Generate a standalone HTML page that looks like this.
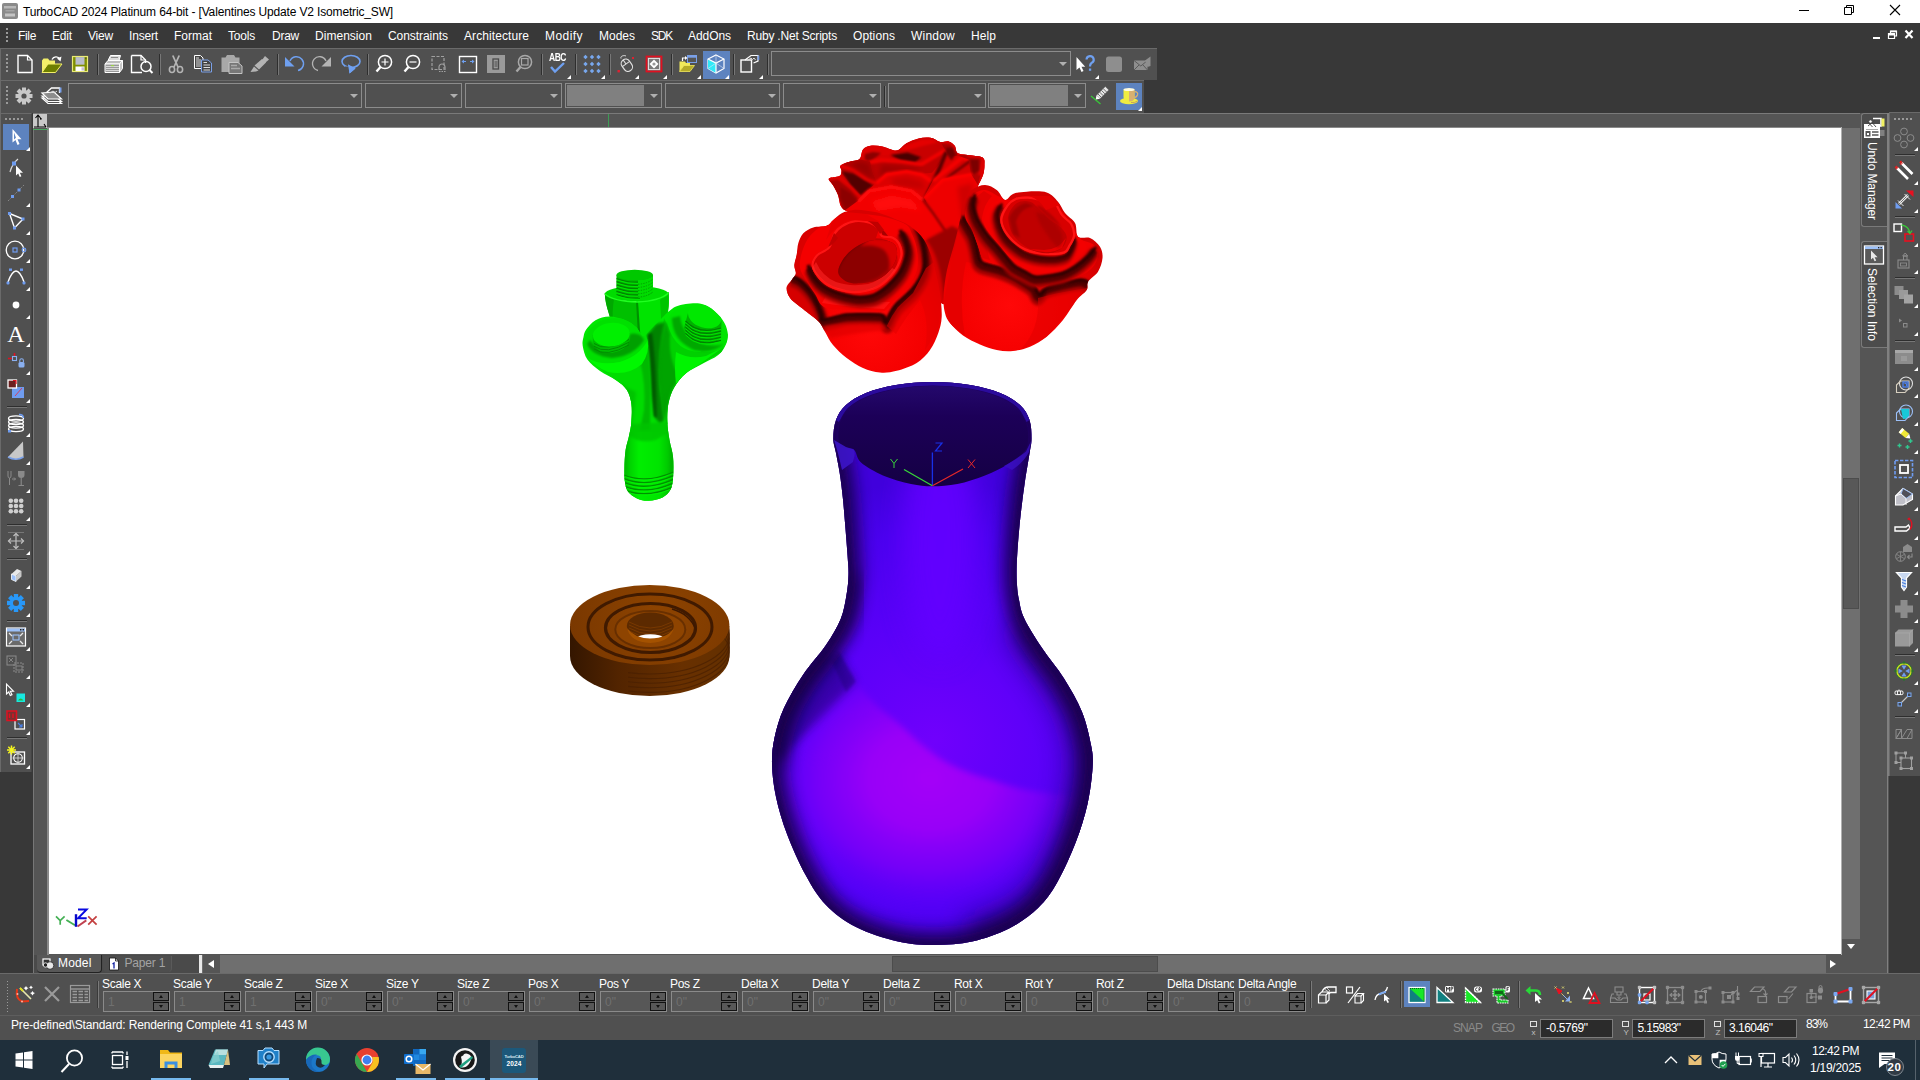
<!DOCTYPE html>
<html><head><meta charset="utf-8"><title>TurboCAD</title>
<style>
html,body{margin:0;padding:0;}
body{width:1920px;height:1080px;overflow:hidden;position:relative;background:#383838;font-family:"Liberation Sans",sans-serif;font-size:12px;}
div,svg{box-sizing:border-box;}
svg{overflow:visible;}
</style></head><body>
<div style="position:absolute;left:0px;top:0px;width:1920px;height:23px;background:#ffffff;"></div>
<div style="position:absolute;left:23px;top:5.84px;font-size:12px;line-height:1;color:#000;white-space:pre;letter-spacing:-0.151px;">TurboCAD 2024 Platinum 64-bit - [Valentines Update V2 Isometric_SW]</div>
<div style="position:absolute;left:0px;top:23px;width:1920px;height:90px;background:#383838;"></div>
<div style="position:absolute;left:18px;top:29.84px;font-size:12px;line-height:1;color:#fff;white-space:pre;letter-spacing:-0.336px;">File</div>
<div style="position:absolute;left:52px;top:29.84px;font-size:12px;line-height:1;color:#fff;white-space:pre;letter-spacing:-0.168px;">Edit</div>
<div style="position:absolute;left:88px;top:29.84px;font-size:12px;line-height:1;color:#fff;white-space:pre;letter-spacing:-0.199px;">View</div>
<div style="position:absolute;left:129px;top:29.84px;font-size:12px;line-height:1;color:#fff;white-space:pre;letter-spacing:-0.167px;">Insert</div>
<div style="position:absolute;left:174px;top:29.84px;font-size:12px;line-height:1;color:#fff;white-space:pre;letter-spacing:0.000px;">Format</div>
<div style="position:absolute;left:228px;top:29.84px;font-size:12px;line-height:1;color:#fff;white-space:pre;letter-spacing:-0.203px;">Tools</div>
<div style="position:absolute;left:272px;top:29.84px;font-size:12px;line-height:1;color:#fff;white-space:pre;letter-spacing:-0.254px;">Draw</div>
<div style="position:absolute;left:315px;top:29.84px;font-size:12px;line-height:1;color:#fff;white-space:pre;letter-spacing:0.033px;">Dimension</div>
<div style="position:absolute;left:388px;top:29.84px;font-size:12px;line-height:1;color:#fff;white-space:pre;letter-spacing:-0.062px;">Constraints</div>
<div style="position:absolute;left:464px;top:29.84px;font-size:12px;line-height:1;color:#fff;white-space:pre;letter-spacing:0.082px;">Architecture</div>
<div style="position:absolute;left:545px;top:29.84px;font-size:12px;line-height:1;color:#fff;white-space:pre;letter-spacing:0.443px;">Modify</div>
<div style="position:absolute;left:599px;top:29.84px;font-size:12px;line-height:1;color:#fff;white-space:pre;letter-spacing:-0.003px;">Modes</div>
<div style="position:absolute;left:651px;top:29.84px;font-size:12px;line-height:1;color:#fff;white-space:pre;letter-spacing:-1.224px;">SDK</div>
<div style="position:absolute;left:688px;top:29.84px;font-size:12px;line-height:1;color:#fff;white-space:pre;letter-spacing:-0.057px;">AddOns</div>
<div style="position:absolute;left:747px;top:29.84px;font-size:12px;line-height:1;color:#fff;white-space:pre;letter-spacing:-0.197px;">Ruby .Net Scripts</div>
<div style="position:absolute;left:853px;top:29.84px;font-size:12px;line-height:1;color:#fff;white-space:pre;letter-spacing:0.094px;">Options</div>
<div style="position:absolute;left:911px;top:29.84px;font-size:12px;line-height:1;color:#fff;white-space:pre;letter-spacing:0.219px;">Window</div>
<div style="position:absolute;left:971px;top:29.84px;font-size:12px;line-height:1;color:#fff;white-space:pre;letter-spacing:0.078px;">Help</div>
<div style="position:absolute;left:6px;top:28px;width:2px;height:2px;background:#9a9a9a;"></div>
<div style="position:absolute;left:6px;top:32px;width:2px;height:2px;background:#9a9a9a;"></div>
<div style="position:absolute;left:6px;top:36px;width:2px;height:2px;background:#9a9a9a;"></div>
<div style="position:absolute;left:6px;top:40px;width:2px;height:2px;background:#9a9a9a;"></div>
<div style="position:absolute;left:0px;top:48px;width:1157px;height:32px;background:#505050;border-top:1px solid #6a6a6a;border-left:1px solid #6a6a6a;"></div>
<div style="position:absolute;left:6px;top:54px;width:2px;height:2px;background:#9a9a9a;"></div>
<div style="position:absolute;left:6px;top:58px;width:2px;height:2px;background:#9a9a9a;"></div>
<div style="position:absolute;left:6px;top:62px;width:2px;height:2px;background:#9a9a9a;"></div>
<div style="position:absolute;left:6px;top:66px;width:2px;height:2px;background:#9a9a9a;"></div>
<div style="position:absolute;left:6px;top:70px;width:2px;height:2px;background:#9a9a9a;"></div>
<div style="position:absolute;left:0px;top:80px;width:1144px;height:33px;background:#505050;border-top:1px solid #6a6a6a;border-left:1px solid #6a6a6a;"></div>
<div style="position:absolute;left:6px;top:86px;width:2px;height:2px;background:#9a9a9a;"></div>
<div style="position:absolute;left:6px;top:90px;width:2px;height:2px;background:#9a9a9a;"></div>
<div style="position:absolute;left:6px;top:94px;width:2px;height:2px;background:#9a9a9a;"></div>
<div style="position:absolute;left:6px;top:98px;width:2px;height:2px;background:#9a9a9a;"></div>
<div style="position:absolute;left:6px;top:102px;width:2px;height:2px;background:#9a9a9a;"></div>
<div style="position:absolute;left:0px;top:113px;width:1860px;height:860px;background:#555555;"></div>
<div style="position:absolute;left:32px;top:113px;width:1828px;height:1px;background:#7a7a7a;"></div>
<div style="position:absolute;left:47px;top:127px;width:1795px;height:1px;background:#8a8a8a;"></div>
<div style="position:absolute;left:47px;top:127px;width:2px;height:828px;background:#8a8a8a;"></div>
<div style="position:absolute;left:1841px;top:127px;width:1px;height:828px;background:#b0b0b0;"></div>
<div style="position:absolute;left:33px;top:113px;width:1px;height:860px;background:#777;"></div>
<div style="position:absolute;left:0px;top:113px;width:33px;height:860px;background:#383838;"></div>
<div style="position:absolute;left:0px;top:113px;width:32px;height:659px;background:#505050;border-top:1px solid #6a6a6a;border-left:1px solid #6a6a6a;border-right:1px solid #444;"></div>
<div style="position:absolute;left:5px;top:118px;width:2px;height:2px;background:#9a9a9a;"></div>
<div style="position:absolute;left:9px;top:118px;width:2px;height:2px;background:#9a9a9a;"></div>
<div style="position:absolute;left:13px;top:118px;width:2px;height:2px;background:#9a9a9a;"></div>
<div style="position:absolute;left:17px;top:118px;width:2px;height:2px;background:#9a9a9a;"></div>
<div style="position:absolute;left:21px;top:118px;width:2px;height:2px;background:#9a9a9a;"></div>
<div style="position:absolute;left:33px;top:114px;width:14px;height:14px;background:#c8c8c8;"></div>
<div style="position:absolute;left:49px;top:128px;width:1792px;height:826px;background:#ffffff;"></div>
<div style="position:absolute;left:1842px;top:128px;width:18px;height:827px;background:#6f6f6f;"></div>
<div style="position:absolute;left:1843px;top:478px;width:16px;height:131px;background:#585858;border:1px solid #4c4c4c;"></div>
<div style="position:absolute;left:1842px;top:939px;width:18px;height:16px;background:#555555;"></div>
<div style="position:absolute;left:200px;top:955px;width:1642px;height:18px;background:#6f6f6f;"></div>
<div style="position:absolute;left:892px;top:956px;width:266px;height:16px;background:#585858;border:1px solid #4c4c4c;"></div>
<div style="position:absolute;left:1826px;top:955px;width:16px;height:18px;background:#555555;"></div>
<div style="position:absolute;left:203px;top:955px;width:17px;height:18px;background:#555555;"></div>
<div style="position:absolute;left:1842px;top:955px;width:18px;height:18px;background:#555555;"></div>
<div style="position:absolute;left:1860px;top:113px;width:29px;height:860px;background:#555555;"></div>
<div style="position:absolute;left:1889px;top:112px;width:31px;height:664px;background:#505050;border-top:1px solid #6a6a6a;border-left:1px solid #6a6a6a;"></div>
<div style="position:absolute;left:1889px;top:776px;width:31px;height:197px;background:#383838;"></div>
<div style="position:absolute;left:1894px;top:118px;width:2px;height:2px;background:#9a9a9a;"></div>
<div style="position:absolute;left:1898px;top:118px;width:2px;height:2px;background:#9a9a9a;"></div>
<div style="position:absolute;left:1902px;top:118px;width:2px;height:2px;background:#9a9a9a;"></div>
<div style="position:absolute;left:1906px;top:118px;width:2px;height:2px;background:#9a9a9a;"></div>
<div style="position:absolute;left:1910px;top:118px;width:2px;height:2px;background:#9a9a9a;"></div>
<div style="position:absolute;left:0px;top:973px;width:1920px;height:42px;background:#505050;border-top:1px solid #6a6a6a;"></div>
<div style="position:absolute;left:0px;top:1015px;width:1920px;height:25px;background:#505050;border-top:1px solid #5e5e5e;"></div>
<div style="position:absolute;left:0px;top:1040px;width:1920px;height:40px;background:#1f2f3b;"></div>
<svg style="position:absolute;left:2px;top:3px" width="16" height="16" viewBox="0 0 16 16"><rect x="0" y="0" width="16" height="16" rx="2" fill="#8a8a8a"/><rect x="2" y="3" width="12" height="2.500" fill="#b8b8b8"/><rect x="3.500" y="7" width="9" height="1.500" fill="#a4a4a4"/><rect x="3" y="10.500" width="10" height="3" fill="#c4c4c4"/></svg>
<svg style="position:absolute;left:1790px;top:0" width="130" height="23" viewBox="1790 0 130 23"><path d="M1799 10.500H1809" stroke="#000" stroke-width="1"/><path d="M1844.500 7.500H1851.500V14.500H1844.500Z" fill="none" stroke="#000" stroke-width="1"/><path d="M1846.500 7.500V5.500H1853.500V12.500H1851.500" fill="none" stroke="#000" stroke-width="1"/><path d="M1890 5L1900 15M1900 5L1890 15" stroke="#000" stroke-width="1.100"/></svg>
<svg style="position:absolute;left:1865px;top:25px" width="55" height="20" viewBox="1865 25 55 20"><rect x="1873" y="37" width="7" height="2" fill="#fff"/><path d="M1888.500 33.500H1894.500V38.500H1888.500Z" fill="none" stroke="#fff" stroke-width="1.200"/><path d="M1888.500 34.500H1894.500" stroke="#fff" stroke-width="2"/><path d="M1890.500 33V31H1896.500V36H1895" fill="none" stroke="#fff" stroke-width="1.200"/><path d="M1890.500 31.500H1896.500" stroke="#fff" stroke-width="1.600"/><path d="M1905.500 30.500L1912.500 38M1912.500 30.500L1905.500 38" stroke="#fff" stroke-width="2.200"/></svg>
<div style="position:absolute;left:608px;top:114px;width:1px;height:13px;background:#3c9c54;"></div>
<svg style="position:absolute;left:8.5px;top:48.0px" width="32" height="32" viewBox="-16.0 -16.0 32 32"><path d="M-7 -8.5H2.5L7 -4V8.5H-7Z" fill="none" stroke="#fff" stroke-width="1.4"/><path d="M2.5 -8.5V-4H7" fill="none" stroke="#fff" stroke-width="1.2"/></svg>
<svg style="position:absolute;left:36.0px;top:48.0px" width="32" height="32" viewBox="-16.0 -16.0 32 32"><path d="M-10 8.5V-3.5L-8.5 -5.5H-4L-2.5 -3.5H3V0H-3Z" fill="#f3ef6a"/><path d="M-10 8.5L-4 0H10L3.5 8.5Z" fill="#6e7f00" stroke="#f3ef6a" stroke-width="1"/><path d="M0 -4.5A4.5 4.5 0 0 1 8 -5" fill="none" stroke="#fff" stroke-width="1.3"/><path d="M9.5 -7.5L8.5 -2.5L5 -5.5Z" fill="#fff"/></svg>
<svg style="position:absolute;left:64.0px;top:48.0px" width="32" height="32" viewBox="-16.0 -16.0 32 32"><rect x="-7.500" y="-7.500" width="15" height="15" fill="#7f8f00" stroke="#eaea78" stroke-width="1.200"/><rect x="-4.500" y="-6.900" width="9" height="7.600" fill="#b9bccb"/><rect x="-4.500" y="2.500" width="9" height="4.500" fill="#fff"/><rect x="1.500" y="3.300" width="2.500" height="3.200" fill="#c9c0d8"/><rect x="5.300" y="-6.300" width="1" height="1" fill="#333"/></svg>
<div style="position:absolute;left:97px;top:54px;width:1px;height:21px;background:#2e2e2e;"></div>
<div style="position:absolute;left:98px;top:54px;width:1px;height:21px;background:#777;"></div>
<svg style="position:absolute;left:98.0px;top:48.0px" width="32" height="32" viewBox="-16.0 -16.0 32 32"><path d="M-6 -3.5L-3.5 -8.5H6.5L5 -3.5Z" fill="#d8d8d8" stroke="#fff" stroke-width="1"/><path d="M-3 -6.5H4" stroke="#888" stroke-width="1"/><path d="M-9 0L-6 -3.5H8.5L5.5 0Z" fill="#bdbdbd" stroke="#fff" stroke-width="1"/><path d="M-9 0H5.5V8.5H-9Z" fill="#9a9a9a" stroke="#fff" stroke-width="1"/><path d="M5.5 0L8.5 -3.5V4.5L5.5 8.5Z" fill="#c8c8c8" stroke="#fff" stroke-width="1"/><path d="M-8 2.5H5M-8 4.5H5M-8 6.5H5" stroke="#e8e8e8" stroke-width=".8"/><rect x="-3" y="1" width="3" height="1.2" fill="#9ad04a"/></svg>
<svg style="position:absolute;left:126.0px;top:48.0px" width="32" height="32" viewBox="-16.0 -16.0 32 32"><path d="M-10.5 -8.5H-1L3.5 -4V-1M-10.5 -8.5V8.5H0" fill="none" stroke="#fff" stroke-width="1.4"/><path d="M-1 -8.5V-4H3.5" fill="none" stroke="#fff" stroke-width="1.2"/><circle cx="4" cy="2.5" r="5" fill="none" stroke="#fff" stroke-width="1.5"/><path d="M7.5 6L10.5 9" stroke="#fff" stroke-width="2"/></svg>
<div style="position:absolute;left:159px;top:54px;width:1px;height:21px;background:#2e2e2e;"></div>
<div style="position:absolute;left:160px;top:54px;width:1px;height:21px;background:#777;"></div>
<svg style="position:absolute;left:159.5px;top:48.0px" width="32" height="32" viewBox="-16.0 -16.0 32 32"><path d="M-3.2 -8.5L2 3M3.2 -8.5L-2 3" stroke="#b4b4b4" stroke-width="1.8" fill="none"/><ellipse cx="-4" cy="5.5" rx="2.6" ry="3" fill="none" stroke="#b4b4b4" stroke-width="1.6"/><ellipse cx="4" cy="5.5" rx="2.6" ry="3" fill="none" stroke="#b4b4b4" stroke-width="1.6"/></svg>
<svg style="position:absolute;left:187.0px;top:48.0px" width="32" height="32" viewBox="-16.0 -16.0 32 32"><path d="M-8.5 -8.5H-2.5L0 -6V4.5H-8.5Z" fill="#444" stroke="#fff" stroke-width="1"/><path d="M-7 -6H-4M-7 -4H-2M-7 -2H-2M-7 0H-2M-7 2H-2" stroke="#ddd" stroke-width="1"/><path d="M-1.5 -4H5L8.5 -1V8H-1.5Z" fill="#444" stroke="#7aa0e8" stroke-width="1"/><path d="M0.5 -1.5H4M0.5 1H7M0.5 3.5H7M0.5 6H7" stroke="#ddd" stroke-width="1.2"/></svg>
<svg style="position:absolute;left:216.0px;top:48.0px" width="32" height="32" viewBox="-16.0 -16.0 32 32"><path d="M-10.5 -6.5H-6.5L-5 -9H2L3.5 -6.5H7.5V8H-10.5Z" fill="#a8a8a8"/><path d="M-3 -1.5H6L10 2V9.5H-3Z" fill="#777" stroke="#c4c4c4" stroke-width="1"/><path d="M-1 1.5H5M-1 4.5H8" stroke="#aaa" stroke-width="1.6"/></svg>
<svg style="position:absolute;left:244.0px;top:48.0px" width="32" height="32" viewBox="-16.0 -16.0 32 32"><path d="M5 -8L9 -4.5L5 -1L2 -4Z" fill="#b4b4b4"/><path d="M2 -5L6 -1.5L-1 5.5L-5.5 1.5Z" fill="#b4b4b4"/><path d="M-6 2.5L-1.5 6.5L-4 7.5L-9.5 8Z" fill="#b4b4b4"/></svg>
<div style="position:absolute;left:277px;top:54px;width:1px;height:21px;background:#2e2e2e;"></div>
<div style="position:absolute;left:278px;top:54px;width:1px;height:21px;background:#777;"></div>
<svg style="position:absolute;left:277.5px;top:48.0px" width="32" height="32" viewBox="-16.0 -16.0 32 32"><path d="M-9 -7V2.5H0.5Z" fill="#6fa0f0"/><path d="M-4 -3A7 7 0 1 1 4 6.5" fill="none" stroke="#6fa0f0" stroke-width="1.5"/></svg>
<svg style="position:absolute;left:306.0px;top:48.0px" width="32" height="32" viewBox="-16.0 -16.0 32 32"><path d="M9 -7V2.5H-0.5Z" fill="#b4b4b4"/><path d="M4 -3A7 7 0 1 0 -4 6.5" fill="none" stroke="#b4b4b4" stroke-width="1.3"/></svg>
<svg style="position:absolute;left:334.5px;top:48.0px" width="32" height="32" viewBox="-16.0 -16.0 32 32"><ellipse cx="0" cy="-2.5" rx="9" ry="6" fill="none" stroke="#6fa0f0" stroke-width="1.6"/><path d="M-3 0.5L4.5 4.5L-1.5 9.5Z" fill="#6fa0f0"/><rect x="-6" y="2.5" width="6" height="4" fill="#505050"/><path d="M-3 0.5L4.5 4.5L-1.5 9.5Z" fill="#6fa0f0"/></svg>
<div style="position:absolute;left:367px;top:54px;width:1px;height:21px;background:#2e2e2e;"></div>
<div style="position:absolute;left:368px;top:54px;width:1px;height:21px;background:#777;"></div>
<svg style="position:absolute;left:368.0px;top:48.0px" width="32" height="32" viewBox="-16.0 -16.0 32 32"><circle cx="1" cy="-2" r="6.6" fill="none" stroke="#fff" stroke-width="1.5"/><path d="M-3.5 3L-7.5 7.5" stroke="#fff" stroke-width="2.4"/><path d="M-2.5 -2H4.5M1 -5.5V1.5" stroke="#fff" stroke-width="1.2"/></svg>
<svg style="position:absolute;left:396.0px;top:48.0px" width="32" height="32" viewBox="-16.0 -16.0 32 32"><circle cx="1" cy="-2" r="6.6" fill="none" stroke="#fff" stroke-width="1.5"/><path d="M-3.5 3L-7.5 7.5" stroke="#fff" stroke-width="2.4"/><path d="M-2.5 -2H4.5" stroke="#fff" stroke-width="1.2"/></svg>
<svg style="position:absolute;left:424.0px;top:48.0px" width="32" height="32" viewBox="-16.0 -16.0 32 32"><rect x="-8" y="-7.5" width="12" height="13" fill="none" stroke="#a0a0a0" stroke-width="1.2" stroke-dasharray="3 1.5"/><path d="M-1 6V3A3 3 0 0 1 5 3V6" fill="none" stroke="#a0a0a0" stroke-width="1.2"/><path d="M-1 7.5H6" stroke="#a0a0a0" stroke-width="1.2" stroke-dasharray="1.5 1"/></svg>
<svg style="position:absolute;left:452.0px;top:48.0px" width="32" height="32" viewBox="-16.0 -16.0 32 32"><rect x="-8.5" y="-7.5" width="17" height="16" fill="none" stroke="#fff" stroke-width="1.4"/><path d="M-6.5 -2.5L-4 -4.5V-0.5ZM6.5 -2.5L4 -4.5V-0.5Z" fill="#6fa0f0"/><path d="M-4 -2.5H-2M2 -2.5H4" stroke="#6fa0f0" stroke-width="1.2"/></svg>
<svg style="position:absolute;left:480.0px;top:48.0px" width="32" height="32" viewBox="-16.0 -16.0 32 32"><rect x="-9" y="-9" width="18" height="18" fill="#9a9a9a"/><rect x="-3" y="-5" width="5.5" height="10" fill="none" stroke="#4a4a4a" stroke-width="1.3"/><path d="M-1.5 -2H1.5M-1.5 0H1.5M-1.5 2H1.5" stroke="#4a4a4a" stroke-width="1"/></svg>
<svg style="position:absolute;left:508.0px;top:48.0px" width="32" height="32" viewBox="-16.0 -16.0 32 32"><circle cx="1" cy="-2" r="6.6" fill="none" stroke="#a8a8a8" stroke-width="1.5"/><path d="M-3.5 3L-7.5 7.5" stroke="#a8a8a8" stroke-width="2.4"/><rect x="-2.5" y="-5.5" width="6.5" height="6.5" fill="none" stroke="#a8a8a8" stroke-width="1.2"/></svg>
<div style="position:absolute;left:541px;top:54px;width:1px;height:21px;background:#2e2e2e;"></div>
<div style="position:absolute;left:542px;top:54px;width:1px;height:21px;background:#777;"></div>
<div style="position:absolute;left:549px;top:53px;font-size:10px;font-weight:bold;color:#fff;letter-spacing:-0.6px;line-height:1;transform:scaleX(.85);transform-origin:left">ABC</div>
<svg style="position:absolute;left:542.0px;top:48.0px" width="32" height="32" viewBox="-16.0 -16.0 32 32"><path d="M-7 3L-3 7.5L6 -1" fill="none" stroke="#6fa0f0" stroke-width="2.4"/></svg>
<svg style="position:absolute;left:567px;top:75px" width="4" height="4" viewBox="0 0 4 4"><path d="M4 0V4H0Z" fill="#fff"/></svg>
<div style="position:absolute;left:575px;top:54px;width:1px;height:21px;background:#2e2e2e;"></div>
<div style="position:absolute;left:576px;top:54px;width:1px;height:21px;background:#777;"></div>
<svg style="position:absolute;left:576.0px;top:48.0px" width="32" height="32" viewBox="-16.0 -16.0 32 32"><path d="M-6.5 -9.2L-4.3 -7L-6.5 -4.8L-8.7 -7Z" fill="#78a8ee"/><path d="M-6.5 -2.2L-4.3 0L-6.5 2.2L-8.7 0Z" fill="#78a8ee"/><path d="M-6.5 4.8L-4.3 7L-6.5 9.2L-8.7 7Z" fill="#78a8ee"/><path d="M0 -9.2L2.2 -7L0 -4.8L-2.2 -7Z" fill="#78a8ee"/><path d="M0 -2.2L2.2 0L0 2.2L-2.2 0Z" fill="#78a8ee"/><path d="M0 4.8L2.2 7L0 9.2L-2.2 7Z" fill="#78a8ee"/><path d="M6.5 -9.2L8.7 -7L6.5 -4.8L4.3 -7Z" fill="#78a8ee"/><path d="M6.5 -2.2L8.7 0L6.5 2.2L4.3 0Z" fill="#78a8ee"/><path d="M6.5 4.8L8.7 7L6.5 9.2L4.3 7Z" fill="#78a8ee"/></svg>
<svg style="position:absolute;left:601px;top:75px" width="4" height="4" viewBox="0 0 4 4"><path d="M4 0V4H0Z" fill="#fff"/></svg>
<div style="position:absolute;left:609px;top:54px;width:1px;height:21px;background:#2e2e2e;"></div>
<div style="position:absolute;left:610px;top:54px;width:1px;height:21px;background:#777;"></div>
<svg style="position:absolute;left:610.0px;top:48.0px" width="32" height="32" viewBox="-16.0 -16.0 32 32"><g transform="rotate(-35)"><rect x="-4.5" y="-5" width="9" height="13" rx="4.5" fill="none" stroke="#e0e0e0" stroke-width="1.2"/><path d="M-4.5 0H4.5M0 -5V0" stroke="#e0e0e0" stroke-width="1"/></g><path d="M-5 -5.5C-6 -8 -2 -9 0 -8" fill="none" stroke="#e0e0e0" stroke-width="1"/><rect x="6" y="-7" width="2" height="2" fill="#e02030"/><rect x="-8.5" y="6" width="2.4" height="2.4" fill="#e02030"/></svg>
<svg style="position:absolute;left:635px;top:75px" width="4" height="4" viewBox="0 0 4 4"><path d="M4 0V4H0Z" fill="#fff"/></svg>
<svg style="position:absolute;left:638.0px;top:48.0px" width="32" height="32" viewBox="-16.0 -16.0 32 32"><rect x="-7.5" y="-7.5" width="15" height="15" fill="#7a7a7a" stroke="#e01020" stroke-width="1.8"/><rect x="-5.5" y="-5.5" width="11" height="11" fill="none" stroke="#ddd" stroke-width="1"/><path d="M0 -4.5L4.5 0L0 4.5L-4.5 0Z" fill="#fff"/><circle cx="0" cy="0" r="1.6" fill="#999"/></svg>
<svg style="position:absolute;left:663px;top:75px" width="4" height="4" viewBox="0 0 4 4"><path d="M4 0V4H0Z" fill="#fff"/></svg>
<div style="position:absolute;left:671px;top:54px;width:1px;height:21px;background:#2e2e2e;"></div>
<div style="position:absolute;left:672px;top:54px;width:1px;height:21px;background:#777;"></div>
<svg style="position:absolute;left:672.0px;top:48.0px" width="32" height="32" viewBox="-16.0 -16.0 32 32"><path d="M-8.5 7.5V-2.5H-3L-2 -1H2V2H-4Z" fill="#f1e95a"/><path d="M-8.5 7.5L-4 1.5H6.5L2 7.5Z" fill="#b5ab28" stroke="#f1e95a" stroke-width=".8"/><rect x="-0.5" y="-8.5" width="9" height="7" fill="#555" stroke="#7aa0e8" stroke-width="1"/><rect x="-0.5" y="-8.5" width="9" height="2.2" fill="#7aa0e8"/><path d="M-5.5 -3V-6H-2.5" fill="none" stroke="#fff" stroke-width="1.2"/><path d="M-3 -8L-0.5 -6L-3 -4Z" fill="#fff"/></svg>
<svg style="position:absolute;left:697px;top:75px" width="4" height="4" viewBox="0 0 4 4"><path d="M4 0V4H0Z" fill="#fff"/></svg>
<div style="position:absolute;left:703px;top:51px;width:27px;height:28px;background:#5d83bf;"></div>
<svg style="position:absolute;left:700.0px;top:48.0px" width="32" height="32" viewBox="-16.0 -16.0 32 32"><path d="M0 -9L8 -5V4.5L0 9L-8 4.5V-5Z" fill="none" stroke="#fff" stroke-width="1.2"/><path d="M-8 -5L0 -1L0 9L-8 4.5Z" fill="#30e8f8"/><path d="M-8 -5L0 -1L8 -5M0 -1V9" fill="none" stroke="#fff" stroke-width="1.2"/><path d="M0 -9V-1M-8 4.5L0 -1L8 4.5" fill="none" stroke="#dfe8f8" stroke-width=".6"/></svg>
<svg style="position:absolute;left:725px;top:75px" width="4" height="4" viewBox="0 0 4 4"><path d="M4 0V4H0Z" fill="#fff"/></svg>
<div style="position:absolute;left:733px;top:54px;width:1px;height:21px;background:#2e2e2e;"></div>
<div style="position:absolute;left:734px;top:54px;width:1px;height:21px;background:#777;"></div>
<svg style="position:absolute;left:734.0px;top:48.0px" width="32" height="32" viewBox="-16.0 -16.0 32 32"><rect x="-9" y="-4" width="10.5" height="12" fill="none" stroke="#fff" stroke-width="1.4"/><path d="M-5 -4L1 -8.5H8V-3L3.5 -1" fill="none" stroke="#fff" stroke-width="1.2"/><path d="M-2.5 -3.5L1 -6L2.5 -4.5L4 -6L5.5 -4" fill="none" stroke="#ddd" stroke-width="1"/><rect x="7.5" y="-8.5" width="1.8" height="4.5" fill="#7aa0e8"/></svg>
<svg style="position:absolute;left:759px;top:75px" width="4" height="4" viewBox="0 0 4 4"><path d="M4 0V4H0Z" fill="#fff"/></svg>
<div style="position:absolute;left:767px;top:54px;width:1px;height:21px;background:#2e2e2e;"></div>
<div style="position:absolute;left:768px;top:54px;width:1px;height:21px;background:#777;"></div>
<div style="position:absolute;left:771px;top:51px;width:300px;height:25px;background:transparent;border:1px solid #8c8c8c;"></div>
<svg style="position:absolute;left:1059px;top:62.0px" width="8" height="4" viewBox="0 0 8 4"><path d="M0 0H8L4 4Z" fill="#b0b0b0"/></svg>
<svg style="position:absolute;left:1070.0px;top:48.0px" width="32" height="32" viewBox="-16.0 -16.0 32 32"><path d="M-9.5 -7V6L-6.5 3.5L-4.5 8L-2.5 7L-4.5 2.8H-0.8Z" fill="#fff"/><path d="M0.5 -4.5A3.6 3.6 0 1 1 5.5 -1Q4 0 4 2.5" fill="none" stroke="#6fa0f0" stroke-width="2.2"/><rect x="2.9" y="4.5" width="2.3" height="2.3" fill="#6fa0f0"/></svg>
<svg style="position:absolute;left:1095px;top:75px" width="4" height="4" viewBox="0 0 4 4"><path d="M4 0V4H0Z" fill="#fff"/></svg>
<svg style="position:absolute;left:1098.0px;top:48.0px" width="32" height="32" viewBox="-16.0 -16.0 32 32"><rect x="-8" y="-7.5" width="16" height="15.5" rx="2.5" fill="#8e8e8e"/></svg>
<svg style="position:absolute;left:1126.0px;top:48.0px" width="32" height="32" viewBox="-16.0 -16.0 32 32"><rect x="-8" y="-3.5" width="13.5" height="9.5" fill="#8e8e8e"/><path d="M-8 -3.5L-1.2 2L5.5 -3.5M-8 6L-3 1M5.5 6L1 1" fill="none" stroke="#5a5a5a" stroke-width="1"/><path d="M3 -3.5L8.5 -7.5V2L5.5 3Z" fill="#8e8e8e"/></svg>
<svg style="position:absolute;left:8.0px;top:80.0px" width="32" height="32" viewBox="-16.0 -16.0 32 32"><rect x="-2" y="-8.5" width="4" height="5" fill="#c8c8c8" transform="rotate(0)"/><rect x="-2" y="-8.5" width="4" height="5" fill="#c8c8c8" transform="rotate(45)"/><rect x="-2" y="-8.5" width="4" height="5" fill="#c8c8c8" transform="rotate(90)"/><rect x="-2" y="-8.5" width="4" height="5" fill="#c8c8c8" transform="rotate(135)"/><rect x="-2" y="-8.5" width="4" height="5" fill="#c8c8c8" transform="rotate(180)"/><rect x="-2" y="-8.5" width="4" height="5" fill="#c8c8c8" transform="rotate(225)"/><rect x="-2" y="-8.5" width="4" height="5" fill="#c8c8c8" transform="rotate(270)"/><rect x="-2" y="-8.5" width="4" height="5" fill="#c8c8c8" transform="rotate(315)"/><circle r="6" fill="#c8c8c8"/><circle r="2.6" fill="#505050"/></svg>
<svg style="position:absolute;left:36.0px;top:80.0px" width="32" height="32" viewBox="-16.0 -16.0 32 32"><path d="M-10 2L-4 7.5H9.5L3 2Z" fill="none" stroke="#fff" stroke-width="1.2"/><path d="M-10 0L-4 5.5H9.5L3 0Z" fill="#505050" stroke="#fff" stroke-width="1.2"/><path d="M-10 -3L-4 3H9.5L2 -4Z" fill="#8c8c8c" stroke="#fff" stroke-width="1.2"/><path d="M-5.5 -3.5L-0.5 -8H7.5V-3" fill="none" stroke="#fff" stroke-width="1.3"/><rect x="7.5" y="-8.5" width="2" height="5" fill="#7aa0e8"/><path d="M-2 -3L1 -5L3 -3.5L5 -5" fill="none" stroke="#ddd" stroke-width="1"/></svg>
<div style="position:absolute;left:68px;top:83px;width:294px;height:25px;background:transparent;border:1px solid #8c8c8c;"></div>
<svg style="position:absolute;left:350px;top:94.0px" width="8" height="4" viewBox="0 0 8 4"><path d="M0 0H8L4 4Z" fill="#b0b0b0"/></svg>
<div style="position:absolute;left:365px;top:83px;width:97px;height:25px;background:transparent;border:1px solid #8c8c8c;"></div>
<svg style="position:absolute;left:450px;top:94.0px" width="8" height="4" viewBox="0 0 8 4"><path d="M0 0H8L4 4Z" fill="#b0b0b0"/></svg>
<div style="position:absolute;left:465px;top:83px;width:97px;height:25px;background:transparent;border:1px solid #8c8c8c;"></div>
<svg style="position:absolute;left:550px;top:94.0px" width="8" height="4" viewBox="0 0 8 4"><path d="M0 0H8L4 4Z" fill="#b0b0b0"/></svg>
<div style="position:absolute;left:565px;top:83px;width:97px;height:25px;background:transparent;border:1px solid #8c8c8c;"></div>
<div style="position:absolute;left:567px;top:85px;width:77px;height:21px;background:#808080;"></div>
<svg style="position:absolute;left:650px;top:94.0px" width="8" height="4" viewBox="0 0 8 4"><path d="M0 0H8L4 4Z" fill="#b0b0b0"/></svg>
<div style="position:absolute;left:665px;top:83px;width:115px;height:25px;background:transparent;border:1px solid #8c8c8c;"></div>
<svg style="position:absolute;left:768px;top:94.0px" width="8" height="4" viewBox="0 0 8 4"><path d="M0 0H8L4 4Z" fill="#b0b0b0"/></svg>
<div style="position:absolute;left:783px;top:83px;width:98px;height:25px;background:transparent;border:1px solid #8c8c8c;"></div>
<svg style="position:absolute;left:869px;top:94.0px" width="8" height="4" viewBox="0 0 8 4"><path d="M0 0H8L4 4Z" fill="#b0b0b0"/></svg>
<div style="position:absolute;left:884px;top:86px;width:1px;height:21px;background:#2e2e2e;"></div>
<div style="position:absolute;left:885px;top:86px;width:1px;height:21px;background:#777;"></div>
<div style="position:absolute;left:888px;top:83px;width:98px;height:25px;background:transparent;border:1px solid #8c8c8c;"></div>
<svg style="position:absolute;left:974px;top:94.0px" width="8" height="4" viewBox="0 0 8 4"><path d="M0 0H8L4 4Z" fill="#b0b0b0"/></svg>
<div style="position:absolute;left:988px;top:83px;width:98px;height:25px;background:transparent;border:1px solid #8c8c8c;"></div>
<div style="position:absolute;left:990px;top:85px;width:78px;height:21px;background:#808080;"></div>
<svg style="position:absolute;left:1074px;top:94.0px" width="8" height="4" viewBox="0 0 8 4"><path d="M0 0H8L4 4Z" fill="#b0b0b0"/></svg>
<svg style="position:absolute;left:1084.0px;top:80.0px" width="32" height="32" viewBox="-16.0 -16.0 32 32"><path d="M-9 0L0.5 8" stroke="#38c838" stroke-width="1.3"/><g transform="rotate(-45)"><rect x="-2" y="-3" width="12.5" height="5" fill="#e8e8e8" stroke="#555" stroke-width=".5"/><path d="M0 -3V2M2.5 -3V2M5 -3V2M7.5 -3V2" stroke="#666" stroke-width=".9"/><path d="M-2 -3L-5.5 -0.5L-2 2Z" fill="#fff"/></g></svg>
<div style="position:absolute;left:1116px;top:83px;width:26px;height:27px;background:#5d83bf;"></div>
<svg style="position:absolute;left:1113.0px;top:80.0px" width="32" height="32" viewBox="-16.0 -16.0 32 32"><ellipse cx="0" cy="5" rx="9" ry="3.2" fill="#f0ec40"/><path d="M-5.5 -6.5H5.5V1Q5.5 5.5 0 5.5Q-5.5 5.5 -5.5 1Z" fill="#f0ec40"/><path d="M0 -6.5H5.5V1Q5.5 5.5 0 5.5Z" fill="#d8b070"/><ellipse cx="0" cy="-6.5" rx="5.5" ry="1.6" fill="#fffbe0"/><path d="M5.5 -4.5Q9.5 -4 8.5 -1Q7.5 1.5 5 1.5" fill="none" stroke="#d8b070" stroke-width="1.3"/><path d="M2 6.5Q6 7 8.5 5" fill="none" stroke="#c8a060" stroke-width="1"/></svg>
<svg style="position:absolute;left:1138px;top:107px" width="4" height="4" viewBox="0 0 4 4"><path d="M4 0V4H0Z" fill="#fff"/></svg>
<div style="position:absolute;left:3px;top:124px;width:26px;height:26px;background:#5d83bf;"></div>
<svg style="position:absolute;left:0.0px;top:121.0px" width="32" height="32" viewBox="-16.0 -16.0 32 32"><path d="M-3.5 -8V5.5L-0.5 3L1.5 8L3.5 7L1.5 2.2H5.5Z" fill="#fff"/><path d="M-2 -4.5V2.5L0 0.8Z" fill="#6289c6"/></svg>
<svg style="position:absolute;left:26px;top:147px" width="4" height="4" viewBox="0 0 4 4"><path d="M4 0V4H0Z" fill="#fff"/></svg>
<svg style="position:absolute;left:0.0px;top:151.0px" width="32" height="32" viewBox="-16.0 -16.0 32 32"><path d="M-6 5Q-4 -3 2 -8" fill="none" stroke="#ddd" stroke-width="1.2"/><rect x="-4" y="-5.5" width="4" height="4" fill="#6f9cf0"/><path d="M0 -1.5V8.5L2.2 6.5L3.8 10L5.4 9.2L3.8 5.8H7Z" fill="#fff"/></svg>
<svg style="position:absolute;left:0.0px;top:176.5px" width="32" height="32" viewBox="-16.0 -16.0 32 32"><path d="M-8 8L8 -8" stroke="#888" stroke-width="1" stroke-dasharray="2 1.5"/><rect x="-5" y="2" width="3" height="3" fill="#6f9cf0"/><rect x="1.5" y="-4.5" width="3" height="3" fill="#6f9cf0"/></svg>
<svg style="position:absolute;left:26px;top:203px" width="4" height="4" viewBox="0 0 4 4"><path d="M4 0V4H0Z" fill="#fff"/></svg>
<svg style="position:absolute;left:0.0px;top:204.0px" width="32" height="32" viewBox="-16.0 -16.0 32 32"><path d="M-6.5 -6.5L7 -1L-1.5 8Z" fill="none" stroke="#fff" stroke-width="1.4"/><rect x="-8" y="-8" width="3" height="3" fill="#6f9cf0"/><rect x="5.5" y="-2.5" width="3" height="3" fill="#6f9cf0"/><rect x="-3" y="6.5" width="3" height="3" fill="#6f9cf0"/></svg>
<svg style="position:absolute;left:26px;top:231px" width="4" height="4" viewBox="0 0 4 4"><path d="M4 0V4H0Z" fill="#fff"/></svg>
<svg style="position:absolute;left:0.0px;top:233.5px" width="32" height="32" viewBox="-16.0 -16.0 32 32"><circle cx="-1" cy="0" r="8.8" fill="none" stroke="#fff" stroke-width="1.3"/><rect x="-3" y="-2" width="4" height="4" fill="none" stroke="#6f9cf0" stroke-width="1.2"/><circle cx="8" cy="0" r="1.8" fill="none" stroke="#6f9cf0" stroke-width="1.2"/></svg>
<svg style="position:absolute;left:26px;top:259px" width="4" height="4" viewBox="0 0 4 4"><path d="M4 0V4H0Z" fill="#fff"/></svg>
<svg style="position:absolute;left:0.0px;top:260.0px" width="32" height="32" viewBox="-16.0 -16.0 32 32"><path d="M-8 6Q0 -16 8 6" fill="none" stroke="#fff" stroke-width="1.4"/><rect x="-9.5" y="5.5" width="3" height="3" rx="1" fill="#6f9cf0"/><rect x="6.5" y="5.5" width="3" height="3" rx="1" fill="#6f9cf0"/><rect x="-7" y="-7.5" width="3" height="2.4" fill="#6f9cf0"/><rect x="4" y="-7.5" width="3" height="2.4" fill="#6f9cf0"/></svg>
<svg style="position:absolute;left:26px;top:287px" width="4" height="4" viewBox="0 0 4 4"><path d="M4 0V4H0Z" fill="#fff"/></svg>
<svg style="position:absolute;left:0.0px;top:289.0px" width="32" height="32" viewBox="-16.0 -16.0 32 32"><circle r="3.4" fill="#fff"/></svg>
<svg style="position:absolute;left:26px;top:315px" width="4" height="4" viewBox="0 0 4 4"><path d="M4 0V4H0Z" fill="#fff"/></svg>
<div style="position:absolute;left:6px;top:322px;width:20px;text-align:center;font-family:'Liberation Serif',serif;font-size:24px;line-height:24px;color:#fff;">A</div>
<svg style="position:absolute;left:26px;top:343px" width="4" height="4" viewBox="0 0 4 4"><path d="M4 0V4H0Z" fill="#fff"/></svg>
<svg style="position:absolute;left:0.0px;top:345.0px" width="32" height="32" viewBox="-16.0 -16.0 32 32"><path d="M-8 -2.5H-3.5M-1.5 -8V-4.5" stroke="#e01020" stroke-width="1.6"/><rect x="-3.5" y="-4.5" width="4" height="4" fill="none" stroke="#8ab0f0" stroke-width="1.1"/><rect x="2.5" y="1" width="6" height="5.5" rx="1.5" fill="#8ab0f0"/><path d="M3.8 1.5V-0.5A1.8 1.8 0 0 1 7.4 -0.5V1.5" fill="none" stroke="#8ab0f0" stroke-width="1.1"/></svg>
<svg style="position:absolute;left:26px;top:371px" width="4" height="4" viewBox="0 0 4 4"><path d="M4 0V4H0Z" fill="#fff"/></svg>
<svg style="position:absolute;left:0.0px;top:373.0px" width="32" height="32" viewBox="-16.0 -16.0 32 32"><rect x="-4" y="-2" width="12" height="11" fill="#6f9cf0"/><path d="M-1 7L6 -1" stroke="#d04060" stroke-width="1"/><rect x="-8" y="-9" width="8.5" height="8" fill="#6a2020" stroke="#fff" stroke-width="1.3"/><path d="M-3 -8.5H0V-5" stroke="#e01020" stroke-width="1.2" fill="none"/></svg>
<svg style="position:absolute;left:26px;top:399px" width="4" height="4" viewBox="0 0 4 4"><path d="M4 0V4H0Z" fill="#fff"/></svg>
<div style="position:absolute;left:7px;top:406px;width:20px;height:1px;background:#2e2e2e;"></div>
<div style="position:absolute;left:7px;top:407px;width:20px;height:1px;background:#777;"></div>
<svg style="position:absolute;left:0.0px;top:407.0px" width="32" height="32" viewBox="-16.0 -16.0 32 32"><ellipse cx="0" cy="-4.5" rx="7.5" ry="2.6" fill="none" stroke="#fff" stroke-width="1.3"/><ellipse cx="0" cy="-1" rx="7.5" ry="2.6" fill="none" stroke="#fff" stroke-width="1.3"/><ellipse cx="0" cy="2.5" rx="7.5" ry="2.6" fill="none" stroke="#fff" stroke-width="1.3"/><ellipse cx="0" cy="6" rx="7.5" ry="2.6" fill="none" stroke="#fff" stroke-width="1.3"/><path d="M3 -8.5Q7 -9 7.5 -5" fill="none" stroke="#6f9cf0" stroke-width="1.4"/><rect x="-8" y="7" width="3" height="2.5" fill="#6f9cf0"/></svg>
<svg style="position:absolute;left:26px;top:433px" width="4" height="4" viewBox="0 0 4 4"><path d="M4 0V4H0Z" fill="#fff"/></svg>
<svg style="position:absolute;left:0.0px;top:435.0px" width="32" height="32" viewBox="-16.0 -16.0 32 32"><path d="M7 -9.5L7.5 6Q0 10.5 -8 6Z" fill="#c8c8c8"/><path d="M-8 6Q0 10.5 7.5 6" fill="none" stroke="#7aa0e8" stroke-width="1.6"/></svg>
<svg style="position:absolute;left:26px;top:461px" width="4" height="4" viewBox="0 0 4 4"><path d="M4 0V4H0Z" fill="#fff"/></svg>
<svg style="position:absolute;left:0.0px;top:462.0px" width="32" height="32" viewBox="-16.0 -16.0 32 32"><path d="M-8 -7V-2Q-8 0 -6.5 0V7M-5 -7V-2Q-5 0 -6.5 0" fill="none" stroke="#8a8a8a" stroke-width="1"/><path d="M-4 1H-0.5M-2 -0.5L-0.5 1L-2 2.5" fill="none" stroke="#8a8a8a" stroke-width="1"/><path d="M2 -7H8.5V-3Q8.5 0 5.2 0Q2 0 2 -3Z" fill="#8a8a8a"/><path d="M5.2 0V7M2.5 7.5H8" stroke="#8a8a8a" stroke-width="1.1"/></svg>
<svg style="position:absolute;left:26px;top:489px" width="4" height="4" viewBox="0 0 4 4"><path d="M4 0V4H0Z" fill="#fff"/></svg>
<svg style="position:absolute;left:0.0px;top:490.0px" width="32" height="32" viewBox="-16.0 -16.0 32 32"><circle cx="-5.2" cy="-5.2" r="2.3" fill="#d0d0d0"/><circle cx="-5.2" cy="0" r="2.3" fill="#d0d0d0"/><circle cx="-5.2" cy="5.2" r="2.3" fill="#d0d0d0"/><circle cx="0" cy="-5.2" r="2.3" fill="#d0d0d0"/><circle cx="0" cy="0" r="2.3" fill="#d0d0d0"/><circle cx="0" cy="5.2" r="2.3" fill="#d0d0d0"/><circle cx="5.2" cy="-5.2" r="2.3" fill="#d0d0d0"/><circle cx="5.2" cy="0" r="2.3" fill="#d0d0d0"/><circle cx="5.2" cy="5.2" r="2.3" fill="#d0d0d0"/></svg>
<svg style="position:absolute;left:26px;top:517px" width="4" height="4" viewBox="0 0 4 4"><path d="M4 0V4H0Z" fill="#fff"/></svg>
<div style="position:absolute;left:7px;top:524px;width:20px;height:1px;background:#2e2e2e;"></div>
<div style="position:absolute;left:7px;top:525px;width:20px;height:1px;background:#777;"></div>
<svg style="position:absolute;left:0.0px;top:525.0px" width="32" height="32" viewBox="-16.0 -16.0 32 32"><path d="M-8 -8.5H8M-8 8.5H8" stroke="#777" stroke-width="1"/><path d="M0 -7.5V7.5M-7.5 0H7.5" stroke="#c0c0c0" stroke-width="1.2"/><path d="M-2.5 -5L0 -7.5L2.5 -5M-2.5 5L0 7.5L2.5 5M-5 -2.5L-7.5 0L-5 2.5M5 -2.5L7.5 0L5 2.5" fill="none" stroke="#c0c0c0" stroke-width="1.2"/></svg>
<svg style="position:absolute;left:26px;top:551px" width="4" height="4" viewBox="0 0 4 4"><path d="M4 0V4H0Z" fill="#fff"/></svg>
<div style="position:absolute;left:7px;top:558px;width:20px;height:1px;background:#2e2e2e;"></div>
<div style="position:absolute;left:7px;top:559px;width:20px;height:1px;background:#777;"></div>
<svg style="position:absolute;left:0.0px;top:559.0px" width="32" height="32" viewBox="-16.0 -16.0 32 32"><path d="M-4.5 -1L1 -6L5.5 -4L0 1Z" fill="#e8e8e8"/><path d="M-4.5 -1L0 1V6.5L-4.5 4.5Z" fill="#9cc0f8" stroke="#fff" stroke-width=".8"/><path d="M0 1L5.5 -4V1.5L0 6.5Z" fill="#c8c8c8"/></svg>
<svg style="position:absolute;left:26px;top:585px" width="4" height="4" viewBox="0 0 4 4"><path d="M4 0V4H0Z" fill="#fff"/></svg>
<svg style="position:absolute;left:0.0px;top:587.0px" width="32" height="32" viewBox="-16.0 -16.0 32 32"><rect x="-2.2" y="-9" width="4.4" height="5" fill="#2898f8" transform="rotate(0)"/><rect x="-2.2" y="-9" width="4.4" height="5" fill="#2898f8" transform="rotate(45)"/><rect x="-2.2" y="-9" width="4.4" height="5" fill="#2898f8" transform="rotate(90)"/><rect x="-2.2" y="-9" width="4.4" height="5" fill="#2898f8" transform="rotate(135)"/><rect x="-2.2" y="-9" width="4.4" height="5" fill="#2898f8" transform="rotate(180)"/><rect x="-2.2" y="-9" width="4.4" height="5" fill="#2898f8" transform="rotate(225)"/><rect x="-2.2" y="-9" width="4.4" height="5" fill="#2898f8" transform="rotate(270)"/><rect x="-2.2" y="-9" width="4.4" height="5" fill="#2898f8" transform="rotate(315)"/><circle r="6.3" fill="#2898f8"/><circle r="3" fill="#505050"/></svg>
<svg style="position:absolute;left:26px;top:613px" width="4" height="4" viewBox="0 0 4 4"><path d="M4 0V4H0Z" fill="#fff"/></svg>
<div style="position:absolute;left:7px;top:620px;width:20px;height:1px;background:#2e2e2e;"></div>
<div style="position:absolute;left:7px;top:621px;width:20px;height:1px;background:#777;"></div>
<svg style="position:absolute;left:0.0px;top:621.0px" width="32" height="32" viewBox="-16.0 -16.0 32 32"><rect x="-9.5" y="-9" width="19" height="18" fill="#6a6a6a" stroke="#fff" stroke-width="1.2"/><rect x="-9" y="-8.5" width="18" height="3" fill="#9cc0f8"/><rect x="4" y="-8" width="1.5" height="1.5" fill="#222"/><rect x="6.5" y="-8" width="1.5" height="1.5" fill="#222"/><rect x="-3" y="-2" width="6" height="5" fill="none" stroke="#9cc0f8" stroke-width="1.1"/><path d="M-7 -4L-4 -1M7 -4L4 -1M-7 7L-4 4M7 7L4 4" stroke="#e8e8e8" stroke-width="1.3"/></svg>
<svg style="position:absolute;left:26px;top:647px" width="4" height="4" viewBox="0 0 4 4"><path d="M4 0V4H0Z" fill="#fff"/></svg>
<svg style="position:absolute;left:0.0px;top:649.0px" width="32" height="32" viewBox="-16.0 -16.0 32 32"><rect x="-9" y="-9" width="9" height="9" fill="none" stroke="#8a8a8a" stroke-width="1"/><path d="M-7 -7L-3 -3M-3 -7L-7 -3" stroke="#8a8a8a" stroke-width=".9"/><rect x="-2" y="-2" width="9" height="9" fill="none" stroke="#8a8a8a" stroke-width="1" stroke-dasharray="2 1"/><rect x="0" y="1" width="6" height="4" fill="none" stroke="#8a8a8a" stroke-width=".9"/></svg>
<svg style="position:absolute;left:26px;top:675px" width="4" height="4" viewBox="0 0 4 4"><path d="M4 0V4H0Z" fill="#fff"/></svg>
<svg style="position:absolute;left:0.0px;top:677.0px" width="32" height="32" viewBox="-16.0 -16.0 32 32"><path d="M-9.5 -9V1L-7.3 -1L-5.7 2.5L-4 1.7L-5.7 -1.7H-2.5Z" fill="none" stroke="#fff" stroke-width="1.1"/><rect x="0.5" y="0.5" width="8.5" height="8.5" fill="#18e8e0"/><path d="M2 7.5Q4.5 3.5 7.5 7.5Z" fill="#28b838"/></svg>
<svg style="position:absolute;left:26px;top:703px" width="4" height="4" viewBox="0 0 4 4"><path d="M4 0V4H0Z" fill="#fff"/></svg>
<svg style="position:absolute;left:0.0px;top:704.0px" width="32" height="32" viewBox="-16.0 -16.0 32 32"><rect x="-1" y="-0.5" width="9.5" height="9.5" fill="#505050" stroke="#fff" stroke-width="1.2"/><path d="M2 3L6 7M6 7V4M6 7H3" stroke="#4a80e8" stroke-width="1.1" fill="none"/><rect x="-9" y="-9" width="9.5" height="9.5" fill="#7a3030" stroke="#e01020" stroke-width="1.5"/><path d="M-6.5 -6.5V-2M-3 -6.5V-2" stroke="#e01020" stroke-width="1.4"/></svg>
<svg style="position:absolute;left:26px;top:731px" width="4" height="4" viewBox="0 0 4 4"><path d="M4 0V4H0Z" fill="#fff"/></svg>
<div style="position:absolute;left:7px;top:737px;width:20px;height:1px;background:#2e2e2e;"></div>
<div style="position:absolute;left:7px;top:738px;width:20px;height:1px;background:#777;"></div>
<svg style="position:absolute;left:0.0px;top:739.0px" width="32" height="32" viewBox="-16.0 -16.0 32 32"><rect x="-5" y="-3" width="13.5" height="12" fill="#505050" stroke="#fff" stroke-width="1.3"/><circle cx="2" cy="3" r="4.3" fill="none" stroke="#fff" stroke-width="1.1"/><path d="M2 -2.5V8.5M-3.5 3H7.5" stroke="#ddd" stroke-width=".8"/><path d="M-4.5 -9.5V-0.5M-9 -5H0M-7.7 -8.2L-1.3 -1.8M-7.7 -1.8L-1.3 -8.2" stroke="#f4f420" stroke-width="1.5"/></svg>
<svg style="position:absolute;left:26px;top:765px" width="4" height="4" viewBox="0 0 4 4"><path d="M4 0V4H0Z" fill="#fff"/></svg>
<svg style="position:absolute;left:33.0px;top:114.0px" width="14" height="14" viewBox="-7.0 -7.0 14 14"><path d="M-6 6H6M-2 6V-6M-4.5 -3L-2 -6L0.5 -3M4 3L6 6" fill="none" stroke="#000" stroke-width="1.1"/><rect x="0" y="-3" width="1.6" height="1.6" fill="#000"/></svg>
<div style="position:absolute;left:33px;top:129px;width:15px;height:1px;background:#4aa860;"></div>
<div style="position:absolute;left:1887px;top:113px;width:2px;height:860px;background:#808080;"></div>
<div style="position:absolute;left:1888px;top:776px;width:1px;height:197px;background:#555;"></div>
<div style="position:absolute;left:1861px;top:113px;width:26px;height:114px;background:#4c4c4c;border-left:1px solid #7a7a7a;border-bottom:1px solid #7a7a7a;border-top:1px solid #7a7a7a;border-radius:3px 0 0 3px;"></div>
<div style="position:absolute;left:1861px;top:241px;width:26px;height:107px;background:#4c4c4c;border-left:1px solid #7a7a7a;border-bottom:1px solid #7a7a7a;border-top:1px solid #7a7a7a;border-radius:3px 0 0 3px;"></div>
<div style="position:absolute;left:1878px;top:142px;font-size:12px;line-height:1;color:#fff;white-space:pre;letter-spacing:-0.115px;transform-origin:0 0;transform:rotate(90deg);">Undo Manager</div>
<div style="position:absolute;left:1878px;top:268px;font-size:12px;line-height:1;color:#fff;white-space:pre;letter-spacing:0.022px;transform-origin:0 0;transform:rotate(90deg);">Selection Info</div>
<svg style="position:absolute;left:1862.0px;top:116.0px" width="24" height="24" viewBox="-12.0 -12.0 24 24"><rect x="-10" y="-4" width="16" height="14" fill="#fff"/><rect x="-8.5" y="3" width="5" height="5.5" fill="#555"/><rect x="-7" y="5" width="2" height="2" fill="#fff"/><path d="M-2 4H4.5M-2 7H4.5" stroke="#555" stroke-width="1.6"/><path d="M-7.5 1.5H4.5" stroke="#555" stroke-width="1" stroke-dasharray="1 1"/><path d="M-1 -9.5H7V-2H3" fill="none" stroke="#fff" stroke-width="1.6"/><rect x="7.5" y="-9.5" width="3" height="8" fill="#f0f060"/><path d="M-6 -2L1 -8M-4 -8L2 -1M-6.5 -6.5L-1.5 -1" stroke="#444" stroke-width=".9"/><circle cx="-3.5" cy="-6.5" r="1.6" fill="#fff" stroke="#444" stroke-width=".6"/><rect x="6" y="2" width="4.5" height="6" fill="#808080"/></svg>
<svg style="position:absolute;left:1862.0px;top:243.0px" width="24" height="24" viewBox="-12.0 -12.0 24 24"><rect x="-9.5" y="-9" width="19" height="18" fill="#5a5a5a" stroke="#fff" stroke-width="1.3"/><rect x="-9" y="-8.5" width="18" height="2.5" fill="#9cc0f8"/><rect x="4" y="-8" width="1.3" height="1.3" fill="#222"/><rect x="6.5" y="-8" width="1.3" height="1.3" fill="#222"/><path d="M-3 -4.5V4.5L-1 2.8L0.6 6.2L2.2 5.4L0.6 2.2H3.6Z" fill="#e8e8e8"/></svg>
<svg style="position:absolute;left:1888.0px;top:121.5px" width="32" height="32" viewBox="-16.0 -16.0 32 32"><circle cx="0" cy="-6.5" r="3.4" fill="none" stroke="#8c8c8c" stroke-width="1"/><circle cx="-6.5" cy="0" r="3.4" fill="none" stroke="#8c8c8c" stroke-width="1"/><circle cx="6.5" cy="0" r="3.4" fill="none" stroke="#8c8c8c" stroke-width="1"/><circle cx="0" cy="6.5" r="3.4" fill="none" stroke="#8c8c8c" stroke-width="1"/></svg>
<svg style="position:absolute;left:1914px;top:147px" width="4" height="4" viewBox="0 0 4 4"><path d="M4 0V4H0Z" fill="#fff"/></svg>
<div style="position:absolute;left:1895px;top:154px;width:20px;height:1px;background:#2e2e2e;"></div>
<div style="position:absolute;left:1895px;top:155px;width:20px;height:1px;background:#777;"></div>
<svg style="position:absolute;left:1888.0px;top:154.5px" width="32" height="32" viewBox="-16.0 -16.0 32 32"><path d="M-7 -3L4 8M-2.5 -8L8.5 3" stroke="#fff" stroke-width="2.6"/><path d="M-8.5 -4.5L-7 -3M-4 -9.5L-2.5 -8" stroke="#e02020" stroke-width="2.6"/><path d="M-8 -1.5L-5.5 -4M-3.5 -6L-1 -8.5" stroke="#e02020" stroke-width="1"/></svg>
<svg style="position:absolute;left:1914px;top:181px" width="4" height="4" viewBox="0 0 4 4"><path d="M4 0V4H0Z" fill="#fff"/></svg>
<svg style="position:absolute;left:1888.0px;top:184.0px" width="32" height="32" viewBox="-16.0 -16.0 32 32"><path d="M-5 4L4 -5" stroke="#e8e8e8" stroke-width="2.6"/><path d="M-5 4L4 -5" stroke="#505050" stroke-width=".8"/><path d="M2 -9.5H9.5V-3Z" fill="#e81020"/><path d="M-8.5 2V8.5H-2Z" fill="#6f9cf0"/><path d="M0.5 -6L6 -0.5M-6 0.5L-0.5 6" stroke="#e8e8e8" stroke-width="1"/></svg>
<svg style="position:absolute;left:1914px;top:209px" width="4" height="4" viewBox="0 0 4 4"><path d="M4 0V4H0Z" fill="#fff"/></svg>
<div style="position:absolute;left:1895px;top:216px;width:20px;height:1px;background:#2e2e2e;"></div>
<div style="position:absolute;left:1895px;top:217px;width:20px;height:1px;background:#777;"></div>
<svg style="position:absolute;left:1888.0px;top:216.0px" width="32" height="32" viewBox="-16.0 -16.0 32 32"><rect x="-10" y="-8" width="7.5" height="7.5" fill="none" stroke="#fff" stroke-width="1.4"/><rect x="1" y="2" width="8.5" height="7" fill="none" stroke="#e81020" stroke-width="1.6"/><path d="M-2.5 -7Q4.5 -6 6 1" fill="none" stroke="#38c838" stroke-width="1.3"/><path d="M3.5 -1L6 1.5L8 -1.5" fill="none" stroke="#38c838" stroke-width="1.2"/></svg>
<svg style="position:absolute;left:1914px;top:243px" width="4" height="4" viewBox="0 0 4 4"><path d="M4 0V4H0Z" fill="#fff"/></svg>
<svg style="position:absolute;left:1888.0px;top:245.0px" width="32" height="32" viewBox="-16.0 -16.0 32 32"><rect x="-6" y="-1" width="11" height="8" fill="none" stroke="#8c8c8c" stroke-width="1.1"/><rect x="-3.5" y="2" width="6" height="3" fill="none" stroke="#8c8c8c" stroke-width=".9"/><path d="M-0.5 -1V-5H3V-1M1.2 -8L-1.3 -5H3.7Z" fill="none" stroke="#8c8c8c" stroke-width="1"/></svg>
<svg style="position:absolute;left:1914px;top:270px" width="4" height="4" viewBox="0 0 4 4"><path d="M4 0V4H0Z" fill="#fff"/></svg>
<div style="position:absolute;left:1895px;top:277px;width:20px;height:1px;background:#2e2e2e;"></div>
<div style="position:absolute;left:1895px;top:278px;width:20px;height:1px;background:#777;"></div>
<svg style="position:absolute;left:1888.0px;top:278.5px" width="32" height="32" viewBox="-16.0 -16.0 32 32"><rect x="-9.5" y="-9" width="9" height="9" fill="#8c8c8c"/><rect x="-5" y="-5" width="9" height="9" fill="#9a9a9a"/><rect x="0" y="-0.5" width="9" height="9" fill="#a4a4a4"/></svg>
<svg style="position:absolute;left:1914px;top:304px" width="4" height="4" viewBox="0 0 4 4"><path d="M4 0V4H0Z" fill="#fff"/></svg>
<svg style="position:absolute;left:1888.0px;top:306.5px" width="32" height="32" viewBox="-16.0 -16.0 32 32"><path d="M-5 -4.5L-2 -2.5L-5 -0.5Z" fill="#8c8c8c"/><rect x="-0.5" y="0.5" width="3.5" height="3.5" fill="none" stroke="#8c8c8c" stroke-width="1"/></svg>
<svg style="position:absolute;left:1914px;top:332px" width="4" height="4" viewBox="0 0 4 4"><path d="M4 0V4H0Z" fill="#fff"/></svg>
<div style="position:absolute;left:1895px;top:340px;width:20px;height:1px;background:#2e2e2e;"></div>
<div style="position:absolute;left:1895px;top:341px;width:20px;height:1px;background:#777;"></div>
<svg style="position:absolute;left:1888.0px;top:341.0px" width="32" height="32" viewBox="-16.0 -16.0 32 32"><rect x="-9" y="-7" width="18" height="14" fill="#8c8c8c"/><rect x="-9" y="-7" width="18" height="3" fill="#a8a8a8"/><rect x="-3" y="-1" width="6" height="5" fill="#9a9a9a"/></svg>
<svg style="position:absolute;left:1914px;top:367px" width="4" height="4" viewBox="0 0 4 4"><path d="M4 0V4H0Z" fill="#fff"/></svg>
<svg style="position:absolute;left:1888.0px;top:368.5px" width="32" height="32" viewBox="-16.0 -16.0 32 32"><circle cx="2" cy="-1.5" r="6.5" fill="none" stroke="#e0e0e0" stroke-width="1.1"/><path d="M-7.5 0L-3.5 -4H5V3L1 7.5H-7.5Z" fill="none" stroke="#d8d0c0" stroke-width="1.1"/><rect x="-1" y="-3" width="5" height="5" fill="none" stroke="#4a80f0" stroke-width="1.3"/><path d="M0.5 -1.5H2.5V1" stroke="#4a80f0" stroke-width="1" fill="none"/></svg>
<svg style="position:absolute;left:1914px;top:394px" width="4" height="4" viewBox="0 0 4 4"><path d="M4 0V4H0Z" fill="#fff"/></svg>
<svg style="position:absolute;left:1888.0px;top:396.5px" width="32" height="32" viewBox="-16.0 -16.0 32 32"><circle cx="2" cy="-1.5" r="6.5" fill="none" stroke="#9cc0f8" stroke-width="1.1"/><path d="M-7.5 0L-3.5 -4H5V3L1 7.5H-7.5Z" fill="none" stroke="#9cc0f8" stroke-width="1.1"/><path d="M-3 -4H5V2.5Q3 6 -1 6Z" fill="#18c8d8"/></svg>
<svg style="position:absolute;left:1914px;top:422px" width="4" height="4" viewBox="0 0 4 4"><path d="M4 0V4H0Z" fill="#fff"/></svg>
<svg style="position:absolute;left:1888.0px;top:423.5px" width="32" height="32" viewBox="-16.0 -16.0 32 32"><g transform="rotate(40)"><rect x="-9" y="-8" width="9" height="5.5" fill="#f0e838"/><path d="M0 -8L4 -5.2L0 -2.5Z" fill="#fff"/><rect x="-9" y="-8" width="2.5" height="5.5" fill="#fff"/></g><path d="M-4.5 3.5V7.5M-6.5 5.5H-2.5M3.5 5V9M1.5 7H5.5M6.5 -1V3M4.5 1H8.5" stroke="#30c890" stroke-width="1.4"/></svg>
<svg style="position:absolute;left:1914px;top:450px" width="4" height="4" viewBox="0 0 4 4"><path d="M4 0V4H0Z" fill="#fff"/></svg>
<svg style="position:absolute;left:1888.0px;top:452.5px" width="32" height="32" viewBox="-16.0 -16.0 32 32"><rect x="-9" y="-8.5" width="17.5" height="17" fill="none" stroke="#6f9cf0" stroke-width="1.6" stroke-dasharray="3.4 1.6"/><rect x="-4" y="-4" width="8" height="8" fill="none" stroke="#fff" stroke-width="1.8"/></svg>
<svg style="position:absolute;left:1914px;top:479px" width="4" height="4" viewBox="0 0 4 4"><path d="M4 0V4H0Z" fill="#fff"/></svg>
<svg style="position:absolute;left:1888.0px;top:481.0px" width="32" height="32" viewBox="-16.0 -16.0 32 32"><path d="M-8.5 -1L-1 -8.5L8.5 -3V2.5L-1 8H-8.5Z" fill="#c0c0c8" stroke="#fff" stroke-width="1.1"/><path d="M-1 -8.5L8.5 -3L2 1.5L-3 -3Z" fill="#505058" stroke="#9cc0f8" stroke-width=".9"/><path d="M-8.5 -1L-3 -3L2 1.5V8" fill="none" stroke="#fff" stroke-width=".9"/></svg>
<svg style="position:absolute;left:1914px;top:507px" width="4" height="4" viewBox="0 0 4 4"><path d="M4 0V4H0Z" fill="#fff"/></svg>
<svg style="position:absolute;left:1888.0px;top:510.0px" width="32" height="32" viewBox="-16.0 -16.0 32 32"><path d="M-9 1H2L4.5 -1L6 2L2.5 5H-9Z" fill="none" stroke="#fff" stroke-width="1.4"/><path d="M4.5 -8Q10.5 -3 6 3.5" fill="none" stroke="#e01020" stroke-width="1.4"/><path d="M3 -7L6 -8.5L5.5 -5.5Z" fill="#e01020"/></svg>
<svg style="position:absolute;left:1914px;top:536px" width="4" height="4" viewBox="0 0 4 4"><path d="M4 0V4H0Z" fill="#fff"/></svg>
<svg style="position:absolute;left:1888.0px;top:537.0px" width="32" height="32" viewBox="-16.0 -16.0 32 32"><circle cx="-3.5" cy="3.5" r="4.8" fill="none" stroke="#8c8c8c" stroke-width="1"/><path d="M-3.5 -1.3V8.3M-7.7 1.2L0.7 5.8M-7.7 5.8L0.7 1.2" stroke="#8c8c8c" stroke-width=".8"/><path d="M-1 -6L3.5 -9L8 -6V-1H-1Z" fill="#8c8c8c"/><path d="M8 0.5V4H3.5M5.5 2L3.5 4L5.5 6" fill="none" stroke="#8c8c8c" stroke-width="1.1"/></svg>
<svg style="position:absolute;left:1914px;top:563px" width="4" height="4" viewBox="0 0 4 4"><path d="M4 0V4H0Z" fill="#fff"/></svg>
<svg style="position:absolute;left:1888.0px;top:565.0px" width="32" height="32" viewBox="-16.0 -16.0 32 32"><path d="M-7.5 -8.5H7.5L2.5 -3V6L0 9.5L-2.5 6V-3Z" fill="#c8d8f0" stroke="#fff" stroke-width="1.2"/><path d="M-2 -1.5L2 0M-2 1.5L2 3M-2 4.5L2 6" stroke="#4a80e0" stroke-width="1.1"/></svg>
<svg style="position:absolute;left:1914px;top:591px" width="4" height="4" viewBox="0 0 4 4"><path d="M4 0V4H0Z" fill="#fff"/></svg>
<svg style="position:absolute;left:1888.0px;top:593.0px" width="32" height="32" viewBox="-16.0 -16.0 32 32"><path d="M-3.5 -9H3.5V-3.5H9V3.5H3.5V9H-3.5V3.5H-9V-3.5H-3.5Z" fill="#8c8c8c"/></svg>
<svg style="position:absolute;left:1914px;top:619px" width="4" height="4" viewBox="0 0 4 4"><path d="M4 0V4H0Z" fill="#fff"/></svg>
<svg style="position:absolute;left:1888.0px;top:622.0px" width="32" height="32" viewBox="-16.0 -16.0 32 32"><path d="M-9 -5L-5.5 -8.5H9V5L5.5 8.5H-9Z" fill="#9a9a9a"/><path d="M-9 -5H5.5V8.5M5.5 -5L9 -8.5" fill="none" stroke="#a8a8a8" stroke-width=".8"/></svg>
<svg style="position:absolute;left:1914px;top:648px" width="4" height="4" viewBox="0 0 4 4"><path d="M4 0V4H0Z" fill="#fff"/></svg>
<div style="position:absolute;left:1895px;top:654px;width:20px;height:1px;background:#2e2e2e;"></div>
<div style="position:absolute;left:1895px;top:655px;width:20px;height:1px;background:#777;"></div>
<svg style="position:absolute;left:1888.0px;top:655.0px" width="32" height="32" viewBox="-16.0 -16.0 32 32"><circle r="7.2" fill="none" stroke="#c8e020" stroke-width="1.6"/><circle r="8.2" fill="none" stroke="#207828" stroke-width=".8"/><path d="M0 -1.2L-2.6 -5.5H2.6ZM0 1.2L-2.6 5.5H2.6ZM-1.2 0L-5.5 -2.6V2.6ZM1.2 0L5.5 -2.6V2.6Z" fill="#6f9cf0"/><path d="M0 -10V-7M0 7V10M-10 0H-7M7 0H10" stroke="#207828" stroke-width="1"/></svg>
<svg style="position:absolute;left:1914px;top:681px" width="4" height="4" viewBox="0 0 4 4"><path d="M4 0V4H0Z" fill="#fff"/></svg>
<svg style="position:absolute;left:1888.0px;top:682.0px" width="32" height="32" viewBox="-16.0 -16.0 32 32"><path d="M-4 6L5 -3" stroke="#c8c8c8" stroke-width="1.1"/><rect x="-6" y="4.5" width="3.5" height="3.5" fill="#404858" stroke="#7aa8f0" stroke-width="1"/><rect x="3.5" y="-5" width="3.5" height="3.5" fill="#404858" stroke="#7aa8f0" stroke-width="1"/><rect x="-9" y="-7" width="8" height="3.6" rx="1.2" fill="none" stroke="#fff" stroke-width="1"/><path d="M-6.5 -7V-3.5M-3.5 -7V-3.5M-5 -8.5V-7" stroke="#fff" stroke-width=".9"/></svg>
<svg style="position:absolute;left:1914px;top:709px" width="4" height="4" viewBox="0 0 4 4"><path d="M4 0V4H0Z" fill="#fff"/></svg>
<div style="position:absolute;left:1895px;top:716px;width:20px;height:1px;background:#2e2e2e;"></div>
<div style="position:absolute;left:1895px;top:717px;width:20px;height:1px;background:#777;"></div>
<svg style="position:absolute;left:1888.0px;top:717.5px" width="32" height="32" viewBox="-16.0 -16.0 32 32"><path d="M-8 -4.5H-2.5L-8 4.5ZM-8 4.5L-2.5 -4.5L-2.5 4.5ZM-2.5 4.5L3 -4.5H8L3 4.5ZM3 4.5H8V-4.5" fill="none" stroke="#8c8c8c" stroke-width="1"/></svg>
<svg style="position:absolute;left:1888.0px;top:745.0px" width="32" height="32" viewBox="-16.0 -16.0 32 32"><rect x="-8" y="-8" width="9.5" height="9.5" fill="none" stroke="#a0a0a0" stroke-width="1"/><rect x="-3" y="-3" width="10.5" height="10.5" fill="#505050" stroke="#a0a0a0" stroke-width="1.1"/><rect x="-9.5" y="-9.5" width="3" height="3" fill="#a0a0a0"/><rect x="0.0" y="-9.5" width="3" height="3" fill="#a0a0a0"/><rect x="-9.5" y="0.0" width="3" height="3" fill="#a0a0a0"/><rect x="-4.5" y="-4.5" width="3" height="3" fill="#a0a0a0"/><rect x="6.0" y="-4.5" width="3" height="3" fill="#a0a0a0"/><rect x="-4.5" y="6.0" width="3" height="3" fill="#a0a0a0"/><rect x="6.0" y="6.0" width="3" height="3" fill="#a0a0a0"/></svg>
<div style="position:absolute;left:34px;top:955px;width:166px;height:18px;background:#4a4a4a;"></div>
<div style="position:absolute;left:199px;top:955px;width:3px;height:18px;background:#e8e8e8;"></div>
<div style="position:absolute;left:37px;top:955px;width:65px;height:18px;background:#585858;border-radius:0 0 4px 4px;border-bottom:1px solid #222;border-right:1px solid #222;"></div>
<svg style="position:absolute;left:40.0px;top:955.5px" width="16" height="16" viewBox="-8.0 -8.0 16 16"><rect x="-5" y="-5" width="7" height="6" fill="#333" stroke="#fff" stroke-width="1.2"/><circle cx="2" cy="1.5" r="3.8" fill="#e8e8e8" stroke="#222" stroke-width=".8"/><circle cx="-2.5" cy="1" r="2.2" fill="#222" stroke="#fff" stroke-width=".8"/></svg>
<div style="position:absolute;left:58px;top:957.34px;font-size:12px;line-height:1;color:#fff;white-space:pre;letter-spacing:0.163px;">Model</div>
<div style="position:absolute;left:103px;top:956px;width:69px;height:16px;background:#4e4e4e;border-radius:0 0 4px 4px;border-right:1px solid #5a5a5a;"></div>
<svg style="position:absolute;left:106.0px;top:955.5px" width="16" height="16" viewBox="-8.0 -8.0 16 16"><path d="M-4.5 -6H1.5L4.5 -3V6H-4.5Z" fill="#fff" stroke="#111" stroke-width=".8"/><path d="M1.5 -6V-3H4.5" fill="none" stroke="#111" stroke-width=".8"/><path d="M-1.5 0L0 -1V4.5" fill="none" stroke="#1020a0" stroke-width="1.3"/></svg>
<div style="position:absolute;left:124.5px;top:956px;width:46px;height:14.5px;overflow:hidden"><div style="position:absolute;left:0;top:1.3px;font-size:12px;line-height:1;color:#a4a4a4;white-space:pre;letter-spacing:-0.2px">Paper 1</div></div>
<svg style="position:absolute;left:208px;top:960px" width="6" height="8" viewBox="0 0 6 8"><path d="M6 0V8L0 4Z" fill="#fff"/></svg>
<svg style="position:absolute;left:1830px;top:960px" width="6" height="8" viewBox="0 0 6 8"><path d="M0 0V8L6 4Z" fill="#fff"/></svg>
<svg style="position:absolute;left:1847px;top:944px" width="8" height="5" viewBox="0 0 8 5"><path d="M0 0H8L4 5Z" fill="#fff"/></svg>
<div style="position:absolute;left:7px;top:981px;width:1px;height:1px;background:#9a9a9a;"></div>
<div style="position:absolute;left:7px;top:984px;width:1px;height:1px;background:#9a9a9a;"></div>
<div style="position:absolute;left:7px;top:987px;width:1px;height:1px;background:#9a9a9a;"></div>
<div style="position:absolute;left:7px;top:990px;width:1px;height:1px;background:#9a9a9a;"></div>
<div style="position:absolute;left:7px;top:993px;width:1px;height:1px;background:#9a9a9a;"></div>
<div style="position:absolute;left:7px;top:996px;width:1px;height:1px;background:#9a9a9a;"></div>
<div style="position:absolute;left:7px;top:999px;width:1px;height:1px;background:#9a9a9a;"></div>
<div style="position:absolute;left:7px;top:1002px;width:1px;height:1px;background:#9a9a9a;"></div>
<div style="position:absolute;left:7px;top:1005px;width:1px;height:1px;background:#9a9a9a;"></div>
<div style="position:absolute;left:7px;top:1008px;width:1px;height:1px;background:#9a9a9a;"></div>
<div style="position:absolute;left:7px;top:1011px;width:1px;height:1px;background:#9a9a9a;"></div>
<svg style="position:absolute;left:9.0px;top:978.0px" width="32" height="32" viewBox="-16.0 -16.0 32 32"><path d="M-8 -5Q-9.5 5 -3 7.5L4 7" fill="none" stroke="#e83818" stroke-width="2"/><circle cx="-7.5" cy="0" r="1" fill="#ffb0a0"/><circle cx="-3" cy="7.5" r="1" fill="#ffb0a0"/><path d="M-5 -6L6 5" stroke="#e8e8b0" stroke-width="1.6"/><path d="M-5 -6L-2 -3" stroke="#e0e020" stroke-width="1.8"/><path d="M1 -8L2 -6.5L3.5 -6L2 -5L1 -3.5L0 -5L-1.5 -6L0 -6.5ZM6 -8.5L6.8 -7.2L8 -6.8L6.8 -6L6 -4.8L5.2 -6L4 -6.8L5.2 -7.2ZM7.5 -3L8.5 -1.5L10 -1L8.5 0L7.5 1.5L6.5 0L5 -1L6.5 -1.5Z" fill="#fff"/></svg>
<svg style="position:absolute;left:36.0px;top:978.0px" width="32" height="32" viewBox="-16.0 -16.0 32 32"><path d="M-7 -7L7 7M7 -7L-7 7" stroke="#9a9a9a" stroke-width="2.2"/></svg>
<svg style="position:absolute;left:64.0px;top:978.0px" width="32" height="32" viewBox="-16.0 -16.0 32 32"><rect x="-9.5" y="-8.5" width="19" height="17" fill="none" stroke="#9a9a9a" stroke-width="1.2"/><path d="M-9.5 -5H9.5" stroke="#9a9a9a" stroke-width="1.4"/><path d="M-7.5 -2.5H-3M-1.5 -2.5H3M4.5 -2.5H8M-7.5 0.5H-3M-1.5 0.5H3M4.5 0.5H8M-7.5 3.5H-3M-1.5 3.5H3M4.5 3.5H8M-7.5 6.5H-3M-1.5 6.5H3M4.5 6.5H8" stroke="#9a9a9a" stroke-width="1.5"/></svg>
<div style="position:absolute;left:97px;top:981px;width:1px;height:27px;background:#3a3a3a;"></div>
<div style="position:absolute;left:98px;top:981px;width:1px;height:27px;background:#7a7a7a;"></div>
<div style="position:absolute;left:102px;top:978.14px;font-size:12px;line-height:1;color:#fff;white-space:pre;letter-spacing:-0.295px;">Scale X</div>
<div style="position:absolute;left:103px;top:991px;width:67px;height:21px;background:#575757;border:1px solid #8a8a8a;"></div>
<div style="position:absolute;left:108px;top:995.84px;font-size:12px;line-height:1;color:#707070;white-space:pre;">1</div>
<div style="position:absolute;left:153px;top:992px;width:16px;height:9px;background:#585858;border:1px solid #111;"></div>
<div style="position:absolute;left:153px;top:1002px;width:16px;height:9px;background:#585858;border:1px solid #111;"></div>
<svg style="position:absolute;left:159px;top:995px" width="4" height="3" viewBox="0 0 4 3"><path d="M0 3H4L2 0Z" fill="#111"/></svg>
<svg style="position:absolute;left:159px;top:1005px" width="4" height="3" viewBox="0 0 4 3"><path d="M0 0H4L2 3Z" fill="#111"/></svg>
<div style="position:absolute;left:173px;top:978.14px;font-size:12px;line-height:1;color:#fff;white-space:pre;letter-spacing:-0.294px;">Scale Y</div>
<div style="position:absolute;left:174px;top:991px;width:67px;height:21px;background:#575757;border:1px solid #8a8a8a;"></div>
<div style="position:absolute;left:179px;top:995.84px;font-size:12px;line-height:1;color:#707070;white-space:pre;">1</div>
<div style="position:absolute;left:224px;top:992px;width:16px;height:9px;background:#585858;border:1px solid #111;"></div>
<div style="position:absolute;left:224px;top:1002px;width:16px;height:9px;background:#585858;border:1px solid #111;"></div>
<svg style="position:absolute;left:230px;top:995px" width="4" height="3" viewBox="0 0 4 3"><path d="M0 3H4L2 0Z" fill="#111"/></svg>
<svg style="position:absolute;left:230px;top:1005px" width="4" height="3" viewBox="0 0 4 3"><path d="M0 0H4L2 3Z" fill="#111"/></svg>
<div style="position:absolute;left:244px;top:978.14px;font-size:12px;line-height:1;color:#fff;white-space:pre;letter-spacing:-0.291px;">Scale Z</div>
<div style="position:absolute;left:245px;top:991px;width:67px;height:21px;background:#575757;border:1px solid #8a8a8a;"></div>
<div style="position:absolute;left:250px;top:995.84px;font-size:12px;line-height:1;color:#707070;white-space:pre;">1</div>
<div style="position:absolute;left:295px;top:992px;width:16px;height:9px;background:#585858;border:1px solid #111;"></div>
<div style="position:absolute;left:295px;top:1002px;width:16px;height:9px;background:#585858;border:1px solid #111;"></div>
<svg style="position:absolute;left:301px;top:995px" width="4" height="3" viewBox="0 0 4 3"><path d="M0 3H4L2 0Z" fill="#111"/></svg>
<svg style="position:absolute;left:301px;top:1005px" width="4" height="3" viewBox="0 0 4 3"><path d="M0 0H4L2 3Z" fill="#111"/></svg>
<div style="position:absolute;left:315px;top:978.14px;font-size:12px;line-height:1;color:#fff;white-space:pre;letter-spacing:-0.289px;">Size X</div>
<div style="position:absolute;left:316px;top:991px;width:67px;height:21px;background:#575757;border:1px solid #8a8a8a;"></div>
<div style="position:absolute;left:321px;top:995.84px;font-size:12px;line-height:1;color:#707070;white-space:pre;">0&quot;</div>
<div style="position:absolute;left:366px;top:992px;width:16px;height:9px;background:#585858;border:1px solid #111;"></div>
<div style="position:absolute;left:366px;top:1002px;width:16px;height:9px;background:#585858;border:1px solid #111;"></div>
<svg style="position:absolute;left:372px;top:995px" width="4" height="3" viewBox="0 0 4 3"><path d="M0 3H4L2 0Z" fill="#111"/></svg>
<svg style="position:absolute;left:372px;top:1005px" width="4" height="3" viewBox="0 0 4 3"><path d="M0 0H4L2 3Z" fill="#111"/></svg>
<div style="position:absolute;left:386px;top:978.14px;font-size:12px;line-height:1;color:#fff;white-space:pre;letter-spacing:-0.287px;">Size Y</div>
<div style="position:absolute;left:387px;top:991px;width:67px;height:21px;background:#575757;border:1px solid #8a8a8a;"></div>
<div style="position:absolute;left:392px;top:995.84px;font-size:12px;line-height:1;color:#707070;white-space:pre;">0&quot;</div>
<div style="position:absolute;left:437px;top:992px;width:16px;height:9px;background:#585858;border:1px solid #111;"></div>
<div style="position:absolute;left:437px;top:1002px;width:16px;height:9px;background:#585858;border:1px solid #111;"></div>
<svg style="position:absolute;left:443px;top:995px" width="4" height="3" viewBox="0 0 4 3"><path d="M0 3H4L2 0Z" fill="#111"/></svg>
<svg style="position:absolute;left:443px;top:1005px" width="4" height="3" viewBox="0 0 4 3"><path d="M0 0H4L2 3Z" fill="#111"/></svg>
<div style="position:absolute;left:457px;top:978.14px;font-size:12px;line-height:1;color:#fff;white-space:pre;letter-spacing:-0.283px;">Size Z</div>
<div style="position:absolute;left:458px;top:991px;width:67px;height:21px;background:#575757;border:1px solid #8a8a8a;"></div>
<div style="position:absolute;left:463px;top:995.84px;font-size:12px;line-height:1;color:#707070;white-space:pre;">0&quot;</div>
<div style="position:absolute;left:508px;top:992px;width:16px;height:9px;background:#585858;border:1px solid #111;"></div>
<div style="position:absolute;left:508px;top:1002px;width:16px;height:9px;background:#585858;border:1px solid #111;"></div>
<svg style="position:absolute;left:514px;top:995px" width="4" height="3" viewBox="0 0 4 3"><path d="M0 3H4L2 0Z" fill="#111"/></svg>
<svg style="position:absolute;left:514px;top:1005px" width="4" height="3" viewBox="0 0 4 3"><path d="M0 0H4L2 3Z" fill="#111"/></svg>
<div style="position:absolute;left:528px;top:978.14px;font-size:12px;line-height:1;color:#fff;white-space:pre;letter-spacing:-0.320px;">Pos X</div>
<div style="position:absolute;left:529px;top:991px;width:67px;height:21px;background:#575757;border:1px solid #8a8a8a;"></div>
<div style="position:absolute;left:534px;top:995.84px;font-size:12px;line-height:1;color:#707070;white-space:pre;">0&quot;</div>
<div style="position:absolute;left:579px;top:992px;width:16px;height:9px;background:#585858;border:1px solid #111;"></div>
<div style="position:absolute;left:579px;top:1002px;width:16px;height:9px;background:#585858;border:1px solid #111;"></div>
<svg style="position:absolute;left:585px;top:995px" width="4" height="3" viewBox="0 0 4 3"><path d="M0 3H4L2 0Z" fill="#111"/></svg>
<svg style="position:absolute;left:585px;top:1005px" width="4" height="3" viewBox="0 0 4 3"><path d="M0 0H4L2 3Z" fill="#111"/></svg>
<div style="position:absolute;left:599px;top:978.14px;font-size:12px;line-height:1;color:#fff;white-space:pre;letter-spacing:-0.318px;">Pos Y</div>
<div style="position:absolute;left:600px;top:991px;width:67px;height:21px;background:#575757;border:1px solid #8a8a8a;"></div>
<div style="position:absolute;left:605px;top:995.84px;font-size:12px;line-height:1;color:#707070;white-space:pre;">0&quot;</div>
<div style="position:absolute;left:650px;top:992px;width:16px;height:9px;background:#585858;border:1px solid #111;"></div>
<div style="position:absolute;left:650px;top:1002px;width:16px;height:9px;background:#585858;border:1px solid #111;"></div>
<svg style="position:absolute;left:656px;top:995px" width="4" height="3" viewBox="0 0 4 3"><path d="M0 3H4L2 0Z" fill="#111"/></svg>
<svg style="position:absolute;left:656px;top:1005px" width="4" height="3" viewBox="0 0 4 3"><path d="M0 0H4L2 3Z" fill="#111"/></svg>
<div style="position:absolute;left:670px;top:978.14px;font-size:12px;line-height:1;color:#fff;white-space:pre;letter-spacing:-0.313px;">Pos Z</div>
<div style="position:absolute;left:671px;top:991px;width:67px;height:21px;background:#575757;border:1px solid #8a8a8a;"></div>
<div style="position:absolute;left:676px;top:995.84px;font-size:12px;line-height:1;color:#707070;white-space:pre;">0&quot;</div>
<div style="position:absolute;left:721px;top:992px;width:16px;height:9px;background:#585858;border:1px solid #111;"></div>
<div style="position:absolute;left:721px;top:1002px;width:16px;height:9px;background:#585858;border:1px solid #111;"></div>
<svg style="position:absolute;left:727px;top:995px" width="4" height="3" viewBox="0 0 4 3"><path d="M0 3H4L2 0Z" fill="#111"/></svg>
<svg style="position:absolute;left:727px;top:1005px" width="4" height="3" viewBox="0 0 4 3"><path d="M0 0H4L2 3Z" fill="#111"/></svg>
<div style="position:absolute;left:741px;top:978.14px;font-size:12px;line-height:1;color:#fff;white-space:pre;letter-spacing:-0.281px;">Delta X</div>
<div style="position:absolute;left:742px;top:991px;width:67px;height:21px;background:#575757;border:1px solid #8a8a8a;"></div>
<div style="position:absolute;left:747px;top:995.84px;font-size:12px;line-height:1;color:#707070;white-space:pre;">0&quot;</div>
<div style="position:absolute;left:792px;top:992px;width:16px;height:9px;background:#585858;border:1px solid #111;"></div>
<div style="position:absolute;left:792px;top:1002px;width:16px;height:9px;background:#585858;border:1px solid #111;"></div>
<svg style="position:absolute;left:798px;top:995px" width="4" height="3" viewBox="0 0 4 3"><path d="M0 3H4L2 0Z" fill="#111"/></svg>
<svg style="position:absolute;left:798px;top:1005px" width="4" height="3" viewBox="0 0 4 3"><path d="M0 0H4L2 3Z" fill="#111"/></svg>
<div style="position:absolute;left:812px;top:978.14px;font-size:12px;line-height:1;color:#fff;white-space:pre;letter-spacing:-0.279px;">Delta Y</div>
<div style="position:absolute;left:813px;top:991px;width:67px;height:21px;background:#575757;border:1px solid #8a8a8a;"></div>
<div style="position:absolute;left:818px;top:995.84px;font-size:12px;line-height:1;color:#707070;white-space:pre;">0&quot;</div>
<div style="position:absolute;left:863px;top:992px;width:16px;height:9px;background:#585858;border:1px solid #111;"></div>
<div style="position:absolute;left:863px;top:1002px;width:16px;height:9px;background:#585858;border:1px solid #111;"></div>
<svg style="position:absolute;left:869px;top:995px" width="4" height="3" viewBox="0 0 4 3"><path d="M0 3H4L2 0Z" fill="#111"/></svg>
<svg style="position:absolute;left:869px;top:1005px" width="4" height="3" viewBox="0 0 4 3"><path d="M0 0H4L2 3Z" fill="#111"/></svg>
<div style="position:absolute;left:883px;top:978.14px;font-size:12px;line-height:1;color:#fff;white-space:pre;letter-spacing:-0.276px;">Delta Z</div>
<div style="position:absolute;left:884px;top:991px;width:67px;height:21px;background:#575757;border:1px solid #8a8a8a;"></div>
<div style="position:absolute;left:889px;top:995.84px;font-size:12px;line-height:1;color:#707070;white-space:pre;">0&quot;</div>
<div style="position:absolute;left:934px;top:992px;width:16px;height:9px;background:#585858;border:1px solid #111;"></div>
<div style="position:absolute;left:934px;top:1002px;width:16px;height:9px;background:#585858;border:1px solid #111;"></div>
<svg style="position:absolute;left:940px;top:995px" width="4" height="3" viewBox="0 0 4 3"><path d="M0 3H4L2 0Z" fill="#111"/></svg>
<svg style="position:absolute;left:940px;top:1005px" width="4" height="3" viewBox="0 0 4 3"><path d="M0 0H4L2 3Z" fill="#111"/></svg>
<div style="position:absolute;left:954px;top:978.14px;font-size:12px;line-height:1;color:#fff;white-space:pre;letter-spacing:-0.300px;">Rot X</div>
<div style="position:absolute;left:955px;top:991px;width:67px;height:21px;background:#575757;border:1px solid #8a8a8a;"></div>
<div style="position:absolute;left:960px;top:995.84px;font-size:12px;line-height:1;color:#707070;white-space:pre;">0</div>
<div style="position:absolute;left:1005px;top:992px;width:16px;height:9px;background:#585858;border:1px solid #111;"></div>
<div style="position:absolute;left:1005px;top:1002px;width:16px;height:9px;background:#585858;border:1px solid #111;"></div>
<svg style="position:absolute;left:1011px;top:995px" width="4" height="3" viewBox="0 0 4 3"><path d="M0 3H4L2 0Z" fill="#111"/></svg>
<svg style="position:absolute;left:1011px;top:1005px" width="4" height="3" viewBox="0 0 4 3"><path d="M0 0H4L2 3Z" fill="#111"/></svg>
<div style="position:absolute;left:1025px;top:978.14px;font-size:12px;line-height:1;color:#fff;white-space:pre;letter-spacing:-0.298px;">Rot Y</div>
<div style="position:absolute;left:1026px;top:991px;width:67px;height:21px;background:#575757;border:1px solid #8a8a8a;"></div>
<div style="position:absolute;left:1031px;top:995.84px;font-size:12px;line-height:1;color:#707070;white-space:pre;">0</div>
<div style="position:absolute;left:1076px;top:992px;width:16px;height:9px;background:#585858;border:1px solid #111;"></div>
<div style="position:absolute;left:1076px;top:1002px;width:16px;height:9px;background:#585858;border:1px solid #111;"></div>
<svg style="position:absolute;left:1082px;top:995px" width="4" height="3" viewBox="0 0 4 3"><path d="M0 3H4L2 0Z" fill="#111"/></svg>
<svg style="position:absolute;left:1082px;top:1005px" width="4" height="3" viewBox="0 0 4 3"><path d="M0 0H4L2 3Z" fill="#111"/></svg>
<div style="position:absolute;left:1096px;top:978.14px;font-size:12px;line-height:1;color:#fff;white-space:pre;letter-spacing:-0.293px;">Rot Z</div>
<div style="position:absolute;left:1097px;top:991px;width:67px;height:21px;background:#575757;border:1px solid #8a8a8a;"></div>
<div style="position:absolute;left:1102px;top:995.84px;font-size:12px;line-height:1;color:#707070;white-space:pre;">0</div>
<div style="position:absolute;left:1147px;top:992px;width:16px;height:9px;background:#585858;border:1px solid #111;"></div>
<div style="position:absolute;left:1147px;top:1002px;width:16px;height:9px;background:#585858;border:1px solid #111;"></div>
<svg style="position:absolute;left:1153px;top:995px" width="4" height="3" viewBox="0 0 4 3"><path d="M0 3H4L2 0Z" fill="#111"/></svg>
<svg style="position:absolute;left:1153px;top:1005px" width="4" height="3" viewBox="0 0 4 3"><path d="M0 0H4L2 3Z" fill="#111"/></svg>
<div style="position:absolute;left:1167px;top:975px;width:67px;height:16px;overflow:hidden"><div style="position:absolute;left:0;top:3.1px;font-size:12px;line-height:1;color:#fff;white-space:pre;letter-spacing:-0.25px">Delta Distance</div></div>
<div style="position:absolute;left:1168px;top:991px;width:67px;height:21px;background:#575757;border:1px solid #8a8a8a;"></div>
<div style="position:absolute;left:1173px;top:995.84px;font-size:12px;line-height:1;color:#707070;white-space:pre;">0&quot;</div>
<div style="position:absolute;left:1218px;top:992px;width:16px;height:9px;background:#585858;border:1px solid #111;"></div>
<div style="position:absolute;left:1218px;top:1002px;width:16px;height:9px;background:#585858;border:1px solid #111;"></div>
<svg style="position:absolute;left:1224px;top:995px" width="4" height="3" viewBox="0 0 4 3"><path d="M0 3H4L2 0Z" fill="#111"/></svg>
<svg style="position:absolute;left:1224px;top:1005px" width="4" height="3" viewBox="0 0 4 3"><path d="M0 0H4L2 3Z" fill="#111"/></svg>
<div style="position:absolute;left:1238px;top:978.14px;font-size:12px;line-height:1;color:#fff;white-space:pre;letter-spacing:-0.279px;">Delta Angle</div>
<div style="position:absolute;left:1239px;top:991px;width:67px;height:21px;background:#575757;border:1px solid #8a8a8a;"></div>
<div style="position:absolute;left:1244px;top:995.84px;font-size:12px;line-height:1;color:#707070;white-space:pre;">0</div>
<div style="position:absolute;left:1289px;top:992px;width:16px;height:9px;background:#585858;border:1px solid #111;"></div>
<div style="position:absolute;left:1289px;top:1002px;width:16px;height:9px;background:#585858;border:1px solid #111;"></div>
<svg style="position:absolute;left:1295px;top:995px" width="4" height="3" viewBox="0 0 4 3"><path d="M0 3H4L2 0Z" fill="#111"/></svg>
<svg style="position:absolute;left:1295px;top:1005px" width="4" height="3" viewBox="0 0 4 3"><path d="M0 0H4L2 3Z" fill="#111"/></svg>
<div style="position:absolute;left:1310px;top:981px;width:1px;height:27px;background:#3a3a3a;"></div>
<div style="position:absolute;left:1311px;top:981px;width:1px;height:27px;background:#7a7a7a;"></div>
<svg style="position:absolute;left:1310.5px;top:978.5px" width="32" height="32" viewBox="-16.0 -16.0 32 32"><path d="M-8.5 0H-1V8H-8.5Z" fill="none" stroke="#fff" stroke-width="1.2"/><path d="M-8.5 0L-5.5 -3H2L-1 0M2 -3V5L-1 8" fill="none" stroke="#fff" stroke-width="1.2"/><path d="M-5 -3Q-3 -8 1.5 -8H9V-2.5H4Q2.5 -2.5 2 -1" fill="none" stroke="#fff" stroke-width="1.3"/><path d="M-2 -5.5L1 -3.5M0 -7L3 -4" stroke="#ddd" stroke-width=".8"/></svg>
<svg style="position:absolute;left:1339.0px;top:978.5px" width="32" height="32" viewBox="-16.0 -16.0 32 32"><rect x="-8.5" y="-8" width="6" height="6" fill="none" stroke="#fff" stroke-width="1.2"/><path d="M5 -8L-7 8" stroke="#fff" stroke-width="1.2"/><path d="M0 1H6V8H0Z" fill="none" stroke="#fff" stroke-width="1.1"/><path d="M0 1L2.5 -1.5H8.5L6 1M8.5 -1.5V5.5L6 8" fill="none" stroke="#fff" stroke-width="1.1"/></svg>
<svg style="position:absolute;left:1367.0px;top:978.5px" width="32" height="32" viewBox="-16.0 -16.0 32 32"><path d="M-8 5Q-7 -1 -2 -1.5Q3 -2 4.5 -8" fill="none" stroke="#fff" stroke-width="1.3"/><path d="M-4 -0.5Q0 -3 3 -3" fill="none" stroke="#7aa8f0" stroke-width="2.2"/><path d="M1 -1V6.5L3 5L4.5 8L6 7.3L4.5 4.3H7Z" fill="#fff"/></svg>
<div style="position:absolute;left:1400px;top:981px;width:1px;height:27px;background:#3a3a3a;"></div>
<div style="position:absolute;left:1401px;top:981px;width:1px;height:27px;background:#7a7a7a;"></div>
<div style="position:absolute;left:1404px;top:981px;width:26px;height:26px;background:#5d83bf;"></div>
<svg style="position:absolute;left:1401.0px;top:978.5px" width="32" height="32" viewBox="-16.0 -16.0 32 32"><rect x="-8" y="-7.5" width="16" height="15" fill="#108080" stroke="#fff" stroke-width="1.3"/><path d="M-7.3 -6.8H7.3V6.8Z" fill="#18e828"/><path d="M-7 -6.5H7V6.5" fill="none" stroke="#103810" stroke-width=".8" stroke-dasharray="1 1"/></svg>
<svg style="position:absolute;left:1429.0px;top:978.5px" width="32" height="32" viewBox="-16.0 -16.0 32 32"><path d="M-8 -7.5V7.5H8Z" fill="#108080" stroke="#fff" stroke-width="1.3"/><rect x="0" y="-9" width="9" height="6.5" rx="1.5" fill="#fff"/><path d="M1.5 -3.5V-8L3 -5.5L4.5 -8V-3.5M6 -3.5V-8H7.5Q8.5 -7 7.5 -6H6" fill="none" stroke="#222" stroke-width=".8"/></svg>
<svg style="position:absolute;left:1457.0px;top:978.5px" width="32" height="32" viewBox="-16.0 -16.0 32 32"><path d="M-7.5 -7V7.5H7.5Z" fill="#18e828" stroke="#fff" stroke-width="1.3" stroke-dasharray="1.6 1"/><path d="M-7.5 -7L7.5 7.5" stroke="#fff" stroke-width="1.5"/><rect x="1" y="-8.5" width="8" height="6" rx="2.5" fill="#fff"/><path d="M4.5 -7.3Q2.5 -7.3 2.5 -5.5Q2.5 -3.8 4.5 -3.8M6 -3.8V-7.3H7Q8 -6.3 7 -5.4H6" fill="none" stroke="#222" stroke-width=".8"/></svg>
<svg style="position:absolute;left:1485.0px;top:978.5px" width="32" height="32" viewBox="-16.0 -16.0 32 32"><path d="M-8 -6H4V1H-1V5H7V8H-4V1H-8Z" fill="#18c828" stroke="#fff" stroke-width="1.1" stroke-dasharray="1.6 .8"/><path d="M-6 -4H2V-1H-6Z" fill="#106818"/><path d="M2 -1L6.5 4" stroke="#106818" stroke-width="2"/><rect x="4.5" y="-9" width="4.5" height="6.5" rx="1.5" fill="#fff"/><path d="M6 -4V-7.7H8M6 -5.8H7.5" stroke="#222" stroke-width=".8" fill="none"/></svg>
<div style="position:absolute;left:1518px;top:981px;width:1px;height:27px;background:#3a3a3a;"></div>
<div style="position:absolute;left:1519px;top:981px;width:1px;height:27px;background:#7a7a7a;"></div>
<svg style="position:absolute;left:1519.0px;top:978.5px" width="32" height="32" viewBox="-16.0 -16.0 32 32"><path d="M-7 -4.5H-0.5Q5 -5 5 0" fill="none" stroke="#28d838" stroke-width="2.6"/><path d="M-9.5 -4.5L-4.5 -9V0Z" fill="#28d838"/><path d="M0 -2V7L2.2 5.2L3.8 8.5L5.4 7.7L3.8 4.5H7Z" fill="#fff"/></svg>
<svg style="position:absolute;left:1546.5px;top:978.5px" width="32" height="32" viewBox="-16.0 -16.0 32 32"><path d="M-7 -7L-1 -4L-4 -1ZM-7 -7L0 0" fill="#e81020" stroke="#e81020" stroke-width="1"/><path d="M2 6.5L7 0.5V6.5Z" fill="#8ab0f0"/><path d="M0 0L4 4" stroke="#8ab0f0" stroke-width="1"/><path d="M-8.5 -8.5L-6.5 -6.5M-6.5 -8.5L-8.5 -6.5M-1 -8.5L1 -6.5M1 -8.5L-1 -6.5M4 -3L6 -1M6 -3L4 -1M-1 5L1 7M1 5L-1 7M6.5 6L8.5 8M8.5 6L6.5 8M-1.5 -1.5L0.5 0.5" stroke="#d8d070" stroke-width=".9"/></svg>
<svg style="position:absolute;left:1575.0px;top:978.5px" width="32" height="32" viewBox="-16.0 -16.0 32 32"><path d="M-2.5 -7L2.5 3.5H-7.5Z" fill="none" stroke="#fff" stroke-width="1.5"/><path d="M3.5 -2L8.5 8H-1.5Z" fill="none" stroke="#e01020" stroke-width="1.8"/></svg>
<svg style="position:absolute;left:1603.0px;top:978.5px" width="32" height="32" viewBox="-16.0 -16.0 32 32"><rect x="-4" y="-8" width="8" height="5" fill="none" stroke="#8c8c8c" stroke-width="1.1"/><path d="M-2 -3V0H2V-3M-5 -1H-7L-8.5 3V7.5H8.5V3L7 -1H5M-8.5 3H-4L-2 5H2L4 3H8.5" fill="none" stroke="#8c8c8c" stroke-width="1.1"/><path d="M0 0.5V3.5M-1.5 2L0 3.8L1.5 2" fill="none" stroke="#8c8c8c" stroke-width=".9"/></svg>
<svg style="position:absolute;left:1630.5px;top:978.5px" width="32" height="32" viewBox="-16.0 -16.0 32 32"><rect x="-7.5" y="-7.5" width="15" height="15" fill="none" stroke="#fff" stroke-width="1.4"/><rect x="-3" y="-1" width="6" height="6" fill="#505050" stroke="#fff" stroke-width="1.2"/><path d="M-7 7L7.5 -7.5" stroke="#e01020" stroke-width="2"/><rect x="-9.2" y="-9.2" width="3.4" height="3.4" rx="1" fill="#c0c0c0"/><rect x="5.8" y="-9.2" width="3.4" height="3.4" rx="1" fill="#c0c0c0"/><rect x="5.8" y="5.8" width="3.4" height="3.4" rx="1" fill="#c0c0c0"/><rect x="-9.2" y="-1.7" width="3.4" height="3.4" rx="1" fill="#7aa8f0"/><rect x="-9.2" y="5.8" width="3.4" height="3.4" rx="1" fill="#7aa8f0"/><rect x="-1.7" y="5.8" width="3.4" height="3.4" rx="1" fill="#7aa8f0"/></svg>
<svg style="position:absolute;left:1659.0px;top:978.5px" width="32" height="32" viewBox="-16.0 -16.0 32 32"><rect x="-7.5" y="-7.5" width="15" height="15" fill="none" stroke="#8c8c8c" stroke-width="1.3"/><path d="M0 -5V5M-5 0H5M-1.8 -3L0 -5L1.8 -3M-1.8 3L0 5L1.8 3M-3 -1.8L-5 0L-3 1.8M3 -1.8L5 0L3 1.8" fill="none" stroke="#8c8c8c" stroke-width="1.2"/><circle r="1.8" fill="#8c8c8c"/><rect x="-9.2" y="-9.2" width="3.4" height="3.4" rx="1" fill="#8c8c8c"/><rect x="-9.2" y="5.8" width="3.4" height="3.4" rx="1" fill="#8c8c8c"/><rect x="5.8" y="-9.2" width="3.4" height="3.4" rx="1" fill="#8c8c8c"/><rect x="5.8" y="5.8" width="3.4" height="3.4" rx="1" fill="#8c8c8c"/></svg>
<svg style="position:absolute;left:1686.5px;top:978.5px" width="32" height="32" viewBox="-16.0 -16.0 32 32"><rect x="-7" y="-3.5" width="9.5" height="10.5" fill="none" stroke="#8c8c8c" stroke-width="1.2"/><circle cx="-2.2" cy="2" r="2" fill="#8c8c8c"/><path d="M-2 -3.5Q-1 -7.5 6 -7" fill="none" stroke="#8c8c8c" stroke-width="1.1"/><rect x="-8.5" y="-5.0" width="3" height="3" fill="#8c8c8c"/><rect x="1.0" y="-5.0" width="3" height="3" fill="#8c8c8c"/><rect x="-8.5" y="5.5" width="3" height="3" fill="#8c8c8c"/><rect x="1.0" y="5.5" width="3" height="3" fill="#8c8c8c"/><rect x="5.5" y="-8.5" width="3" height="3" fill="#8c8c8c"/></svg>
<svg style="position:absolute;left:1714.5px;top:978.5px" width="32" height="32" viewBox="-16.0 -16.0 32 32"><rect x="-8" y="-2.5" width="10" height="9.5" fill="none" stroke="#8c8c8c" stroke-width="1.2"/><rect x="-4" y="0" width="4" height="4" fill="#8c8c8c"/><path d="M0 0L7 -5.5M6.5 -9V3" stroke="#8c8c8c" stroke-width="1.1"/><rect x="-9.5" y="-4.0" width="3" height="3" fill="#8c8c8c"/><rect x="0.5" y="-4.0" width="3" height="3" fill="#8c8c8c"/><rect x="-9.5" y="5.5" width="3" height="3" fill="#8c8c8c"/><rect x="0.5" y="5.5" width="3" height="3" fill="#8c8c8c"/><rect x="5.5" y="-2.5" width="3" height="3" fill="#8c8c8c"/><rect x="5.5" y="2.0" width="3" height="3" fill="#8c8c8c"/></svg>
<svg style="position:absolute;left:1743.0px;top:978.5px" width="32" height="32" viewBox="-16.0 -16.0 32 32"><path d="M-8.5 -3.5L-4.5 -8H5L1 -3.5Z" fill="none" stroke="#8c8c8c" stroke-width="1.2"/><path d="M3 -6.5Q7.5 -5 6.5 -0.5M4.5 -1.5L6.5 0.5L8.5 -1.5" fill="none" stroke="#8c8c8c" stroke-width="1.1"/><rect x="-1" y="1.5" width="8.5" height="6" fill="none" stroke="#8c8c8c" stroke-width="1.2"/></svg>
<svg style="position:absolute;left:1770.5px;top:978.5px" width="32" height="32" viewBox="-16.0 -16.0 32 32"><path d="M-2.5 -3L2 -8H9L4.5 -3Z" fill="none" stroke="#8c8c8c" stroke-width="1.2"/><path d="M6 -1.5L1.5 4" stroke="#8c8c8c" stroke-width="1.1"/><rect x="-8.5" y="1.5" width="8.5" height="6" fill="none" stroke="#8c8c8c" stroke-width="1.2"/></svg>
<svg style="position:absolute;left:1799.0px;top:978.5px" width="32" height="32" viewBox="-16.0 -16.0 32 32"><rect x="-8" y="-1.5" width="9" height="9" fill="none" stroke="#8c8c8c" stroke-width="1.2"/><rect x="-5.5" y="-6" width="3.5" height="3.5" fill="#8c8c8c"/><path d="M-3.8 -2.5V2H2.5" fill="none" stroke="#8c8c8c" stroke-width="1.1"/><circle cx="-3.8" cy="2.5" r="1.6" fill="#8c8c8c"/><rect x="3" y="0.5" width="4" height="4" fill="#8c8c8c"/><ellipse cx="5.5" cy="-4.5" rx="2.6" ry="3" fill="#8c8c8c"/><path d="M4 -6.5V-8A1.5 1.5 0 0 1 7 -8V-6.5" fill="none" stroke="#8c8c8c" stroke-width="1"/></svg>
<svg style="position:absolute;left:1827.0px;top:978.5px" width="32" height="32" viewBox="-16.0 -16.0 32 32"><path d="M-7.5 -1V6.5H7.5V-6" fill="none" stroke="#fff" stroke-width="1.8"/><path d="M-7.5 -1L7.5 -6" stroke="#e01020" stroke-width="2.2"/><rect x="-9.5" y="-3" width="4" height="4" rx="1" fill="#7aa8f0"/><rect x="5.5" y="-8" width="4" height="4" rx="1" fill="#7aa8f0"/><rect x="-9.5" y="4.5" width="4" height="4" rx="1" fill="#7aa8f0"/><rect x="5.5" y="4.5" width="4" height="4" rx="1" fill="#7aa8f0"/></svg>
<svg style="position:absolute;left:1855.0px;top:978.5px" width="32" height="32" viewBox="-16.0 -16.0 32 32"><rect x="-7.5" y="-7.5" width="15" height="15" fill="none" stroke="#a8a8a8" stroke-width="1.4"/><rect x="-4" y="-4" width="8" height="8" fill="#7aa0d8" stroke="#fff" stroke-width="1.1"/><path d="M-7.5 7.5L7.5 -7.5" stroke="#e01020" stroke-width="2"/><rect x="-9.2" y="-9.2" width="3.4" height="3.4" rx="1" fill="#a8a8a8"/><rect x="-9.2" y="5.8" width="3.4" height="3.4" rx="1" fill="#a8a8a8"/><rect x="5.8" y="-9.2" width="3.4" height="3.4" rx="1" fill="#a8a8a8"/><rect x="5.8" y="5.8" width="3.4" height="3.4" rx="1" fill="#a8a8a8"/></svg>
<div style="position:absolute;left:11px;top:1018.84px;font-size:12px;line-height:1;color:#fff;white-space:pre;letter-spacing:-0.140px;">Pre-defined\Standard: Rendering Complete 41 s,1 443 M</div>
<div style="position:absolute;left:1453px;top:1022.34px;font-size:12px;line-height:1;color:#8a8a8a;white-space:pre;letter-spacing:-0.918px;">SNAP</div>
<div style="position:absolute;left:1491.5px;top:1022.34px;font-size:12px;line-height:1;color:#8a8a8a;white-space:pre;letter-spacing:-1.552px;">GEO</div>
<div style="position:absolute;left:1540px;top:1019px;width:73px;height:19px;background:#2b2b2b;border:1px solid #7c7c7c;"></div>
<div style="position:absolute;left:1546px;top:1022.34px;font-size:12px;line-height:1;color:#fff;white-space:pre;letter-spacing:-0.432px;">-0.5769&quot;</div>
<div style="position:absolute;left:1530px;top:1021px;width:7px;height:6px;background:transparent;border:1px solid #e0e0e0;"></div>
<div style="position:absolute;left:1531.5px;top:1028.73px;font-size:8px;line-height:1;color:#c0c0c0;white-space:pre;">x</div>
<div style="position:absolute;left:1632px;top:1019px;width:73px;height:19px;background:#2b2b2b;border:1px solid #7c7c7c;"></div>
<div style="position:absolute;left:1637.5px;top:1022.34px;font-size:12px;line-height:1;color:#fff;white-space:pre;letter-spacing:-0.578px;">5.15983&quot;</div>
<div style="position:absolute;left:1622px;top:1021px;width:7px;height:6px;background:transparent;border:1px solid #e0e0e0;"></div>
<div style="position:absolute;left:1623.5px;top:1028.73px;font-size:8px;line-height:1;color:#c0c0c0;white-space:pre;">Y</div>
<div style="position:absolute;left:1724px;top:1019px;width:73px;height:19px;background:#2b2b2b;border:1px solid #7c7c7c;"></div>
<div style="position:absolute;left:1729px;top:1022.34px;font-size:12px;line-height:1;color:#fff;white-space:pre;letter-spacing:-0.516px;">3.16046&quot;</div>
<div style="position:absolute;left:1714px;top:1021px;width:7px;height:6px;background:transparent;border:1px solid #e0e0e0;"></div>
<div style="position:absolute;left:1715.5px;top:1028.73px;font-size:8px;line-height:1;color:#c0c0c0;white-space:pre;">Z</div>
<div style="position:absolute;left:1806px;top:1017.84px;font-size:12px;line-height:1;color:#fff;white-space:pre;letter-spacing:-1.005px;">83%</div>
<div style="position:absolute;left:1863px;top:1017.84px;font-size:12px;line-height:1;color:#fff;white-space:pre;letter-spacing:-0.605px;">12:42 PM</div>
<div style="position:absolute;left:490px;top:1040px;width:48px;height:40px;background:#3a4a56;"></div>
<div style="position:absolute;left:151px;top:1078px;width:40px;height:2px;background:#76b9ed;"></div>
<div style="position:absolute;left:249px;top:1078px;width:40px;height:2px;background:#76b9ed;"></div>
<div style="position:absolute;left:396px;top:1078px;width:40px;height:2px;background:#76b9ed;"></div>
<div style="position:absolute;left:445px;top:1078px;width:40px;height:2px;background:#76b9ed;"></div>
<div style="position:absolute;left:490px;top:1078px;width:48px;height:2px;background:#76b9ed;"></div>
<svg style="position:absolute;left:8.0px;top:1044.0px" width="32" height="32" viewBox="-16.0 -16.0 32 32"><path d="M-8.5 -6.5L-1 -7.6V-0.6H-8.5ZM0 -7.8L8.5 -9V-0.6H0ZM-8.5 0.6H-1V7.6L-8.5 6.5ZM0 0.6H8.5V9L0 7.8Z" fill="#fff"/></svg>
<svg style="position:absolute;left:55.0px;top:1043.0px" width="34" height="34" viewBox="-17.0 -17.0 34 34"><circle cx="2.5" cy="-2" r="7.6" fill="none" stroke="#fff" stroke-width="1.8"/><path d="M-3 4L-10.5 12" stroke="#fff" stroke-width="2"/></svg>
<svg style="position:absolute;left:104.0px;top:1044.0px" width="32" height="32" viewBox="-16.0 -16.0 32 32"><rect x="-7.5" y="-4.5" width="10" height="9" fill="none" stroke="#fff" stroke-width="1.3"/><path d="M-8 -8H3M-8 -8V-6.5M3 -8V-6.5M-8 8H3M-8 8V6.5M3 8V6.5" stroke="#fff" stroke-width="1.3" fill="none"/><path d="M7 -8.5V-5M7 1V8" stroke="#fff" stroke-width="1.3"/><rect x="5.5" y="-4" width="3" height="4" fill="#fff"/></svg>
<svg style="position:absolute;left:155.0px;top:1043.0px" width="32" height="32" viewBox="-16.0 -16.0 32 32"><path d="M-11 -9H-3L-1 -6.5H11V9H-11Z" fill="#f0b818"/><path d="M-11 -5H11V9H-11Z" fill="#fcd560"/><path d="M-6.5 9V2.5H6.5V9H3.5V5.5H-3.5V9Z" fill="#3a8fe0"/></svg>
<svg style="position:absolute;left:203.0px;top:1043.0px" width="32" height="32" viewBox="-16.0 -16.0 32 32"><path d="M-4 -9.5H9L5 6H-10.5Z" fill="#5ab8c0"/><path d="M-3 -9.5H9L7.5 -4H-5Z" fill="#b8e0e0"/><path d="M-6 -3L-1 -8L1 2L-8 5Z" fill="#8ad0d0" opacity=".7"/><path d="M9 -9.5L11 6L5 6Z" fill="#d8c080"/><path d="M-10.500 6H5L4 9H-9Z" fill="#e8f0f0"/></svg>
<svg style="position:absolute;left:252.0px;top:1042.0px" width="32" height="32" viewBox="-16.0 -16.0 32 32"><path d="M-10 -7.500H-5L-3 -10H4L6 -7.5H11V6H-1L-4 10V6H-10Z" fill="#2080c8" stroke="#b8e0ff" stroke-width="1"/><circle cx="1" cy="-1" r="5.2" fill="#104878" stroke="#b8e0ff" stroke-width="1.4"/><circle cx="1" cy="-1" r="2.6" fill="#3898e0"/></svg>
<svg style="position:absolute;left:301.0px;top:1043.0px" width="34" height="34" viewBox="-17.0 -17.0 34 34"><circle r="12" fill="#1c78c8"/><path d="M-12 0A12 12 0 0 1 12 -1Q12 5 6 5Q2 5 3 1Q4 -5 -2 -5Q-8 -5 -12 0Z" fill="#38c890"/><path d="M-12 0Q-8 -6 -1 -5.500Q-7 -3 -6.5 4Q-6 10 2 11.800A12 12 0 0 1 -12 0Z" fill="#1868b8"/><path d="M-1 -2Q4 -2 3.500 2Q3 5 7 5Q4 9 0 7Q-4 5 -1 -2Z" fill="#1e2f3c"/></svg>
<svg style="position:absolute;left:350.0px;top:1043.0px" width="34" height="34" viewBox="-17.0 -17.0 34 34"><circle r="12" fill="#e84030"/><path d="M-10.4 -6L-3 6.500L0 12A12 12 0 0 1 -10.4 -6Z" fill="#38a850"/><path d="M12 0A12 12 0 0 1 0 12L5.5 2.500Q6.500 0 5.200 -3H11.600Q12 -1.500 12 0Z" fill="#f8c020"/><circle r="5.600" fill="#fff"/><circle r="4.400" fill="#4080f0"/></svg>
<svg style="position:absolute;left:399.0px;top:1043.0px" width="34" height="34" viewBox="-17.0 -17.0 34 34"><rect x="-3" y="-11" width="13" height="17" fill="#1068c0"/><rect x="3.5" y="-11" width="6.5" height="5.500" fill="#38a8f0"/><rect x="-3" y="-5.500" width="6.500" height="5.500" fill="#2088e0"/><rect x="3.5" y="-5.5" width="6.5" height="5.5" fill="#1878d0"/><rect x="-12" y="-6" width="10" height="10" rx="1" fill="#1070d0"/><circle cx="-7" cy="-1" r="2.800" fill="none" stroke="#fff" stroke-width="1.500"/><rect x="-0.500" y="4" width="15" height="10" fill="#e8b868"/><path d="M-0.500 4L7 10L14.500 4" fill="none" stroke="#fff" stroke-width="1.200"/></svg>
<svg style="position:absolute;left:448.0px;top:1043.0px" width="34" height="34" viewBox="-17.0 -17.0 34 34"><circle r="12" fill="#f4f4f4"/><circle r="9.800" fill="#181818"/><path d="M-4 -3Q0 -9 5 -5Q8 -2 4 4Q0 9 -5 7Q-2 3 -4 -3Z" fill="#f4f4f4"/><path d="M-6 6L7 -4L8 -2L-4 8Z" fill="#20a080"/><path d="M-6 -6L-1 -7L-2 -4Z" fill="#181818"/></svg>
<div style="position:absolute;left:502px;top:1048px;width:24px;height:25px;background:#1c587a;border-radius:3px;"></div>
<div style="position:absolute;left:504.5px;top:1054.94px;font-size:4.2px;line-height:1;color:#d8e8f0;white-space:pre;letter-spacing:-0.207px;font-weight:bold;">TurboCAD</div>
<div style="position:absolute;left:506.5px;top:1060.50px;font-size:6.5px;line-height:1;color:#fff;white-space:pre;letter-spacing:0.141px;font-weight:bold;">2024</div>
<svg style="position:absolute;left:1655.0px;top:1044.0px" width="32" height="32" viewBox="-16.0 -16.0 32 32"><path d="M-6 3L0 -3L6 3" fill="none" stroke="#fff" stroke-width="1.300"/></svg>
<svg style="position:absolute;left:1678.5px;top:1044.0px" width="32" height="32" viewBox="-16.0 -16.0 32 32"><rect x="-6.500" y="-5" width="13" height="10" fill="#e8c078"/><path d="M-6.500 -5L0 1L6.500 -5" fill="none" stroke="#1e2f3c" stroke-width="1.200"/></svg>
<svg style="position:absolute;left:1703.0px;top:1044.0px" width="32" height="32" viewBox="-16.0 -16.0 32 32"><path d="M0 -8Q-3 -6 -7 -6V-1Q-7 5 0 8Q7 5 7 -1V-6Q3 -6 0 -8Z" fill="#fff"/><path d="M0 -8V8M-7 -1H7" stroke="#1e2f3c" stroke-width="1.300"/><path d="M0 -8Q3 -6 7 -6V-1H0Z" fill="#1e2f3c"/><path d="M0 -1H-7Q-7 5 0 8Z" fill="#1e2f3c"/><path d="M0 -8Q-3 -6 -7 -6V-1Q-7 5 0 8Q7 5 7 -1V-6Q3 -6 0 -8Z" fill="none" stroke="#fff" stroke-width="1"/><circle cx="4.500" cy="5" r="3.800" fill="#20a050"/><path d="M2.700 5L4 6.400L6.400 3.800" fill="none" stroke="#fff" stroke-width="1"/></svg>
<svg style="position:absolute;left:1727.0px;top:1044.0px" width="32" height="32" viewBox="-16.0 -16.0 32 32"><rect x="-4" y="-3.500" width="11.500" height="8" fill="none" stroke="#fff" stroke-width="1.200"/><rect x="7.500" y="-1.500" width="1.300" height="4" fill="#fff"/><path d="M-7 -7.500V-4M-4.500 -7.500V-4" stroke="#fff" stroke-width="1"/><path d="M-8 -4H-3.500V-1Q-3.500 1 -5.800 1Q-8 1 -8 -1Z" fill="#fff"/><path d="M-5.800 1V3.500H-3" fill="none" stroke="#fff" stroke-width="1"/></svg>
<svg style="position:absolute;left:1751.0px;top:1044.0px" width="32" height="32" viewBox="-16.0 -16.0 32 32"><rect x="-5.500" y="-6.500" width="13" height="9.500" fill="none" stroke="#fff" stroke-width="1.200"/><path d="M1 3V6.500M-3 7H5" stroke="#fff" stroke-width="1.200"/><rect x="-8" y="-6.500" width="4" height="3" fill="#1e2f3c" stroke="#fff" stroke-width="1"/><path d="M-6 -3.500V7" stroke="#fff" stroke-width="1.200"/></svg>
<svg style="position:absolute;left:1775.0px;top:1044.0px" width="32" height="32" viewBox="-16.0 -16.0 32 32"><path d="M-8 -2.500H-5.500L-2 -6V6L-5.500 2.500H-8Z" fill="none" stroke="#fff" stroke-width="1.100"/><path d="M0.500 -2.500Q2.500 0 0.500 2.500M3 -4.500Q6.500 0 3 4.500M5.500 -6.500Q10.500 0 5.500 6.500" fill="none" stroke="#fff" stroke-width="1.100"/></svg>
<div style="position:absolute;left:1812px;top:1044.54px;font-size:12px;line-height:1;color:#fff;white-space:pre;letter-spacing:-0.543px;">12:42 PM</div>
<div style="position:absolute;left:1810px;top:1062.34px;font-size:12px;line-height:1;color:#fff;white-space:pre;letter-spacing:-0.262px;">1/19/2025</div>
<svg style="position:absolute;left:1871.0px;top:1042.5px" width="32" height="32" viewBox="-16.0 -16.0 32 32"><path d="M-8 -6.500H8V5H-2.500L-8 9Z" fill="#fff"/><path d="M-5.500 -3.500H5.500M-5.500 -1H5.500M-5.500 1.500H5.500" stroke="#1e2f3c" stroke-width="1"/></svg>
<svg style="position:absolute;left:1878.5px;top:1051.0px" width="32" height="32" viewBox="-16.0 -16.0 32 32"><circle r="8.500" fill="#303a44" stroke="#808890" stroke-width="1"/></svg>
<div style="position:absolute;left:1887.5px;top:1061.57px;font-size:11.5px;line-height:1;color:#fff;white-space:pre;letter-spacing:0.609px;font-weight:bold;">20</div>
<div style="position:absolute;left:1915px;top:1040px;width:1px;height:40px;background:#56626c;"></div>
<svg style="position:absolute;left:0;top:0" width="1920" height="1080" viewBox="0 0 1920 1080"><defs>
<radialGradient id="vg" gradientUnits="userSpaceOnUse" cx="935" cy="740" r="260"><stop offset="0" stop-color="#7000fc"/><stop offset=".45" stop-color="#5a00f8"/><stop offset=".8" stop-color="#4a00ee"/><stop offset="1" stop-color="#4000dc"/></radialGradient>
<radialGradient id="vm" gradientUnits="userSpaceOnUse" cx="930" cy="778" r="175" gradientTransform="translate(930 778) scale(1 .82) translate(-930 -778)"><stop offset="0" stop-color="#a400f8"/><stop offset=".35" stop-color="#9a00f8" stop-opacity=".97"/><stop offset=".65" stop-color="#7c00f8" stop-opacity=".78"/><stop offset=".88" stop-color="#5a08fc" stop-opacity=".42"/><stop offset="1" stop-color="#5200f4" stop-opacity="0"/></radialGradient>
<linearGradient id="vi" x1="0" y1="0" x2="0" y2="1"><stop offset="0" stop-color="#24086c"/><stop offset=".3" stop-color="#1c0058"/><stop offset=".7" stop-color="#18004c"/><stop offset="1" stop-color="#140044"/></linearGradient>
<filter id="b4" x="-20%" y="-20%" width="140%" height="140%"><feGaussianBlur stdDeviation="4"/></filter>
<filter id="b8" x="-20%" y="-20%" width="140%" height="140%"><feGaussianBlur stdDeviation="8"/></filter>
<filter id="b14" x="-30%" y="-30%" width="160%" height="160%"><feGaussianBlur stdDeviation="14"/></filter>
<filter id="b3" x="-20%" y="-20%" width="140%" height="140%"><feGaussianBlur stdDeviation="3"/></filter>
<filter id="b2" x="-20%" y="-20%" width="140%" height="140%"><feGaussianBlur stdDeviation="1.6"/></filter>
<filter id="b1" x="-20%" y="-20%" width="140%" height="140%"><feGaussianBlur stdDeviation=".8"/></filter>
<clipPath id="vc"><path d="M833.3 438.5C833.3 444.0 834.9 447.1 836.0 453.0C837.1 458.9 838.6 465.9 839.8 473.7C841.0 481.5 842.1 490.7 843.0 499.6C843.9 508.6 844.6 518.2 845.4 527.4C846.1 536.6 847.0 547.1 847.5 555.0C848.0 562.9 848.7 568.3 848.5 575.0C848.3 581.7 847.8 587.7 846.5 595.0C845.2 602.3 844.1 610.7 840.7 619.0C837.3 627.3 832.3 635.7 826.0 645.0C819.7 654.3 810.0 664.5 803.0 675.0C796.0 685.5 788.8 697.5 784.0 708.0C779.2 718.5 776.5 728.7 774.5 738.0C772.5 747.3 771.8 754.2 772.0 764.0C772.2 773.8 773.5 785.3 776.0 797.0C778.5 808.7 782.1 821.0 787.0 834.0C791.9 847.0 799.1 863.2 805.6 875.0C812.1 886.8 817.6 896.3 826.0 905.0C834.4 913.7 844.0 920.9 856.0 927.0C868.0 933.1 884.8 938.5 898.0 941.5C911.2 944.5 922.7 945.0 935.0 945.0C947.3 945.0 959.7 944.2 972.0 941.5C984.3 938.8 998.0 934.1 1009.0 928.5C1020.0 922.9 1029.9 915.8 1038.0 908.0C1046.1 900.2 1051.1 893.1 1057.4 882.0C1063.7 870.9 1071.0 854.5 1076.0 841.5C1081.0 828.5 1084.7 816.4 1087.5 804.0C1090.3 791.6 1092.0 776.8 1092.6 767.0C1093.2 757.2 1092.8 754.2 1091.0 745.0C1089.2 735.8 1086.5 723.1 1082.0 712.0C1077.5 700.9 1070.7 689.2 1064.0 678.5C1057.3 667.8 1048.6 657.9 1042.0 648.0C1035.4 638.1 1028.3 627.0 1024.5 619.0C1020.7 611.0 1020.2 605.7 1019.0 600.0C1017.8 594.3 1017.4 590.8 1017.0 585.0C1016.6 579.2 1016.5 573.0 1016.7 565.0C1017.0 557.0 1017.7 546.0 1018.5 536.7C1019.3 527.4 1020.2 518.3 1021.3 509.0C1022.4 499.7 1023.6 490.3 1025.0 481.0C1026.4 471.7 1028.5 460.1 1029.6 453.0C1030.7 445.9 1031.5 444.0 1031.5 438.5C1031.5 433.0 1031.4 425.6 1029.5 420.0C1027.6 414.4 1024.9 409.5 1020.0 405.0C1015.1 400.5 1008.3 396.3 1000.0 393.0C991.7 389.7 981.2 386.8 970.0 385.0C958.8 383.2 945.3 382.0 933.0 382.0C920.7 382.0 907.2 383.2 896.0 385.0C884.8 386.8 874.3 389.7 866.0 393.0C857.7 396.3 851.0 400.5 846.0 405.0C841.0 409.5 838.1 414.4 836.0 420.0C833.9 425.6 833.3 433.0 833.3 438.5Z"/></clipPath>
</defs><g clip-path="url(#vc)">
<rect x="760" y="370" width="340" height="590" fill="url(#vg)"/>
<ellipse cx="940" cy="540" rx="38" ry="120" fill="#6400ff" filter="url(#b14)" opacity=".9"/>
<clipPath id="mc"><path d="M794.0 745.0C797.5 737.5 807.5 715.4 815.0 700.0C822.5 684.6 832.0 655.6 839.0 652.6C846.0 649.6 851.0 673.4 857.0 682.0C863.0 690.6 868.2 697.2 875.0 704.0C881.8 710.8 890.5 716.5 898.0 723.0C905.5 729.5 912.6 736.8 920.0 743.0C927.4 749.2 935.1 755.3 942.6 760.0C950.1 764.7 957.6 767.9 965.0 771.0C972.4 774.1 976.5 775.3 987.0 778.5C997.5 781.7 1009.2 786.4 1028.0 790.0C1046.8 793.6 1088.0 798.3 1100.0 800.0L1100 960L760 960L760 745Z"/></clipPath>
<g filter="url(#b3)"><g clip-path="url(#mc)"><rect x="760" y="600" width="340" height="360" fill="url(#vm)"/></g></g>
<path d="M780 760L794.600 744L855.700 681.500L839 652L800 660L760 720Z" fill="#1c0070" opacity=".55" filter="url(#b4)"/>
<path d="M839 652L855.700 681.500L846 692L832 662Z" fill="#1c0070" opacity=".35" filter="url(#b1)"/>
<path d="M1024.5 619.0C1027.4 623.8 1035.4 638.1 1042.0 648.0C1048.6 657.9 1057.3 667.8 1064.0 678.5C1070.7 689.2 1077.5 700.9 1082.0 712.0C1086.5 723.1 1089.2 735.8 1091.0 745.0C1092.8 754.2 1093.2 757.2 1092.6 767.0C1092.0 776.8 1090.3 791.6 1087.5 804.0C1084.7 816.4 1081.0 828.5 1076.0 841.5C1071.0 854.5 1063.7 870.9 1057.4 882.0C1051.1 893.1 1046.1 900.2 1038.0 908.0C1029.9 915.8 1020.0 922.9 1009.0 928.5C998.0 934.1 978.2 939.3 972.0 941.5" fill="none" stroke="#160050" stroke-width="44" filter="url(#b14)" opacity=".6"/>
<path d="M848.5 575.0C848.2 578.3 847.8 587.7 846.5 595.0C845.2 602.3 844.1 610.7 840.7 619.0C837.3 627.3 832.3 635.7 826.0 645.0C819.7 654.3 810.0 664.5 803.0 675.0C796.0 685.5 788.8 697.5 784.0 708.0C779.2 718.5 776.5 728.7 774.5 738.0C772.5 747.3 772.4 759.7 772.0 764.0" fill="none" stroke="#160050" stroke-width="30" filter="url(#b8)" opacity=".55"/>
<path d="M833.3 438.5C833.3 444.0 834.9 447.1 836.0 453.0C837.1 458.9 838.6 465.9 839.8 473.7C841.0 481.5 842.1 490.7 843.0 499.6C843.9 508.6 844.6 518.2 845.4 527.4C846.1 536.6 847.0 547.1 847.5 555.0C848.0 562.9 848.7 568.3 848.5 575.0C848.3 581.7 847.8 587.7 846.5 595.0C845.2 602.3 844.1 610.7 840.7 619.0C837.3 627.3 832.3 635.7 826.0 645.0C819.7 654.3 810.0 664.5 803.0 675.0C796.0 685.5 788.8 697.5 784.0 708.0C779.2 718.5 776.5 728.7 774.5 738.0C772.5 747.3 771.8 754.2 772.0 764.0C772.2 773.8 773.5 785.3 776.0 797.0C778.5 808.7 782.1 821.0 787.0 834.0C791.9 847.0 799.1 863.2 805.6 875.0C812.1 886.8 817.6 896.3 826.0 905.0C834.4 913.7 844.0 920.9 856.0 927.0C868.0 933.1 884.8 938.5 898.0 941.5C911.2 944.5 922.7 945.0 935.0 945.0C947.3 945.0 959.7 944.2 972.0 941.5C984.3 938.8 998.0 934.1 1009.0 928.5C1020.0 922.9 1029.9 915.8 1038.0 908.0C1046.1 900.2 1051.1 893.1 1057.4 882.0C1063.7 870.9 1071.0 854.5 1076.0 841.5C1081.0 828.5 1084.7 816.4 1087.5 804.0C1090.3 791.6 1092.0 776.8 1092.6 767.0C1093.2 757.2 1092.8 754.2 1091.0 745.0C1089.2 735.8 1086.5 723.1 1082.0 712.0C1077.5 700.9 1070.7 689.2 1064.0 678.5C1057.3 667.8 1048.6 657.9 1042.0 648.0C1035.4 638.1 1028.3 627.0 1024.5 619.0C1020.7 611.0 1020.2 605.7 1019.0 600.0C1017.8 594.3 1017.4 590.8 1017.0 585.0C1016.6 579.2 1016.5 573.0 1016.7 565.0C1017.0 557.0 1017.7 546.0 1018.5 536.7C1019.3 527.4 1020.2 518.3 1021.3 509.0C1022.4 499.7 1023.6 490.3 1025.0 481.0C1026.4 471.7 1028.5 460.1 1029.6 453.0C1030.7 445.9 1031.5 444.0 1031.5 438.5C1031.5 433.0 1031.4 425.6 1029.5 420.0C1027.6 414.4 1024.9 409.5 1020.0 405.0C1015.1 400.5 1008.3 396.3 1000.0 393.0C991.7 389.7 981.2 386.8 970.0 385.0C958.8 383.2 945.3 382.0 933.0 382.0C920.7 382.0 907.2 383.2 896.0 385.0C884.8 386.8 874.3 389.7 866.0 393.0C857.7 396.3 851.0 400.5 846.0 405.0C841.0 409.5 838.1 414.4 836.0 420.0C833.9 425.6 833.3 433.0 833.3 438.5Z" fill="none" stroke="#12003c" stroke-width="26" filter="url(#b8)" opacity=".85"/>
<path d="M833.3 438.5C833.3 444.0 834.9 447.1 836.0 453.0C837.1 458.9 838.6 465.9 839.8 473.7C841.0 481.5 842.1 490.7 843.0 499.6C843.9 508.6 844.6 518.2 845.4 527.4C846.1 536.6 847.0 547.1 847.5 555.0C848.0 562.9 848.7 568.3 848.5 575.0C848.3 581.7 847.8 587.7 846.5 595.0C845.2 602.3 844.1 610.7 840.7 619.0C837.3 627.3 832.3 635.7 826.0 645.0C819.7 654.3 810.0 664.5 803.0 675.0C796.0 685.5 788.8 697.5 784.0 708.0C779.2 718.5 776.5 728.7 774.5 738.0C772.5 747.3 771.8 754.2 772.0 764.0C772.2 773.8 773.5 785.3 776.0 797.0C778.5 808.7 782.1 821.0 787.0 834.0C791.9 847.0 799.1 863.2 805.6 875.0C812.1 886.8 817.6 896.3 826.0 905.0C834.4 913.7 844.0 920.9 856.0 927.0C868.0 933.1 884.8 938.5 898.0 941.5C911.2 944.5 922.7 945.0 935.0 945.0C947.3 945.0 959.7 944.2 972.0 941.5C984.3 938.8 998.0 934.1 1009.0 928.5C1020.0 922.9 1029.9 915.8 1038.0 908.0C1046.1 900.2 1051.1 893.1 1057.4 882.0C1063.7 870.9 1071.0 854.5 1076.0 841.5C1081.0 828.5 1084.7 816.4 1087.5 804.0C1090.3 791.6 1092.0 776.8 1092.6 767.0C1093.2 757.2 1092.8 754.2 1091.0 745.0C1089.2 735.8 1086.5 723.1 1082.0 712.0C1077.5 700.9 1070.7 689.2 1064.0 678.5C1057.3 667.8 1048.6 657.9 1042.0 648.0C1035.4 638.1 1028.3 627.0 1024.5 619.0C1020.7 611.0 1020.2 605.7 1019.0 600.0C1017.8 594.3 1017.4 590.8 1017.0 585.0C1016.6 579.2 1016.5 573.0 1016.7 565.0C1017.0 557.0 1017.7 546.0 1018.5 536.7C1019.3 527.4 1020.2 518.3 1021.3 509.0C1022.4 499.7 1023.6 490.3 1025.0 481.0C1026.4 471.7 1028.5 460.1 1029.6 453.0C1030.7 445.9 1031.5 444.0 1031.5 438.5C1031.5 433.0 1031.4 425.6 1029.5 420.0C1027.6 414.4 1024.9 409.5 1020.0 405.0C1015.1 400.5 1008.3 396.3 1000.0 393.0C991.7 389.7 981.2 386.8 970.0 385.0C958.8 383.2 945.3 382.0 933.0 382.0C920.7 382.0 907.2 383.2 896.0 385.0C884.8 386.8 874.3 389.7 866.0 393.0C857.7 396.3 851.0 400.5 846.0 405.0C841.0 409.5 838.1 414.4 836.0 420.0C833.9 425.6 833.3 433.0 833.3 438.5Z" fill="none" stroke="#1a0058" stroke-width="7" filter="url(#b2)" opacity=".8"/>
</g><path d="M836.0 420.0C837.7 417.5 841.0 409.5 846.0 405.0C851.0 400.5 857.7 396.3 866.0 393.0C874.3 389.7 884.8 386.8 896.0 385.0C907.2 383.2 920.7 382.0 933.0 382.0C945.3 382.0 958.8 383.2 970.0 385.0C981.2 386.8 991.7 389.7 1000.0 393.0C1008.3 396.3 1015.1 400.5 1020.0 405.0C1024.9 409.5 1027.9 417.5 1029.5 420.0" fill="none" stroke="#2e0ca4" stroke-width="7" opacity=".9" clip-path="url(#vc)"/><path d="M840.0 446.0C842.4 450.3 850.2 446.8 853.7 449.6C857.2 452.4 856.1 458.3 861.0 462.6C865.9 466.9 874.7 471.9 883.0 475.5C891.3 479.1 902.8 482.2 911.0 484.0C919.2 485.8 924.7 486.3 932.4 486.3C940.1 486.3 948.6 485.8 957.4 484.0C966.2 482.2 976.7 478.8 985.0 475.5C993.3 472.2 1000.9 468.3 1007.4 464.4C1013.9 460.5 1020.6 455.9 1024.0 452.0C1027.4 448.1 1027.6 445.7 1028.0 441.0C1028.4 436.3 1028.3 429.3 1026.5 424.0C1024.7 418.7 1021.8 413.5 1017.0 409.0C1012.2 404.5 1006.0 400.3 998.0 397.0C990.0 393.7 979.8 390.8 969.0 389.0C958.2 387.2 945.0 386.0 933.0 386.0C921.0 386.0 907.8 387.2 897.0 389.0C886.2 390.8 876.0 393.7 868.0 397.0C860.0 400.3 853.8 404.5 849.0 409.0C844.2 413.5 841.0 417.8 839.5 424.0C838.0 430.2 837.6 441.7 840.0 446.0Z" fill="url(#vi)"/><path d="M834 440Q838 452 842 470L853 462Q856 452 853.700 449.600L846 447Z" fill="#3c14c8" opacity=".9"/><path d="M1031 441L1026 451.500Q1016 460 1004 466L1012 470Q1024 462 1029 452Z" fill="#3a10c0" opacity=".8"/><path d="M932.4 485.700V452.500" stroke="#1830e8" stroke-width="1.300"/><path d="M932.4 485.700L904 469.500" stroke="#38d838" stroke-width="1.200"/><path d="M932.4 485.700L963 469" stroke="#e82828" stroke-width="1.200"/><path d="M890.500 459L894 463.500L897.500 459M894 463.500V468" stroke="#38d838" stroke-width="1" fill="none"/><path d="M968 459.500L975 468M975 459.500L968 468" stroke="#e82828" stroke-width="1" fill="none"/><path d="M935.500 443H942L935.500 451H942" stroke="#1830e8" stroke-width="1.200" fill="none"/><defs>
<radialGradient id="rgL" gradientUnits="userSpaceOnUse" cx="870" cy="330" r="95"><stop offset="0" stop-color="#ff0808"/><stop offset=".6" stop-color="#f40000"/><stop offset="1" stop-color="#d80000"/></radialGradient>
<radialGradient id="rgR" gradientUnits="userSpaceOnUse" cx="1010" cy="305" r="95"><stop offset="0" stop-color="#ff0808"/><stop offset=".6" stop-color="#f40000"/><stop offset="1" stop-color="#d40000"/></radialGradient>
<linearGradient id="rgB" x1="0" y1="0" x2="0" y2="1"><stop offset="0" stop-color="#d80000"/><stop offset=".5" stop-color="#f00000"/><stop offset="1" stop-color="#c80000"/></linearGradient>
</defs><path d="M828.7 178.9C829.0 177.4 833.4 177.6 835.3 177.0C837.2 176.4 839.2 176.6 840.3 175.5C841.3 174.4 841.6 172.1 841.6 170.5C841.6 168.9 839.2 167.1 840.4 165.7C841.5 164.3 845.3 163.1 848.5 162.0C851.7 160.9 857.1 161.1 859.5 159.0C861.9 156.9 861.2 151.7 863.0 149.5C864.8 147.3 867.2 146.2 870.5 145.7C873.8 145.2 878.5 145.7 882.5 146.5C886.5 147.3 891.6 150.1 894.5 150.5C897.4 150.9 898.0 150.2 900.0 149.0C902.0 147.8 903.4 145.1 906.5 143.3C909.6 141.5 914.6 139.3 918.6 138.4C922.6 137.5 927.0 137.2 930.6 137.8C934.2 138.4 937.2 141.4 940.2 142.0C943.2 142.6 946.3 140.8 948.7 141.4C951.1 142.0 953.2 143.8 954.7 145.7C956.2 147.6 955.4 151.4 957.5 153.0C959.6 154.6 963.3 154.2 967.5 155.0C971.7 155.8 979.7 155.8 982.5 157.5C985.3 159.2 984.4 162.1 984.5 165.0C984.6 167.9 984.2 171.3 983.0 175.0C981.8 178.7 979.3 182.8 977.5 187.0C975.7 191.2 974.1 192.8 972.0 200.0C969.9 207.2 967.0 219.7 965.0 230.0C963.0 240.3 962.5 250.3 960.0 262.0C957.5 273.7 953.7 293.7 950.0 300.0C946.3 306.3 942.2 305.0 938.0 300.0C933.8 295.0 931.3 280.0 925.0 270.0C918.7 260.0 909.2 249.2 900.0 240.0C890.8 230.8 878.3 219.7 870.0 215.0C861.7 210.3 854.8 213.3 850.0 212.0C845.2 210.7 843.4 209.8 841.4 207.0C839.4 204.2 839.3 198.5 838.0 195.0C836.7 191.5 835.0 188.7 833.5 186.0C832.0 183.3 828.4 180.4 828.7 178.9Z" fill="url(#rgB)"/><clipPath id="cb"><path d="M828.7 178.9C829.0 177.4 833.4 177.6 835.3 177.0C837.2 176.4 839.2 176.6 840.3 175.5C841.3 174.4 841.6 172.1 841.6 170.5C841.6 168.9 839.2 167.1 840.4 165.7C841.5 164.3 845.3 163.1 848.5 162.0C851.7 160.9 857.1 161.1 859.5 159.0C861.9 156.9 861.2 151.7 863.0 149.5C864.8 147.3 867.2 146.2 870.5 145.7C873.8 145.2 878.5 145.7 882.5 146.5C886.5 147.3 891.6 150.1 894.5 150.5C897.4 150.9 898.0 150.2 900.0 149.0C902.0 147.8 903.4 145.1 906.5 143.3C909.6 141.5 914.6 139.3 918.6 138.4C922.6 137.5 927.0 137.2 930.6 137.8C934.2 138.4 937.2 141.4 940.2 142.0C943.2 142.6 946.3 140.8 948.7 141.4C951.1 142.0 953.2 143.8 954.7 145.7C956.2 147.6 955.4 151.4 957.5 153.0C959.6 154.6 963.3 154.2 967.5 155.0C971.7 155.8 979.7 155.8 982.5 157.5C985.3 159.2 984.4 162.1 984.5 165.0C984.6 167.9 984.2 171.3 983.0 175.0C981.8 178.7 979.3 182.8 977.5 187.0C975.7 191.2 974.1 192.8 972.0 200.0C969.9 207.2 967.0 219.7 965.0 230.0C963.0 240.3 962.5 250.3 960.0 262.0C957.5 273.7 953.7 293.7 950.0 300.0C946.3 306.3 942.2 305.0 938.0 300.0C933.8 295.0 931.3 280.0 925.0 270.0C918.7 260.0 909.2 249.2 900.0 240.0C890.8 230.8 878.3 219.7 870.0 215.0C861.7 210.3 854.8 213.3 850.0 212.0C845.2 210.7 843.4 209.8 841.4 207.0C839.4 204.2 839.3 198.5 838.0 195.0C836.7 191.5 835.0 188.7 833.5 186.0C832.0 183.3 828.4 180.4 828.7 178.9Z"/></clipPath><defs><filter id="z8" x="-20%" y="-20%" width="140%" height="140%"><feGaussianBlur stdDeviation="11"/></filter><filter id="z12" x="-30%" y="-30%" width="160%" height="160%"><feGaussianBlur stdDeviation="28"/></filter></defs><g clip-path="url(#cb)"><path d="M850 205L990 170L975 300L930 305Z" fill="#e40000"/><g transform="translate(820 130) scale(0.101865)"><path d="M0 0L1800 0L1800 1800L0 1800Z" fill="#d80000"/><path d="M740 205L850 130L1000 75L1110 75L1180 110L1230 180L1220 200L1000 330L930 320L990 270L860 225L760 215Z" fill="#c80000"/><path d="M760 200L860 140L1000 90L1100 90L1160 120L1000 160L860 200Z" fill="#e40000" filter="url(#z8)"/><path d="M410 210L470 160L600 165L740 205L700 240L560 250L490 310L430 300L400 260Z" fill="#dc0000"/><path d="M440 235L520 215L600 225L560 260L490 310L440 290Z" fill="#8c0000" filter="url(#z8)"/><path d="M690 245L860 222L995 268L930 322L800 302Z" fill="#4a0000" filter="url(#z8)"/><path d="M1180 110L1290 120L1340 200L1350 250L1300 260L1230 200Z" fill="#a80000"/><path d="M1190 115L1290 125L1335 200" fill="none" stroke="#e00000" stroke-width="27" stroke-linejoin="round" stroke-linecap="round" filter="url(#z8)"/><path d="M1230 180L1300 170L1330 240L1290 300L1240 230Z" fill="#700000" filter="url(#z8)"/><path d="M490 310L600 290L800 305L930 325L1000 330L1220 200L1250 230L1100 420L1000 430L850 400L650 430L560 510L520 420Z" fill="#bc0000"/><path d="M495 318L600 298L800 312L930 332L1000 334L1215 208" fill="none" stroke="#f00000" stroke-width="37" stroke-linejoin="round" stroke-linecap="round" filter="url(#z8)"/><path d="M600 340L800 350L940 370L1000 420L850 395L650 420L580 470Z" fill="#a00000" filter="url(#z12)"/><path d="M200 350L280 310L390 290L490 310L520 420L560 510L540 530L400 640L210 420Z" fill="#b40000"/><path d="M215 405L330 430L520 540L400 640L300 540Z" fill="#520000" filter="url(#z8)"/><path d="M205 355L330 392L450 476L545 522" fill="none" stroke="#e80000" stroke-width="34" stroke-linejoin="round" stroke-linecap="round" filter="url(#z8)"/><path d="M300 330L400 310L480 330L510 430L540 500L450 440L340 370Z" fill="#980000" filter="url(#z12)"/><path d="M560 510L650 430L850 400L1000 430L1100 500L1010 640L900 590L700 550L480 590Z" fill="#dc0000"/><path d="M565 512L655 438L850 408L998 438L1095 504" fill="none" stroke="#f80000" stroke-width="37" stroke-linejoin="round" stroke-linecap="round" filter="url(#z8)"/><path d="M700 480L850 460L1000 500L1040 580L900 570L720 540Z" fill="#c40000" filter="url(#z12)"/><path d="M1005 690L1095 505L1225 205L1255 225L1135 525L1035 705Z" fill="#5a0000" filter="url(#z8)"/><path d="M1110 490L1400 260L1460 290L1480 420L1200 480L1020 660Z" fill="#d40000"/><path d="M1125 490L1400 268L1450 290" fill="none" stroke="#f40000" stroke-width="40" stroke-linejoin="round" stroke-linecap="round" filter="url(#z8)"/><path d="M1150 560L1300 430L1465 310" fill="none" stroke="#780000" stroke-width="27" stroke-linejoin="round" stroke-linecap="round" filter="url(#z8)"/><path d="M1350 250L1450 240L1590 250L1610 300L1580 420L1550 540L1480 430L1460 290Z" fill="#b00000"/><path d="M1460 250L1590 258L1600 300L1570 430" fill="none" stroke="#e40000" stroke-width="30" stroke-linejoin="round" stroke-linecap="round" filter="url(#z8)"/><path d="M1470 290L1560 290L1560 400L1500 440Z" fill="#7c0000" filter="url(#z8)"/><path d="M85 480L180 465L300 560L390 660L380 700L230 800L180 640L130 550Z" fill="#a40000"/><path d="M92 482L180 470L300 565L388 662" fill="none" stroke="#e40000" stroke-width="27" stroke-linejoin="round" stroke-linecap="round" filter="url(#z8)"/><path d="M200 560L300 620L370 700L250 780L200 660Z" fill="#8c0000" filter="url(#z8)"/><path d="M380 690L480 590L700 550L900 590L1010 680L1030 700L1250 1000L1000 1100L400 1100L230 800Z" fill="#f20000"/><path d="M385 692L485 598L700 558L898 598L1008 686" fill="none" stroke="#ff1010" stroke-width="34" stroke-linejoin="round" stroke-linecap="round" filter="url(#z8)"/><path d="M500 700L700 640L900 680L1000 800L800 760L560 800Z" fill="#ff0808" filter="url(#z12)"/><path d="M1020 660L1200 480L1480 430L1550 540L1500 700L1400 1100L1250 1100Z" fill="#ee0000"/><path d="M1030 665L1205 488L1480 438" fill="none" stroke="#fc0000" stroke-width="34" stroke-linejoin="round" stroke-linecap="round" filter="url(#z8)"/><path d="M1015 690L1120 830L1250 1020" fill="none" stroke="#8c0000" stroke-width="23" stroke-linejoin="round" stroke-linecap="round" filter="url(#z8)"/><path d="M1350 560L1500 520L1480 720L1400 900Z" fill="#d00000" filter="url(#z12)"/></g><path d="M926 240Q940 254 944 300L952 300Q956 262 964 232L952 226Z" fill="#9c0000" filter="url(#b2)"/></g><path d="M787.5 293.3C786.7 291.1 786.0 288.9 786.7 286.7C787.4 284.5 790.2 282.2 791.7 280.0C793.2 277.8 795.4 275.8 795.8 273.3C796.2 270.8 794.1 268.1 794.2 265.0C794.4 261.9 796.0 258.6 796.7 255.0C797.4 251.4 797.2 246.9 798.3 243.3C799.4 239.7 800.8 235.9 803.3 233.3C805.8 230.7 809.4 228.8 813.3 227.5C817.2 226.2 823.4 227.1 826.7 225.8C830.0 224.6 830.8 222.1 833.3 220.0C835.8 217.9 838.4 215.0 841.7 213.3C845.0 211.6 849.1 210.4 853.3 210.0C857.5 209.6 862.2 210.2 866.7 210.8C871.2 211.4 875.3 211.9 880.0 213.3C884.7 214.7 890.0 216.9 895.0 219.0C900.0 221.1 905.2 222.5 910.0 226.0C914.8 229.5 920.3 234.7 924.0 240.0C927.7 245.3 929.9 252.2 932.0 258.0C934.1 263.8 935.2 269.2 936.5 275.0C937.8 280.8 939.1 286.1 940.0 293.0C940.9 299.9 942.0 310.0 941.7 316.7C941.4 323.4 940.2 327.4 938.3 333.0C936.3 338.6 933.6 345.0 930.0 350.0C926.4 355.0 922.2 359.5 916.7 363.0C911.2 366.5 902.8 369.2 896.7 370.8C890.6 372.4 885.6 373.0 880.0 372.5C874.4 372.0 868.5 370.4 863.0 368.0C857.5 365.6 851.7 361.8 846.7 358.0C841.7 354.2 836.6 349.4 833.0 345.0C829.4 340.6 827.2 335.4 825.0 331.7C822.8 328.0 822.0 325.5 820.0 323.0C818.0 320.5 816.3 319.4 813.0 316.7C809.7 314.0 803.5 309.5 800.0 306.7C796.5 303.9 793.8 302.2 791.7 300.0C789.6 297.8 788.3 295.5 787.5 293.3Z" fill="url(#rgL)"/><clipPath id="cl"><path d="M787.5 293.3C786.7 291.1 786.0 288.9 786.7 286.7C787.4 284.5 790.2 282.2 791.7 280.0C793.2 277.8 795.4 275.8 795.8 273.3C796.2 270.8 794.1 268.1 794.2 265.0C794.4 261.9 796.0 258.6 796.7 255.0C797.4 251.4 797.2 246.9 798.3 243.3C799.4 239.7 800.8 235.9 803.3 233.3C805.8 230.7 809.4 228.8 813.3 227.5C817.2 226.2 823.4 227.1 826.7 225.8C830.0 224.6 830.8 222.1 833.3 220.0C835.8 217.9 838.4 215.0 841.7 213.3C845.0 211.6 849.1 210.4 853.3 210.0C857.5 209.6 862.2 210.2 866.7 210.8C871.2 211.4 875.3 211.9 880.0 213.3C884.7 214.7 890.0 216.9 895.0 219.0C900.0 221.1 905.2 222.5 910.0 226.0C914.8 229.5 920.3 234.7 924.0 240.0C927.7 245.3 929.9 252.2 932.0 258.0C934.1 263.8 935.2 269.2 936.5 275.0C937.8 280.8 939.1 286.1 940.0 293.0C940.9 299.9 942.0 310.0 941.7 316.7C941.4 323.4 940.2 327.4 938.3 333.0C936.3 338.6 933.6 345.0 930.0 350.0C926.4 355.0 922.2 359.5 916.7 363.0C911.2 366.5 902.8 369.2 896.7 370.8C890.6 372.4 885.6 373.0 880.0 372.5C874.4 372.0 868.5 370.4 863.0 368.0C857.5 365.6 851.7 361.8 846.7 358.0C841.7 354.2 836.6 349.4 833.0 345.0C829.4 340.6 827.2 335.4 825.0 331.7C822.8 328.0 822.0 325.5 820.0 323.0C818.0 320.5 816.3 319.4 813.0 316.7C809.7 314.0 803.5 309.5 800.0 306.7C796.5 303.9 793.8 302.2 791.7 300.0C789.6 297.8 788.3 295.5 787.5 293.3Z"/></clipPath><g clip-path="url(#cl)"><path d="M787 293Q792 282 800 280L822 316L818 322Q800 308 790 300Z" fill="#d60000"/><path d="M796 255Q800 240 812 230L830 224L826 240Q812 250 810 272L800 282L794 270Z" fill="#da0000"/><path d="M791.5 281.0C793.0 281.7 797.3 282.7 800.5 285.0C803.7 287.3 807.5 291.2 810.5 295.0C813.5 298.8 816.4 303.8 818.5 308.0C820.6 312.2 822.0 317.2 823.0 320.0C824.0 322.8 820.5 325.0 824.5 325.0C828.5 325.0 840.4 320.9 847.2 320.0C854.0 319.1 859.5 319.4 865.5 319.5C871.5 319.6 879.9 319.1 883.5 320.5C887.1 321.9 885.7 328.4 887.2 328.0C888.7 327.6 890.6 321.2 892.5 318.0C894.4 314.8 895.0 312.8 898.5 309.0C902.0 305.2 909.5 299.5 913.5 295.0C917.5 290.5 920.3 286.2 922.5 282.0C924.7 277.8 926.0 274.7 926.5 270.0C927.0 265.3 926.3 259.3 925.5 254.0C924.7 248.7 922.8 242.3 921.5 238.0C920.2 233.7 918.2 229.7 917.5 228.0" fill="none" stroke="#a00000" stroke-width="11" stroke-linejoin="round" filter="url(#b2)"/><path d="M791.0 279.0C792.5 279.7 796.8 280.7 800.0 283.0C803.2 285.3 807.0 289.2 810.0 293.0C813.0 296.8 815.9 301.8 818.0 306.0C820.1 310.2 821.5 315.2 822.5 318.0C823.5 320.8 820.0 323.0 824.0 323.0C828.0 323.0 839.9 318.9 846.7 318.0C853.5 317.1 859.0 317.4 865.0 317.5C871.0 317.6 879.4 317.1 883.0 318.5C886.6 319.9 885.2 326.4 886.7 326.0C888.2 325.6 890.1 319.2 892.0 316.0C893.9 312.8 894.5 310.8 898.0 307.0C901.5 303.2 909.0 297.5 913.0 293.0C917.0 288.5 919.8 284.2 922.0 280.0C924.2 275.8 925.5 272.7 926.0 268.0C926.5 263.3 925.8 257.3 925.0 252.0C924.2 246.7 922.3 240.3 921.0 236.0C919.7 231.7 917.7 227.7 917.0 226.0" fill="none" stroke="#520000" stroke-width="6.500" stroke-linejoin="round" filter="url(#b1)"/><path d="M790.0 276.0C791.5 276.7 795.8 277.7 799.0 280.0C802.2 282.3 806.0 286.2 809.0 290.0C812.0 293.8 814.9 298.8 817.0 303.0C819.1 307.2 820.5 312.2 821.5 315.0C822.5 317.8 819.0 320.0 823.0 320.0C827.0 320.0 838.9 315.9 845.7 315.0C852.5 314.1 858.0 314.4 864.0 314.5C870.0 314.6 878.4 314.1 882.0 315.5C885.6 316.9 884.2 323.4 885.7 323.0C887.2 322.6 889.1 316.2 891.0 313.0C892.9 309.8 893.5 307.8 897.0 304.0C900.5 300.2 908.0 294.5 912.0 290.0C916.0 285.5 918.8 281.2 921.0 277.0C923.2 272.8 924.5 269.7 925.0 265.0C925.5 260.3 924.8 254.3 924.0 249.0C923.2 243.7 921.3 237.3 920.0 233.0C918.7 228.7 916.7 224.7 916.0 223.0" fill="none" stroke="#2c0000" stroke-width="3" stroke-linejoin="round" filter="url(#b1)"/><path d="M800.0 268.0C800.7 272.7 803.5 275.7 806.0 280.0C808.5 284.3 812.0 289.5 815.0 294.0C818.0 298.5 818.8 304.3 824.0 307.0C829.2 309.7 838.7 309.3 846.0 310.0C853.3 310.7 861.7 310.8 868.0 311.0C874.3 311.2 879.5 312.8 884.0 311.0C888.5 309.2 891.0 304.2 895.0 300.0C899.0 295.8 904.3 291.0 908.0 286.0C911.7 281.0 915.5 276.0 917.0 270.0C918.5 264.0 917.8 256.0 917.0 250.0C916.2 244.0 914.0 238.3 912.0 234.0C910.0 229.7 910.3 227.0 905.0 224.0C899.7 221.0 889.2 217.7 880.0 216.0C870.8 214.3 858.7 213.0 850.0 214.0C841.3 215.0 834.7 218.3 828.0 222.0C821.3 225.7 814.3 231.0 810.0 236.0C805.7 241.0 803.7 246.7 802.0 252.0C800.3 257.3 799.3 263.3 800.0 268.0Z" fill="#f40000"/><path d="M822 303Q850 307 884 309L890 302Q860 302 826 296Z" fill="#ff1a1a" opacity=".6"/><path d="M809.5 270.0C810.3 271.8 812.3 277.7 814.5 281.0C816.7 284.3 819.2 287.4 822.5 290.0C825.8 292.6 830.4 294.8 834.5 296.5C838.6 298.2 842.9 299.5 847.2 300.5C851.5 301.5 856.1 302.4 860.5 302.5C864.9 302.6 869.5 302.2 873.5 301.0C877.5 299.8 881.0 297.5 884.5 295.0C888.0 292.5 891.5 289.2 894.5 286.0C897.5 282.8 900.3 279.7 902.5 276.0C904.7 272.3 906.4 267.7 907.5 264.0C908.6 260.3 909.2 257.3 909.0 254.0C908.8 250.7 907.8 247.2 906.5 244.0C905.2 240.8 902.3 236.5 901.5 235.0" fill="none" stroke="#a00000" stroke-width="11" stroke-linejoin="round" filter="url(#b2)"/><path d="M809.0 268.0C809.8 269.8 811.8 275.7 814.0 279.0C816.2 282.3 818.7 285.4 822.0 288.0C825.3 290.6 829.9 292.8 834.0 294.5C838.1 296.2 842.4 297.5 846.7 298.5C851.0 299.5 855.6 300.4 860.0 300.5C864.4 300.6 869.0 300.2 873.0 299.0C877.0 297.8 880.5 295.5 884.0 293.0C887.5 290.5 891.0 287.2 894.0 284.0C897.0 280.8 899.8 277.7 902.0 274.0C904.2 270.3 905.9 265.7 907.0 262.0C908.1 258.3 908.7 255.3 908.5 252.0C908.3 248.7 907.2 245.2 906.0 242.0C904.8 238.8 901.8 234.5 901.0 233.0" fill="none" stroke="#560000" stroke-width="7" stroke-linejoin="round" filter="url(#b1)"/><path d="M808.0 265.0C808.8 266.8 810.8 272.7 813.0 276.0C815.2 279.3 817.7 282.4 821.0 285.0C824.3 287.6 828.9 289.8 833.0 291.5C837.1 293.2 841.4 294.5 845.7 295.5C850.0 296.5 854.6 297.4 859.0 297.5C863.4 297.6 868.0 297.2 872.0 296.0C876.0 294.8 879.5 292.5 883.0 290.0C886.5 287.5 890.0 284.2 893.0 281.0C896.0 277.8 898.8 274.7 901.0 271.0C903.2 267.3 904.9 262.7 906.0 259.0C907.1 255.3 907.7 252.3 907.5 249.0C907.3 245.7 906.2 242.2 905.0 239.0C903.8 235.8 900.8 231.5 900.0 230.0" fill="none" stroke="#300000" stroke-width="3.500" filter="url(#b1)"/><path d="M811.7 266.7C810.7 262.2 813.0 258.3 815.8 255.0C818.6 251.7 825.4 250.3 828.3 246.7C831.2 243.1 831.1 236.9 833.3 233.3C835.5 229.7 838.1 227.2 841.7 225.0C845.3 222.8 850.3 220.6 855.0 220.0C859.7 219.4 865.8 220.3 870.0 221.7C874.2 223.1 877.9 226.1 880.0 228.3C882.1 230.5 880.3 233.6 882.5 235.0C884.7 236.4 890.4 235.3 893.3 236.7C896.2 238.1 898.5 240.2 900.0 243.3C901.5 246.4 903.0 250.6 902.5 255.0C902.0 259.4 899.3 265.6 896.7 270.0C894.1 274.4 890.6 278.4 886.7 281.7C882.8 285.0 878.6 288.1 873.3 290.0C868.0 291.9 861.1 293.3 855.0 293.3C848.9 293.3 842.2 291.9 836.7 290.0C831.2 288.1 825.9 285.6 821.7 281.7C817.5 277.8 812.7 271.1 811.7 266.7Z" fill="#cc0000"/><clipPath id="cp3"><path d="M811.7 266.7C810.7 262.2 813.0 258.3 815.8 255.0C818.6 251.7 825.4 250.3 828.3 246.7C831.2 243.1 831.1 236.9 833.3 233.3C835.5 229.7 838.1 227.2 841.7 225.0C845.3 222.8 850.3 220.6 855.0 220.0C859.7 219.4 865.8 220.3 870.0 221.7C874.2 223.1 877.9 226.1 880.0 228.3C882.1 230.5 880.3 233.6 882.5 235.0C884.7 236.4 890.4 235.3 893.3 236.7C896.2 238.1 898.5 240.2 900.0 243.3C901.5 246.4 903.0 250.6 902.5 255.0C902.0 259.4 899.3 265.6 896.7 270.0C894.1 274.4 890.6 278.4 886.7 281.7C882.8 285.0 878.6 288.1 873.3 290.0C868.0 291.9 861.1 293.3 855.0 293.3C848.9 293.3 842.2 291.9 836.7 290.0C831.2 288.1 825.9 285.6 821.7 281.7C817.5 277.8 812.7 271.1 811.7 266.7Z"/></clipPath><g clip-path="url(#cp3)"><path d="M805 300L812 268Q822 284 838 290Q856 294 874 290Q890 282 900 268L906 250L915 300Z" fill="#f60000"/><path d="M880 226L906 240L904 262L896 272Q900 256 894 246Q888 238 876 238Z" fill="#f00000"/><path d="M811.7 266.7C810.7 262.2 813.0 258.3 815.8 255.0C818.6 251.7 825.4 250.3 828.3 246.7C831.2 243.1 831.1 236.9 833.3 233.3C835.5 229.7 838.1 227.2 841.7 225.0C845.3 222.8 850.3 220.6 855.0 220.0C859.7 219.4 865.8 220.3 870.0 221.7C874.2 223.1 877.9 226.1 880.0 228.3C882.1 230.5 880.3 233.6 882.5 235.0C884.7 236.4 890.4 235.3 893.3 236.7C896.2 238.1 898.5 240.2 900.0 243.3C901.5 246.4 903.0 250.6 902.5 255.0C902.0 259.4 899.3 265.6 896.7 270.0C894.1 274.4 890.6 278.4 886.7 281.7C882.8 285.0 878.6 288.1 873.3 290.0C868.0 291.9 861.1 293.3 855.0 293.3C848.9 293.3 842.2 291.9 836.7 290.0C831.2 288.1 825.9 285.6 821.7 281.7C817.5 277.8 812.7 271.1 811.7 266.7Z" fill="none" stroke="#ff1414" stroke-width="4.500"/></g><path d="M812 268Q820 282 838 289Q856 293 872 289Q886 282 896 270L892 268Q882 280 868 284Q850 287 836 282Q822 276 816 262Z" fill="#ff2828" opacity=".55"/><path d="M838.3 273.3C837.5 270.0 839.5 265.6 841.7 261.7C843.9 257.8 847.5 253.3 851.7 250.0C855.9 246.7 861.4 243.4 866.7 241.7C872.0 240.0 878.6 239.4 883.3 240.0C888.0 240.6 892.8 242.2 895.0 245.0C897.2 247.8 897.5 252.5 896.7 256.7C895.9 260.9 893.3 266.1 890.0 270.0C886.7 273.9 881.7 277.8 876.7 280.0C871.7 282.2 865.0 283.0 860.0 283.3C855.0 283.6 850.3 283.4 846.7 281.7C843.1 280.0 839.1 276.6 838.3 273.3Z" fill="#8c0000"/><clipPath id="chl"><path d="M838.3 273.3C837.5 270.0 839.5 265.6 841.7 261.7C843.9 257.8 847.5 253.3 851.7 250.0C855.9 246.7 861.4 243.4 866.7 241.7C872.0 240.0 878.6 239.4 883.3 240.0C888.0 240.6 892.8 242.2 895.0 245.0C897.2 247.8 897.5 252.5 896.7 256.7C895.9 260.9 893.3 266.1 890.0 270.0C886.7 273.9 881.7 277.8 876.7 280.0C871.7 282.2 865.0 283.0 860.0 283.3C855.0 283.6 850.3 283.4 846.7 281.7C843.1 280.0 839.1 276.6 838.3 273.3Z"/></clipPath><g clip-path="url(#chl)"><path d="M868 238L900 240L900 262L888 274Q892 258 884 250Q876 244 860 246Z" fill="#d80000" filter="url(#b2)"/><path d="M836 276Q840 258 856 246L870 240L850 244L838 262Z" fill="#5c0000" filter="url(#b2)"/><path d="M844 284Q862 286 878 278L890 268L884 282L860 288Z" fill="#b00000" filter="url(#b2)"/></g><path d="M828.300 246.700Q834 244 838 238L834 233Z" fill="#c00000"/><path d="M880 228.300L882.500 235L888 236Q884 230 880 228.300Z" fill="#a80000"/><path d="M826 240Q836 224 852 220L880 222L866 214L846 212L832 222Z" fill="#e80000"/><path d="M868 221Q876 226 880 234L884 230L878 222Z" fill="#c00000"/><path d="M824 326Q850 322 884 324L888 330Q860 332 830 338Z" fill="#e00000" opacity=".7" filter="url(#b2)"/><path d="M886.700 326L892 316L898 307L913 293L926 268L934 262L941 300L938 330L925 350Q930 320 920 300Q905 318 896 334Z" fill="#e40000" opacity=".55"/></g><path d="M960.0 220.0C961.5 213.0 961.0 208.0 963.0 203.0C965.0 198.0 968.0 193.0 971.7 190.0C975.4 187.0 980.8 185.0 985.0 185.0C989.2 185.0 993.4 187.5 996.7 190.0C1000.0 192.5 1002.3 199.3 1005.0 200.0C1007.7 200.7 1009.4 195.4 1013.0 194.0C1016.6 192.6 1021.1 191.9 1026.7 191.7C1032.3 191.4 1041.5 190.8 1046.7 192.5C1051.9 194.2 1055.0 198.3 1058.0 201.7C1061.0 205.1 1062.2 209.4 1065.0 213.0C1067.8 216.6 1072.8 219.1 1075.0 223.0C1077.2 226.9 1075.5 234.2 1078.0 236.7C1080.5 239.2 1086.3 236.3 1090.0 238.0C1093.7 239.7 1097.9 243.4 1100.0 246.7C1102.1 250.0 1102.8 253.8 1102.5 258.0C1102.2 262.2 1100.4 267.8 1098.0 271.7C1095.6 275.6 1089.9 278.6 1088.0 281.7C1086.1 284.8 1088.6 286.9 1086.7 290.0C1084.8 293.1 1080.7 295.0 1076.7 300.0C1072.8 305.0 1068.0 313.9 1063.0 320.0C1058.0 326.1 1052.2 332.2 1046.7 336.7C1041.2 341.1 1035.6 344.3 1030.0 346.7C1024.4 349.1 1018.5 350.4 1013.0 351.0C1007.5 351.6 1002.2 351.1 996.7 350.0C991.2 348.9 985.6 346.9 980.0 344.5C974.4 342.1 968.0 339.1 963.0 335.5C958.0 331.9 953.0 326.8 950.0 323.0C947.0 319.2 946.1 317.4 945.0 313.0C943.9 308.6 943.2 303.9 943.5 296.7C943.8 289.5 945.2 278.6 947.0 270.0C948.8 261.4 951.8 253.3 954.0 245.0C956.2 236.7 958.5 227.0 960.0 220.0Z" fill="url(#rgR)"/><clipPath id="cr"><path d="M960.0 220.0C961.5 213.0 961.0 208.0 963.0 203.0C965.0 198.0 968.0 193.0 971.7 190.0C975.4 187.0 980.8 185.0 985.0 185.0C989.2 185.0 993.4 187.5 996.7 190.0C1000.0 192.5 1002.3 199.3 1005.0 200.0C1007.7 200.7 1009.4 195.4 1013.0 194.0C1016.6 192.6 1021.1 191.9 1026.7 191.7C1032.3 191.4 1041.5 190.8 1046.7 192.5C1051.9 194.2 1055.0 198.3 1058.0 201.7C1061.0 205.1 1062.2 209.4 1065.0 213.0C1067.8 216.6 1072.8 219.1 1075.0 223.0C1077.2 226.9 1075.5 234.2 1078.0 236.7C1080.5 239.2 1086.3 236.3 1090.0 238.0C1093.7 239.7 1097.9 243.4 1100.0 246.7C1102.1 250.0 1102.8 253.8 1102.5 258.0C1102.2 262.2 1100.4 267.8 1098.0 271.7C1095.6 275.6 1089.9 278.6 1088.0 281.7C1086.1 284.8 1088.6 286.9 1086.7 290.0C1084.8 293.1 1080.7 295.0 1076.7 300.0C1072.8 305.0 1068.0 313.9 1063.0 320.0C1058.0 326.1 1052.2 332.2 1046.7 336.7C1041.2 341.1 1035.6 344.3 1030.0 346.7C1024.4 349.1 1018.5 350.4 1013.0 351.0C1007.5 351.6 1002.2 351.1 996.7 350.0C991.2 348.9 985.6 346.9 980.0 344.5C974.4 342.1 968.0 339.1 963.0 335.5C958.0 331.9 953.0 326.8 950.0 323.0C947.0 319.2 946.1 317.4 945.0 313.0C943.9 308.6 943.2 303.9 943.5 296.7C943.8 289.5 945.2 278.6 947.0 270.0C948.8 261.4 951.8 253.3 954.0 245.0C956.2 236.7 958.5 227.0 960.0 220.0Z"/></clipPath><g clip-path="url(#cr)"><path d="M960 222L944 300L950 324L965 336Q958 300 966 262L978 264Z" fill="#e60000"/><path d="M960.5 221.0C961.3 222.5 963.7 226.8 965.5 230.0C967.3 233.2 969.7 236.3 971.2 240.0C972.7 243.7 973.5 247.8 974.5 252.0C975.5 256.2 976.2 262.2 977.5 265.0C978.8 267.8 979.2 267.7 982.5 269.0C985.8 270.3 992.5 271.3 997.5 273.0C1002.5 274.7 1008.2 276.9 1012.5 279.0C1016.8 281.1 1020.2 283.3 1023.5 285.5C1026.8 287.7 1030.2 289.6 1032.5 292.0C1034.8 294.4 1035.3 299.8 1037.5 300.0C1039.7 300.2 1041.8 294.8 1045.5 293.0C1049.2 291.2 1053.8 290.3 1059.5 289.0C1065.2 287.7 1074.8 285.2 1079.5 285.0C1084.2 284.8 1086.2 287.5 1087.5 288.0" fill="none" stroke="#a00000" stroke-width="11" stroke-linejoin="round" filter="url(#b2)"/><path d="M961.0 219.0C961.8 220.5 964.2 224.8 966.0 228.0C967.8 231.2 970.2 234.3 971.7 238.0C973.2 241.7 974.0 245.8 975.0 250.0C976.0 254.2 976.7 260.2 978.0 263.0C979.3 265.8 979.7 265.7 983.0 267.0C986.3 268.3 993.0 269.3 998.0 271.0C1003.0 272.7 1008.7 274.9 1013.0 277.0C1017.3 279.1 1020.7 281.3 1024.0 283.5C1027.3 285.7 1030.7 287.6 1033.0 290.0C1035.3 292.4 1035.8 297.8 1038.0 298.0C1040.2 298.2 1042.3 292.8 1046.0 291.0C1049.7 289.2 1054.3 288.3 1060.0 287.0C1065.7 285.7 1075.3 283.2 1080.0 283.0C1084.7 282.8 1086.7 285.5 1088.0 286.0" fill="none" stroke="#520000" stroke-width="6.500" stroke-linejoin="round" filter="url(#b1)"/><path d="M962.5 216.0C963.3 217.5 965.7 221.8 967.5 225.0C969.3 228.2 971.7 231.3 973.2 235.0C974.7 238.7 975.5 242.8 976.5 247.0C977.5 251.2 978.2 257.2 979.5 260.0C980.8 262.8 981.2 262.7 984.5 264.0C987.8 265.3 994.5 266.3 999.5 268.0C1004.5 269.7 1010.2 271.9 1014.5 274.0C1018.8 276.1 1022.2 278.3 1025.5 280.5C1028.8 282.7 1032.2 284.6 1034.5 287.0C1036.8 289.4 1037.3 294.8 1039.5 295.0C1041.7 295.2 1043.8 289.8 1047.5 288.0C1051.2 286.2 1055.8 285.3 1061.5 284.0C1067.2 282.7 1076.8 280.2 1081.5 280.0C1086.2 279.8 1088.2 282.5 1089.5 283.0" fill="none" stroke="#2a0000" stroke-width="3" filter="url(#b1)"/><path d="M965.0 215.0C965.0 220.7 969.8 224.8 972.0 230.0C974.2 235.2 976.0 241.0 978.0 246.0C980.0 251.0 980.3 256.8 984.0 260.0C987.7 263.2 994.7 263.0 1000.0 265.0C1005.3 267.0 1010.7 269.2 1016.0 272.0C1021.3 274.8 1028.0 279.3 1032.0 282.0C1036.0 284.7 1036.0 288.0 1040.0 288.0C1044.0 288.0 1049.7 283.8 1056.0 282.0C1062.3 280.2 1072.0 279.3 1078.0 277.0C1084.0 274.7 1088.7 271.5 1092.0 268.0C1095.3 264.5 1097.7 259.8 1098.0 256.0C1098.3 252.2 1096.7 247.7 1094.0 245.0C1091.3 242.3 1086.0 242.2 1082.0 240.0C1078.0 237.8 1073.7 236.2 1070.0 232.0C1066.3 227.8 1064.0 220.3 1060.0 215.0C1056.0 209.7 1051.7 203.2 1046.0 200.0C1040.3 196.8 1032.0 196.0 1026.0 196.0C1020.0 196.0 1014.7 200.0 1010.0 200.0C1005.3 200.0 1002.2 197.7 998.0 196.0C993.8 194.3 989.3 190.0 985.0 190.0C980.7 190.0 975.3 191.8 972.0 196.0C968.7 200.2 965.0 209.3 965.0 215.0Z" fill="#f20000"/><path d="M972 200Q966 212 972 228L982 258L990 260Q982 236 982 218Q984 204 992 196L984 191Z" fill="#e00000"/><path d="M973.5 199.0C973.2 200.8 971.3 206.2 971.5 210.0C971.7 213.8 973.2 218.5 974.5 222.0C975.8 225.5 977.7 228.0 979.5 231.0C981.3 234.0 982.7 236.5 985.5 240.0C988.3 243.5 993.0 248.3 996.2 252.0C999.4 255.7 1001.8 258.8 1004.5 262.0C1007.2 265.2 1009.3 268.5 1012.5 271.0C1015.7 273.5 1020.0 275.2 1023.5 277.0C1027.0 278.8 1029.5 281.3 1033.5 282.0C1037.5 282.7 1042.7 281.7 1047.5 281.0C1052.3 280.3 1057.8 279.7 1062.5 278.0C1067.2 276.3 1071.3 273.8 1075.5 271.0C1079.7 268.2 1084.3 264.2 1087.5 261.0C1090.7 257.8 1093.3 253.5 1094.5 252.0" fill="none" stroke="#a00000" stroke-width="11" stroke-linejoin="round" filter="url(#b2)"/><path d="M974.0 197.0C973.7 198.8 971.8 204.2 972.0 208.0C972.2 211.8 973.7 216.5 975.0 220.0C976.3 223.5 978.2 226.0 980.0 229.0C981.8 232.0 983.2 234.5 986.0 238.0C988.8 241.5 993.5 246.3 996.7 250.0C999.9 253.7 1002.3 256.8 1005.0 260.0C1007.7 263.2 1009.8 266.5 1013.0 269.0C1016.2 271.5 1020.5 273.2 1024.0 275.0C1027.5 276.8 1030.0 279.3 1034.0 280.0C1038.0 280.7 1043.2 279.7 1048.0 279.0C1052.8 278.3 1058.3 277.7 1063.0 276.0C1067.7 274.3 1071.8 271.8 1076.0 269.0C1080.2 266.2 1084.8 262.2 1088.0 259.0C1091.2 255.8 1093.8 251.5 1095.0 250.0" fill="none" stroke="#560000" stroke-width="7" stroke-linejoin="round" filter="url(#b1)"/><path d="M975.0 194.0C974.7 195.8 972.8 201.2 973.0 205.0C973.2 208.8 974.7 213.5 976.0 217.0C977.3 220.5 979.2 223.0 981.0 226.0C982.8 229.0 984.2 231.5 987.0 235.0C989.8 238.5 994.5 243.3 997.7 247.0C1000.9 250.7 1003.3 253.8 1006.0 257.0C1008.7 260.2 1010.8 263.5 1014.0 266.0C1017.2 268.5 1021.5 270.2 1025.0 272.0C1028.5 273.8 1031.0 276.3 1035.0 277.0C1039.0 277.7 1044.2 276.7 1049.0 276.0C1053.8 275.3 1059.3 274.7 1064.0 273.0C1068.7 271.3 1072.8 268.8 1077.0 266.0C1081.2 263.2 1085.8 259.2 1089.0 256.0C1092.2 252.8 1094.8 248.5 1096.0 247.0" fill="none" stroke="#2e0000" stroke-width="3" filter="url(#b1)"/><path d="M984.0 222.0C984.0 226.7 987.3 230.0 990.0 234.0C992.7 238.0 996.7 242.0 1000.0 246.0C1003.3 250.0 1006.3 254.5 1010.0 258.0C1013.7 261.5 1017.7 264.7 1022.0 267.0C1026.3 269.3 1031.0 271.3 1036.0 272.0C1041.0 272.7 1047.0 272.0 1052.0 271.0C1057.0 270.0 1061.7 268.3 1066.0 266.0C1070.3 263.7 1074.7 260.2 1078.0 257.0C1081.3 253.8 1085.7 250.2 1086.0 247.0C1086.3 243.8 1082.3 241.2 1080.0 238.0C1077.7 234.8 1074.7 232.0 1072.0 228.0C1069.3 224.0 1067.7 218.3 1064.0 214.0C1060.3 209.7 1055.7 204.7 1050.0 202.0C1044.3 199.3 1036.3 197.8 1030.0 198.0C1023.7 198.2 1017.0 202.7 1012.0 203.0C1007.0 203.3 1003.7 199.5 1000.0 200.0C996.3 200.5 992.7 202.3 990.0 206.0C987.3 209.7 984.0 217.3 984.0 222.0Z" fill="#f40000"/><path d="M1000.5 207.5C999.8 208.8 997.2 213.0 996.5 215.5C995.8 218.0 996.0 219.7 996.5 222.5C997.0 225.3 998.2 229.3 999.5 232.5C1000.8 235.7 1002.3 238.7 1004.5 241.5C1006.7 244.3 1009.5 247.0 1012.5 249.5C1015.5 252.0 1018.8 254.7 1022.5 256.5C1026.2 258.3 1030.5 259.6 1034.5 260.5C1038.5 261.4 1042.7 261.8 1046.5 262.0C1050.3 262.2 1054.2 262.1 1057.5 261.5C1060.8 260.9 1064.2 260.5 1066.5 258.5C1068.8 256.5 1070.3 252.3 1071.5 249.5C1072.7 246.7 1073.2 242.8 1073.5 241.5" fill="none" stroke="#a80000" stroke-width="9" stroke-linejoin="round" filter="url(#b2)"/><path d="M1001.0 206.0C1000.3 207.3 997.7 211.5 997.0 214.0C996.3 216.5 996.5 218.2 997.0 221.0C997.5 223.8 998.7 227.8 1000.0 231.0C1001.3 234.2 1002.8 237.2 1005.0 240.0C1007.2 242.8 1010.0 245.5 1013.0 248.0C1016.0 250.5 1019.3 253.2 1023.0 255.0C1026.7 256.8 1031.0 258.1 1035.0 259.0C1039.0 259.9 1043.2 260.3 1047.0 260.5C1050.8 260.7 1054.7 260.6 1058.0 260.0C1061.3 259.4 1064.7 259.0 1067.0 257.0C1069.3 255.0 1070.8 250.8 1072.0 248.0C1073.2 245.2 1073.7 241.3 1074.0 240.0" fill="none" stroke="#5e0000" stroke-width="5.500" stroke-linejoin="round" filter="url(#b1)"/><path d="M1002.0 203.5C1001.3 204.8 998.7 209.0 998.0 211.5C997.3 214.0 997.5 215.7 998.0 218.5C998.5 221.3 999.7 225.3 1001.0 228.5C1002.3 231.7 1003.8 234.7 1006.0 237.5C1008.2 240.3 1011.0 243.0 1014.0 245.5C1017.0 248.0 1020.3 250.7 1024.0 252.5C1027.7 254.3 1032.0 255.6 1036.0 256.5C1040.0 257.4 1044.2 257.8 1048.0 258.0C1051.8 258.2 1055.7 258.1 1059.0 257.5C1062.3 256.9 1065.7 256.5 1068.0 254.5C1070.3 252.5 1071.8 248.3 1073.0 245.5C1074.2 242.7 1074.7 238.8 1075.0 237.5" fill="none" stroke="#340000" stroke-width="2.500" filter="url(#b1)"/><path d="M1000.2 220.4C999.9 215.2 1003.7 209.2 1006.2 205.4C1008.7 201.7 1011.8 199.4 1015.4 197.9C1019.0 196.4 1024.2 196.4 1027.8 196.4C1031.4 196.4 1033.7 197.8 1037.0 197.9C1040.3 198.0 1044.1 196.1 1047.4 197.0C1050.7 197.9 1054.0 200.4 1056.6 203.3C1059.2 206.2 1060.4 211.1 1063.0 214.4C1065.6 217.8 1070.2 219.9 1072.2 223.4C1074.2 226.9 1075.5 231.7 1075.2 235.4C1074.9 239.2 1072.4 242.9 1070.6 245.9C1068.8 248.9 1068.7 251.9 1064.6 253.4C1060.5 254.9 1052.9 255.4 1046.2 254.9C1039.5 254.4 1031.0 253.4 1024.6 250.4C1018.2 247.4 1011.9 241.9 1007.8 236.9C1003.7 231.9 1000.5 225.7 1000.2 220.4Z" fill="#d80000"/><clipPath id="cq4"><path d="M1000.2 220.4C999.9 215.2 1003.7 209.2 1006.2 205.4C1008.7 201.7 1011.8 199.4 1015.4 197.9C1019.0 196.4 1024.2 196.4 1027.8 196.4C1031.4 196.4 1033.7 197.8 1037.0 197.9C1040.3 198.0 1044.1 196.1 1047.4 197.0C1050.7 197.9 1054.0 200.4 1056.6 203.3C1059.2 206.2 1060.4 211.1 1063.0 214.4C1065.6 217.8 1070.2 219.9 1072.2 223.4C1074.2 226.9 1075.5 231.7 1075.2 235.4C1074.9 239.2 1072.4 242.9 1070.6 245.9C1068.8 248.9 1068.7 251.9 1064.6 253.4C1060.5 254.9 1052.9 255.4 1046.2 254.9C1039.5 254.4 1031.0 253.4 1024.6 250.4C1018.2 247.4 1011.9 241.9 1007.8 236.9C1003.7 231.9 1000.5 225.7 1000.2 220.4Z"/></clipPath><g clip-path="url(#cq4)"><path d="M990 262L1005 238Q1022 254 1046 258Q1066 257 1074 248L1080 232L1090 262Z" fill="#f60000"/><path d="M1000.2 220.4C999.9 215.2 1003.7 209.2 1006.2 205.4C1008.7 201.7 1011.8 199.4 1015.4 197.9C1019.0 196.4 1024.2 196.4 1027.8 196.4C1031.4 196.4 1033.7 197.8 1037.0 197.9C1040.3 198.0 1044.1 196.1 1047.4 197.0C1050.7 197.9 1054.0 200.4 1056.6 203.3C1059.2 206.2 1060.4 211.1 1063.0 214.4C1065.6 217.8 1070.2 219.9 1072.2 223.4C1074.2 226.9 1075.5 231.7 1075.2 235.4C1074.9 239.2 1072.4 242.9 1070.6 245.9C1068.8 248.9 1068.7 251.9 1064.6 253.4C1060.5 254.9 1052.9 255.4 1046.2 254.9C1039.5 254.4 1031.0 253.4 1024.6 250.4C1018.2 247.4 1011.9 241.9 1007.8 236.9C1003.7 231.9 1000.5 225.7 1000.2 220.4Z" fill="none" stroke="#ff1414" stroke-width="4.500"/></g><path d="M1008.3 216.7C1008.9 211.4 1013.1 205.8 1016.7 203.3C1020.3 200.8 1026.1 200.6 1030.0 201.7C1033.9 202.8 1036.7 206.9 1040.0 210.0C1043.3 213.1 1046.7 217.2 1050.0 220.0C1053.3 222.8 1057.2 223.9 1060.0 226.7C1062.8 229.5 1066.4 233.1 1066.7 236.7C1067.0 240.3 1065.0 245.5 1061.7 248.3C1058.4 251.1 1052.3 253.3 1046.7 253.3C1041.1 253.3 1033.9 251.4 1028.3 248.3C1022.7 245.2 1016.6 240.3 1013.3 235.0C1010.0 229.7 1007.7 222.0 1008.3 216.7Z" fill="#c00000"/><path d="M1009 218Q1014 206 1026 203L1034 206Q1020 208 1016 222L1020 238L1013 234Z" fill="#a00000" filter="url(#b1)"/><path d="M1036 206Q1044 214 1052 220L1062 228L1058 222Q1050 212 1040 206Z" fill="#b40000" filter="url(#b1)"/><path d="M1030 249Q1048 256 1062 248L1066 238Q1058 250 1044 250Z" fill="#e80000"/><path d="M1044 214Q1056 222 1062 234Q1064 244 1058 248Q1050 240 1044 230Q1038 222 1036 212Z" fill="#a80000" filter="url(#b2)" opacity=".8"/><path d="M1030 196Q1040 200 1046 210L1060 205L1050 196Z" fill="#e40000"/><path d="M1038 298Q1060 292 1088 288L1076 302L1046 338L1020 350Q1040 330 1038 298Z" fill="#e00000" opacity=".5"/></g><defs>
<linearGradient id="gg" gradientUnits="userSpaceOnUse" x1="585" y1="0" x2="730" y2="0"><stop offset="0" stop-color="#00d800"/><stop offset=".25" stop-color="#00f400"/><stop offset=".55" stop-color="#00e000"/><stop offset="1" stop-color="#00d000"/></linearGradient>
<linearGradient id="gs" gradientUnits="userSpaceOnUse" x1="624" y1="0" x2="674" y2="0"><stop offset="0" stop-color="#00c000"/><stop offset=".3" stop-color="#00ee00"/><stop offset=".7" stop-color="#00e400"/><stop offset="1" stop-color="#00b800"/></linearGradient>
</defs><path d="M604.800 293Q605 302 609 314L618 345L660 345L668 312Q669.500 300 668.400 292Q660 301 637 302Q614 301 604.800 293Z" fill="#00c000"/><path d="M637 301L640 345L662 345L668 312Q669.500 300 668.400 292Q660 300 637 301Z" fill="#00e400"/><path d="M660 300L664 296L668.400 292Q669.500 302 667 316L662 335Z" fill="#00c400"/><path d="M636 301.500L638.500 345L641 345L638 301Z" fill="#009000"/><path d="M604.800 293Q605 302 609 314L613 328Q612 310 614 299Z" fill="#00a800"/><ellipse cx="636.600" cy="293.800" rx="31.800" ry="7.600" fill="#00dc00"/><path d="M604.800 294Q614 301.500 637 302Q660 301 668.400 293" fill="none" stroke="#20ff20" stroke-width="1.300"/><path d="M616.500 275V293Q625 298 635 298Q647 298 653 292V275Z" fill="#00b800"/><path d="M616.500 278.5Q628 283.0 640 282.0" fill="none" stroke="#008400" stroke-width="1.300"/><path d="M616.500 280.0Q628 284.5 640 283.5" fill="none" stroke="#00e800" stroke-width="1"/><path d="M616.500 281.7Q628 286.2 640 285.2" fill="none" stroke="#008400" stroke-width="1.300"/><path d="M616.500 283.2Q628 287.7 640 286.7" fill="none" stroke="#00e800" stroke-width="1"/><path d="M616.500 284.9Q628 289.4 640 288.4" fill="none" stroke="#008400" stroke-width="1.300"/><path d="M616.500 286.4Q628 290.9 640 289.9" fill="none" stroke="#00e800" stroke-width="1"/><path d="M616.500 288.1Q628 292.6 640 291.6" fill="none" stroke="#008400" stroke-width="1.300"/><path d="M616.500 289.6Q628 294.1 640 293.1" fill="none" stroke="#00e800" stroke-width="1"/><path d="M616.500 291.3Q628 295.8 640 294.8" fill="none" stroke="#008400" stroke-width="1.300"/><path d="M616.500 292.8Q628 297.3 640 296.3" fill="none" stroke="#00e800" stroke-width="1"/><path d="M616.500 294.5Q628 299.0 640 298.0" fill="none" stroke="#008400" stroke-width="1.300"/><path d="M616.500 296.0Q628 300.5 640 299.5" fill="none" stroke="#00e800" stroke-width="1"/><path d="M638 280Q648 280 653 276V292Q647 297.500 638 298Z" fill="#00dc00"/><path d="M638 284.3Q648 283.5 653 279.0" fill="none" stroke="#009c00" stroke-width="1" stroke-dasharray="1.300 1.300"/><path d="M638 287.5Q648 286.7 653 282.2" fill="none" stroke="#009c00" stroke-width="1" stroke-dasharray="1.300 1.300"/><path d="M638 290.7Q648 289.9 653 285.4" fill="none" stroke="#009c00" stroke-width="1" stroke-dasharray="1.300 1.300"/><path d="M638 293.9Q648 293.1 653 288.6" fill="none" stroke="#009c00" stroke-width="1" stroke-dasharray="1.300 1.300"/><path d="M638 297.1Q648 296.3 653 291.8" fill="none" stroke="#009c00" stroke-width="1" stroke-dasharray="1.300 1.300"/><ellipse cx="634.700" cy="275" rx="18.300" ry="5.200" fill="#00c800"/><path d="M582.7 345.7C582.1 341.9 582.9 339.7 583.5 337.0C584.1 334.3 584.2 332.3 586.2 329.5C588.2 326.7 591.6 322.4 595.5 320.2C599.4 318.0 604.4 316.5 609.4 316.5C614.4 316.5 621.2 318.4 625.6 320.2C630.0 321.9 633.1 324.4 636.0 327.0C638.9 329.6 640.7 335.5 643.0 336.0C645.3 336.5 647.2 332.7 650.0 330.0C652.8 327.3 657.0 323.0 660.0 320.0C663.0 317.0 665.3 314.2 668.0 312.0C670.7 309.8 673.0 307.8 676.0 306.5C679.0 305.2 681.8 304.5 685.8 304.0C689.8 303.5 695.5 302.7 699.7 303.5C704.0 304.3 707.4 305.8 711.3 308.6C715.1 311.4 720.1 316.3 722.8 320.2C725.5 324.1 726.9 327.9 727.5 331.8C728.1 335.7 727.8 339.5 726.3 343.4C724.8 347.3 722.2 351.6 718.2 355.0C714.2 358.4 707.4 360.9 702.0 364.0C696.6 367.1 690.4 369.6 685.8 373.5C681.2 377.4 677.1 382.4 674.2 387.4C671.3 392.4 669.5 397.8 668.4 403.6C667.2 409.4 667.1 415.8 667.3 422.0C667.5 428.2 668.6 434.8 669.6 440.6C670.6 446.4 672.4 451.0 673.0 456.8C673.6 462.6 673.6 470.0 673.2 475.4C672.8 480.8 672.5 485.6 670.7 489.3C668.9 493.0 666.3 495.5 662.6 497.4C658.9 499.3 653.0 500.6 648.7 500.8C644.4 501.0 640.5 500.0 637.0 498.5C633.5 497.0 630.0 494.3 628.0 491.6C626.0 488.9 625.6 486.2 625.0 482.3C624.4 478.4 624.3 473.8 624.4 468.4C624.5 463.0 624.8 455.4 625.6 450.0C626.4 444.6 628.0 440.7 629.0 436.0C630.0 431.3 631.0 427.4 631.4 422.0C631.8 416.6 632.2 409.0 631.4 403.6C630.6 398.2 629.2 393.6 626.7 389.7C624.2 385.8 620.8 383.5 616.3 380.4C611.8 377.3 604.8 374.5 600.0 371.0C595.2 367.5 590.3 363.8 587.4 359.6C584.5 355.4 583.4 349.5 582.7 345.7Z" fill="#00e800"/><clipPath id="cg"><path d="M582.7 345.7C582.1 341.9 582.9 339.7 583.5 337.0C584.1 334.3 584.2 332.3 586.2 329.5C588.2 326.7 591.6 322.4 595.5 320.2C599.4 318.0 604.4 316.5 609.4 316.5C614.4 316.5 621.2 318.4 625.6 320.2C630.0 321.9 633.1 324.4 636.0 327.0C638.9 329.6 640.7 335.5 643.0 336.0C645.3 336.5 647.2 332.7 650.0 330.0C652.8 327.3 657.0 323.0 660.0 320.0C663.0 317.0 665.3 314.2 668.0 312.0C670.7 309.8 673.0 307.8 676.0 306.5C679.0 305.2 681.8 304.5 685.8 304.0C689.8 303.5 695.5 302.7 699.7 303.5C704.0 304.3 707.4 305.8 711.3 308.6C715.1 311.4 720.1 316.3 722.8 320.2C725.5 324.1 726.9 327.9 727.5 331.8C728.1 335.7 727.8 339.5 726.3 343.4C724.8 347.3 722.2 351.6 718.2 355.0C714.2 358.4 707.4 360.9 702.0 364.0C696.6 367.1 690.4 369.6 685.8 373.5C681.2 377.4 677.1 382.4 674.2 387.4C671.3 392.4 669.5 397.8 668.4 403.6C667.2 409.4 667.1 415.8 667.3 422.0C667.5 428.2 668.6 434.8 669.6 440.6C670.6 446.4 672.4 451.0 673.0 456.8C673.6 462.6 673.6 470.0 673.2 475.4C672.8 480.8 672.5 485.6 670.7 489.3C668.9 493.0 666.3 495.5 662.6 497.4C658.9 499.3 653.0 500.6 648.7 500.8C644.4 501.0 640.5 500.0 637.0 498.5C633.5 497.0 630.0 494.3 628.0 491.6C626.0 488.9 625.6 486.2 625.0 482.3C624.4 478.4 624.3 473.8 624.4 468.4C624.5 463.0 624.8 455.4 625.6 450.0C626.4 444.6 628.0 440.7 629.0 436.0C630.0 431.3 631.0 427.4 631.4 422.0C631.8 416.6 632.2 409.0 631.4 403.6C630.6 398.2 629.2 393.6 626.7 389.7C624.2 385.8 620.8 383.5 616.3 380.4C611.8 377.3 604.8 374.5 600.0 371.0C595.2 367.5 590.3 363.8 587.4 359.6C584.5 355.4 583.4 349.5 582.7 345.7Z"/></clipPath><g clip-path="url(#cg)"><path d="M624 430H674V502H624Z" fill="url(#gs)"/><path d="M630 384L668 400L668 432L630 432Z" fill="#00e000"/><path d="M664 318Q656 360 662 400L666 424L670 424L670 400Q676 380 690 370L722 352L728 334L700 352Q676 352 668 326Z" fill="#00d000"/><path d="M666 322Q658 350 660 384L664 420L668 404Q670 388 680 378Q668 360 670 334Z" fill="#00a400" filter="url(#b1)"/><path d="M676 352Q690 360 706 356L722 348L700 364L686 373L676 384Q674 368 676 352Z" fill="#00f400"/><path d="M647.600 334.600Q650 360 651 384L654 416L660 424L664 420L660 386Q658 352 665 322L656 324Z" fill="#008400" filter="url(#b2)"/><path d="M647.600 334.600Q650 360 651 384L654 416L657 418L656 384Q655 352 652 333Z" fill="#005c00" filter="url(#b1)"/><path d="M588 358Q600 370 616.300 380.400Q628 388 631.400 404L631 430L646 430L650 384Q649 360 646 342L640 360Q620 368 600 362Z" fill="#00dc00"/><path d="M640 362Q646 384 644 410L640 430L650 430L651 384Q650 360 647 340Z" fill="#00b800" filter="url(#b1)"/><path d="M583.400 346.300Q584 330 600 321Q614 315 630 321Q644 328 647.600 340Q640 356 620 362Q600 366 588 358Z" fill="#00e000"/><path d="M588 358Q600 366 620 362Q640 356 647.600 340Q650 352 642 364Q628 376 608 372Q594 366 588 358Z" fill="#00f800"/><path d="M587 344Q592 356 612 358Q634 356 644 340Q640 332 630 334Q628 346 610 350Q596 350 590 340Z" fill="#00a000" filter="url(#b1)"/><path d="M592.800 335V343Q598 354 612 353Q626 351 629.800 340V333Z" fill="#00bc00"/><path d="M594 343.5Q606 352.5 629 339.5" fill="none" stroke="#008c00" stroke-width="1"/><path d="M594 346.2Q606 355.2 629 342.2" fill="none" stroke="#008c00" stroke-width="1"/><path d="M594 348.9Q606 357.9 629 344.9" fill="none" stroke="#008c00" stroke-width="1"/><ellipse cx="611.300" cy="334.600" rx="18.500" ry="11.700" fill="#00f000" transform="rotate(-6 611.300 334.600)"/><ellipse cx="698" cy="329.400" rx="31.500" ry="20" fill="#00e400" transform="rotate(24 698 329.400)"/><path d="M672 318Q672 340 694 350Q712 354 724 344Q712 348 698 342Q682 334 680 316Z" fill="#00a800" filter="url(#b1)"/><path d="M688 313L684 328Q688 340 702 344Q716 345 721 337L721.500 321Z" fill="#00b000"/><path d="M685.500 321.0Q698 335.0 721 328.0" fill="none" stroke="#008000" stroke-width="1.200"/><path d="M685.500 322.5Q698 336.5 721 329.5" fill="none" stroke="#00e800" stroke-width=".9"/><path d="M685.500 324.1Q698 338.1 721 331.1" fill="none" stroke="#008000" stroke-width="1.200"/><path d="M685.500 325.6Q698 339.6 721 332.6" fill="none" stroke="#00e800" stroke-width=".9"/><path d="M685.500 327.2Q698 341.2 721 334.2" fill="none" stroke="#008000" stroke-width="1.200"/><path d="M685.500 328.7Q698 342.7 721 335.7" fill="none" stroke="#00e800" stroke-width=".9"/><path d="M685.500 330.3Q698 344.3 721 337.3" fill="none" stroke="#008000" stroke-width="1.200"/><path d="M685.500 331.8Q698 345.8 721 338.8" fill="none" stroke="#00e800" stroke-width=".9"/><path d="M685.500 333.4Q698 347.4 721 340.4" fill="none" stroke="#008000" stroke-width="1.200"/><path d="M685.500 334.9Q698 348.9 721 341.9" fill="none" stroke="#00e800" stroke-width=".9"/><ellipse cx="704.700" cy="316.500" rx="17" ry="11.200" fill="#00e800" transform="rotate(16 704.700 316.500)"/><path d="M629 436Q640 444 656 440L669 432L668 422L631.400 424Z" fill="#00c400" opacity=".8" filter="url(#b1)"/><path d="M624 475.0Q646 484.0 673.500 472.0" fill="none" stroke="#009000" stroke-width="1.300"/><path d="M624 476.6Q646 485.6 673.500 473.6" fill="none" stroke="#00f400" stroke-width=".9"/><path d="M624 478.7Q646 487.7 673.500 475.7" fill="none" stroke="#009000" stroke-width="1.300"/><path d="M624 480.3Q646 489.3 673.500 477.3" fill="none" stroke="#00f400" stroke-width=".9"/><path d="M624 482.4Q646 491.4 673.500 479.4" fill="none" stroke="#009000" stroke-width="1.300"/><path d="M624 484.0Q646 493.0 673.500 481.0" fill="none" stroke="#00f400" stroke-width=".9"/><path d="M624 486.1Q646 495.1 673.500 483.1" fill="none" stroke="#009000" stroke-width="1.300"/><path d="M624 487.7Q646 496.7 673.500 484.7" fill="none" stroke="#00f400" stroke-width=".9"/><path d="M624 489.8Q646 498.8 673.500 486.8" fill="none" stroke="#009000" stroke-width="1.300"/><path d="M624 491.4Q646 500.4 673.500 488.4" fill="none" stroke="#00f400" stroke-width=".9"/><path d="M625 470Q622 440 630 424L626 400L620 384L636 392Q634 420 628 440Q626 456 628 492Z" fill="#00a800" opacity=".45" filter="url(#b2)"/><path d="M672 470Q676 440 668 424L670 400L674 384L664 400Q666 420 670 440Q672 456 668 492Z" fill="#00a000" opacity=".5" filter="url(#b2)"/></g><defs>
<linearGradient id="bs" gradientUnits="userSpaceOnUse" x1="570" y1="0" x2="730" y2="0"><stop offset="0" stop-color="#341600"/><stop offset=".3" stop-color="#522400"/><stop offset=".7" stop-color="#683000"/><stop offset="1" stop-color="#643000"/></linearGradient>
<radialGradient id="bt" gradientUnits="userSpaceOnUse" cx="660" cy="615" r="90"><stop offset="0" stop-color="#8e4400"/><stop offset="1" stop-color="#7a3800"/></radialGradient>
</defs><path d="M570 626V656A79.700 40 0 0 0 729.400 656V626Z" fill="url(#bs)"/><clipPath id="cbs"><path d="M628 626V700H731V626Z"/></clipPath><g clip-path="url(#cbs)"><ellipse cx="649.700" cy="634.0" rx="79.700" ry="40" fill="none" stroke="#4a2000" stroke-width="1.100" opacity=".75"/><ellipse cx="649.700" cy="638.6" rx="79.700" ry="40" fill="none" stroke="#4a2000" stroke-width="1.100" opacity=".75"/><ellipse cx="649.700" cy="643.2" rx="79.700" ry="40" fill="none" stroke="#4a2000" stroke-width="1.100" opacity=".75"/><ellipse cx="649.700" cy="647.8" rx="79.700" ry="40" fill="none" stroke="#4a2000" stroke-width="1.100" opacity=".75"/><ellipse cx="649.700" cy="652.4" rx="79.700" ry="40" fill="none" stroke="#4a2000" stroke-width="1.100" opacity=".75"/></g><ellipse cx="649.700" cy="625" rx="79.700" ry="40" fill="url(#bt)"/><ellipse cx="650" cy="628" rx="62" ry="33" fill="none" stroke="#9a4c00" stroke-width="1.600" opacity=".6"/><ellipse cx="650" cy="627" rx="62" ry="33" fill="none" stroke="#401a00" stroke-width="3"/><ellipse cx="650.500" cy="629" rx="45" ry="24.500" fill="none" stroke="#9a4c00" stroke-width="1.600" opacity=".6"/><ellipse cx="650.500" cy="628" rx="45" ry="24.500" fill="none" stroke="#401a00" stroke-width="3.200"/><path d="M672 609Q690 614 696 630" fill="none" stroke="#3c1800" stroke-width="1.300"/><ellipse cx="650.300" cy="628.500" rx="35" ry="18.800" fill="#8e4400"/><ellipse cx="650.300" cy="629.500" rx="35" ry="18.500" fill="none" stroke="#5a2800" stroke-width="2" opacity=".7"/><ellipse cx="650.300" cy="626" rx="23.500" ry="13.600" fill="#5c2a00"/><path d="M629 622Q650 634 672 622" fill="none" stroke="#7a3a00" stroke-width=".9"/><path d="M629 625Q650 637 672 625" fill="none" stroke="#7a3a00" stroke-width=".9"/><path d="M629 628Q650 640 672 628" fill="none" stroke="#7a3a00" stroke-width=".9"/><path d="M629 631Q650 643 672 631" fill="none" stroke="#7a3a00" stroke-width=".9"/><ellipse cx="650.300" cy="637.400" rx="12.300" ry="3.200" fill="#ffffff"/><path d="M627 628Q630 642 650.300 643Q670 642 674 628Q668 638 650 638.500Q634 638 627 628Z" fill="#a45200"/><path d="M56 916.300L60.200 920.500L64.600 916.300M60.200 920.500V924.800" stroke="#44b054" stroke-width="1.700" fill="none"/><path d="M88.200 916.300L96.600 924.700M96.600 916.300L88.200 924.700" stroke="#c44040" stroke-width="1.700" fill="none"/><path d="M78 909.500H86.700L78 918.300H86.700" stroke="#0808e0" stroke-width="1.900" fill="none"/><path d="M66.400 920L75 925.200" stroke="#44b054" stroke-width="1.900"/><path d="M77.500 926.500L86.300 920.400" stroke="#c04050" stroke-width="1.900"/><path d="M76 914.200V926.800" stroke="#0808c8" stroke-width="2.400"/></svg>
</body></html>
